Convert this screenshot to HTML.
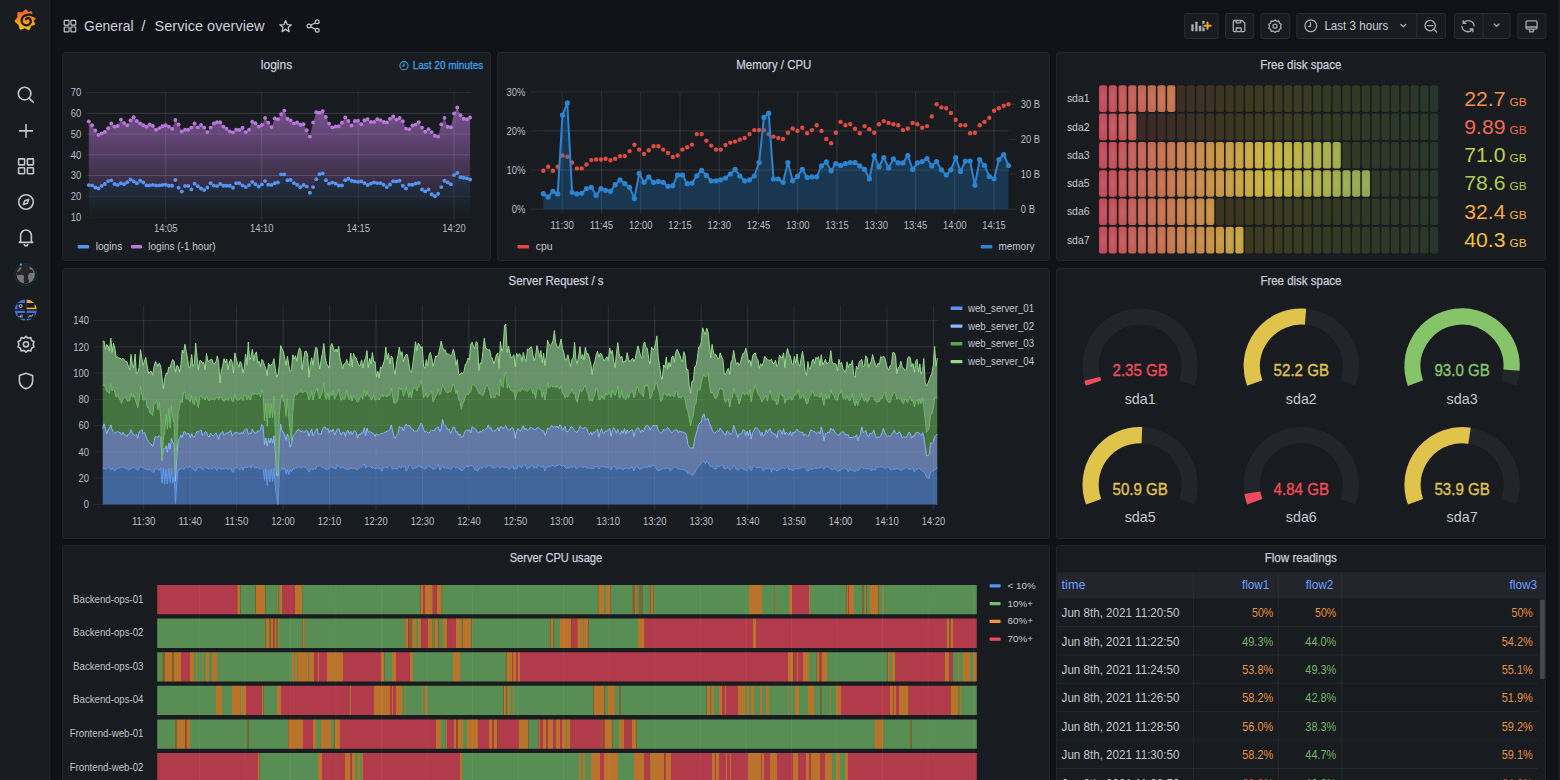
<!DOCTYPE html>
<html><head><meta charset="utf-8"><style>
html,body{margin:0;padding:0;width:1560px;height:780px;overflow:hidden;background:#111217;}
body{font-family:"Liberation Sans", sans-serif;position:relative;}
svg{position:absolute;left:0;top:0;font-family:"Liberation Sans", sans-serif;}
</style></head><body>
<svg width="1560" height="780" viewBox="0 0 1560 780">
<rect x="0" y="0" width="49" height="780" fill="#181b1f"/>
<rect x="49" y="0" width="1" height="780" fill="#202226"/>
<rect x="62.5" y="52.5" width="428" height="208" rx="2.5" fill="#181b1f" stroke="#222529" stroke-width="1"/>
<rect x="497.5" y="52.5" width="552" height="208" rx="2.5" fill="#181b1f" stroke="#222529" stroke-width="1"/>
<rect x="1056.5" y="52.5" width="489" height="208" rx="2.5" fill="#181b1f" stroke="#222529" stroke-width="1"/>
<rect x="62.5" y="268.5" width="987" height="270" rx="2.5" fill="#181b1f" stroke="#222529" stroke-width="1"/>
<rect x="1056.5" y="268.5" width="489" height="270" rx="2.5" fill="#181b1f" stroke="#222529" stroke-width="1"/>
<rect x="62.5" y="545.5" width="987" height="254" rx="2.5" fill="#181b1f" stroke="#222529" stroke-width="1"/>
<rect x="1056.5" y="545.5" width="489" height="254" rx="2.5" fill="#181b1f" stroke="#222529" stroke-width="1"/>
<text x="276.5" y="69.2" font-size="12.2" fill="#ccccdc" text-anchor="middle" font-weight="normal" textLength="31.3" lengthAdjust="spacingAndGlyphs" stroke="#ccccdc" stroke-width="0.25">logins</text>
<text x="773.8" y="69.2" font-size="12.2" fill="#ccccdc" text-anchor="middle" font-weight="normal" textLength="75" lengthAdjust="spacingAndGlyphs" stroke="#ccccdc" stroke-width="0.25">Memory / CPU</text>
<text x="1300.8" y="69.2" font-size="12.2" fill="#ccccdc" text-anchor="middle" font-weight="normal" textLength="81.2" lengthAdjust="spacingAndGlyphs" stroke="#ccccdc" stroke-width="0.25">Free disk space</text>
<text x="556" y="285.2" font-size="12.2" fill="#ccccdc" text-anchor="middle" font-weight="normal" textLength="95" lengthAdjust="spacingAndGlyphs" stroke="#ccccdc" stroke-width="0.25">Server Request / s</text>
<text x="1300.9" y="285.2" font-size="12.2" fill="#ccccdc" text-anchor="middle" font-weight="normal" textLength="81" lengthAdjust="spacingAndGlyphs" stroke="#ccccdc" stroke-width="0.25">Free disk space</text>
<text x="555.9" y="562.2" font-size="12.2" fill="#ccccdc" text-anchor="middle" font-weight="normal" textLength="92.5" lengthAdjust="spacingAndGlyphs" stroke="#ccccdc" stroke-width="0.25">Server CPU usage</text>
<text x="1300.8" y="562.2" font-size="12.2" fill="#ccccdc" text-anchor="middle" font-weight="normal" textLength="72.2" lengthAdjust="spacingAndGlyphs" stroke="#ccccdc" stroke-width="0.25">Flow readings</text>
<line x1="86" y1="92.6" x2="470.7" y2="92.6" stroke="rgba(204,204,220,0.10)" stroke-width="1"/>
<text x="81.2" y="96.4" font-size="10" fill="#bcbcc6" text-anchor="end" font-weight="normal" textLength="10.5" lengthAdjust="spacingAndGlyphs">70</text>
<line x1="86" y1="113.3" x2="470.7" y2="113.3" stroke="rgba(204,204,220,0.10)" stroke-width="1"/>
<text x="81.2" y="117.1" font-size="10" fill="#bcbcc6" text-anchor="end" font-weight="normal" textLength="10.5" lengthAdjust="spacingAndGlyphs">60</text>
<line x1="86" y1="134" x2="470.7" y2="134" stroke="rgba(204,204,220,0.10)" stroke-width="1"/>
<text x="81.2" y="137.8" font-size="10" fill="#bcbcc6" text-anchor="end" font-weight="normal" textLength="10.5" lengthAdjust="spacingAndGlyphs">50</text>
<line x1="86" y1="154.8" x2="470.7" y2="154.8" stroke="rgba(204,204,220,0.10)" stroke-width="1"/>
<text x="81.2" y="158.6" font-size="10" fill="#bcbcc6" text-anchor="end" font-weight="normal" textLength="10.5" lengthAdjust="spacingAndGlyphs">40</text>
<line x1="86" y1="175.5" x2="470.7" y2="175.5" stroke="rgba(204,204,220,0.10)" stroke-width="1"/>
<text x="81.2" y="179.3" font-size="10" fill="#bcbcc6" text-anchor="end" font-weight="normal" textLength="10.5" lengthAdjust="spacingAndGlyphs">30</text>
<line x1="86" y1="196.2" x2="470.7" y2="196.2" stroke="rgba(204,204,220,0.10)" stroke-width="1"/>
<text x="81.2" y="200" font-size="10" fill="#bcbcc6" text-anchor="end" font-weight="normal" textLength="10.5" lengthAdjust="spacingAndGlyphs">20</text>
<line x1="86" y1="216.9" x2="470.7" y2="216.9" stroke="rgba(204,204,220,0.10)" stroke-width="1"/>
<text x="81.2" y="220.7" font-size="10" fill="#bcbcc6" text-anchor="end" font-weight="normal" textLength="10.5" lengthAdjust="spacingAndGlyphs">10</text>
<line x1="165.7" y1="92.6" x2="165.7" y2="221" stroke="rgba(204,204,220,0.10)" stroke-width="1"/>
<text x="165.7" y="231.5" font-size="10" fill="#bcbcc6" text-anchor="middle" font-weight="normal" textLength="23.5" lengthAdjust="spacingAndGlyphs">14:05</text>
<line x1="261.7" y1="92.6" x2="261.7" y2="221" stroke="rgba(204,204,220,0.10)" stroke-width="1"/>
<text x="261.7" y="231.5" font-size="10" fill="#bcbcc6" text-anchor="middle" font-weight="normal" textLength="23.5" lengthAdjust="spacingAndGlyphs">14:10</text>
<line x1="358.3" y1="92.6" x2="358.3" y2="221" stroke="rgba(204,204,220,0.10)" stroke-width="1"/>
<text x="358.3" y="231.5" font-size="10" fill="#bcbcc6" text-anchor="middle" font-weight="normal" textLength="23.5" lengthAdjust="spacingAndGlyphs">14:15</text>
<line x1="454" y1="92.6" x2="454" y2="221" stroke="rgba(204,204,220,0.10)" stroke-width="1"/>
<text x="454" y="231.5" font-size="10" fill="#bcbcc6" text-anchor="middle" font-weight="normal" textLength="23.5" lengthAdjust="spacingAndGlyphs">14:20</text>
<defs><linearGradient id="gp" x1="0" y1="92.6" x2="0" y2="217" gradientUnits="userSpaceOnUse"><stop offset="0" stop-color="#b877d9" stop-opacity="0.68"/><stop offset="1" stop-color="#b877d9" stop-opacity="0.02"/></linearGradient><linearGradient id="gb" x1="0" y1="92.6" x2="0" y2="217" gradientUnits="userSpaceOnUse"><stop offset="0" stop-color="#5794f2" stop-opacity="0.6"/><stop offset="1" stop-color="#5794f2" stop-opacity="0.0"/></linearGradient></defs>
<polygon points="88.8,121.4 92.1,125.2 95.3,130.5 98.5,134.9 101.7,133.5 104.9,131.9 108.1,128.3 111.3,123.4 114.5,126.6 117.7,126 120.9,119.6 124.1,123.1 127.3,125.2 130.5,120.5 133.7,117.2 136.9,121 140.1,123.4 143.3,125.3 146.5,126.7 149.7,124.5 152.9,126 156.1,129.7 159.3,128.1 162.5,126.2 165.7,125.2 168.9,126.6 172.1,128.8 175.4,120 178.6,124.5 181.8,131.4 185,129.8 188.2,129.8 191.4,127.6 194.6,123.4 197.8,127.4 201,125 204.2,127.6 207.4,132.1 210.6,127.6 213.8,123.4 217,122.2 220.2,122.2 223.4,126.6 226.6,128.8 229.8,131.4 233,132.4 236.2,129.8 239.4,130 242.6,127.8 245.8,132.1 249,129.8 252.2,121.7 255.4,123.3 258.7,126.6 261.9,125 265.1,117.9 268.3,122.6 271.5,127.1 274.7,118.4 277.9,119.3 281.1,114.1 284.3,110.6 287.5,118.7 290.7,120.5 293.9,123.4 297.1,122.5 300.3,124.8 303.5,124.3 306.7,130.3 309.9,136.6 313.1,122.4 316.3,112.2 319.5,112.7 322.7,111.3 325.9,117 329.1,123.6 332.3,127.4 335.5,126.5 338.7,126.2 341.9,122.7 345.2,117.4 348.4,121 351.6,125.5 354.8,121 358,120.8 361.2,124.3 364.4,120.3 367.6,119.1 370.8,121.9 374,121.9 377.2,119.3 380.4,120.1 383.6,122 386.8,122.4 390,118.7 393.2,116.5 396.4,119.6 399.6,118 402.8,121.3 406,128.6 409.2,129.3 412.4,125.5 415.6,124.6 418.8,122.2 422,127.6 425.2,131.7 428.5,129.3 431.7,132.1 434.9,135.7 438.1,136.6 441.3,124.4 444.5,117.9 447.7,126.7 450.9,127.2 454.1,113.5 457.3,107.5 460.5,115.3 463.7,118.7 466.9,119.3 470.1,117.5 470.1,179.5 466.9,178.4 463.7,177.7 460.5,177.2 457.3,172.9 454.1,175.1 450.9,184.3 447.7,182.4 444.5,180.7 441.3,187.1 438.1,193.7 434.9,196.2 431.7,194.2 428.5,189.5 425.2,191.4 422,189.5 418.8,182.9 415.6,183.6 412.4,184.7 409.2,184.8 406,188.5 402.8,185.7 399.6,180.8 396.4,181.4 393.2,181.2 390,184.5 386.8,187.1 383.6,184.7 380.4,183.1 377.2,183.1 374,182.4 370.8,183.6 367.6,185 364.4,183.1 361.2,181.4 358,181.9 354.8,181.4 351.6,180.7 348.4,178.8 345.2,180.3 341.9,185.5 338.7,185.5 335.5,183.6 332.3,182.6 329.1,183.6 325.9,180.2 322.7,173.4 319.5,174.3 316.3,179.3 313.1,187.1 309.9,192.8 306.7,186.6 303.5,185 300.3,187.2 297.1,184.8 293.9,183.1 290.7,180 287.5,180.2 284.3,174.4 281.1,174.4 277.9,182.5 274.7,183.2 271.5,184.9 268.3,184.7 265.1,181.1 261.9,184.4 258.7,186.6 255.4,184.2 252.2,182 249,185.1 245.8,187.1 242.6,185.4 239.4,183.3 236.2,183.3 233,187.7 229.8,185.8 226.6,185.8 223.4,185.8 220.2,184 217,186.1 213.8,185.6 210.6,183.3 207.4,187.5 204.2,190.1 201,188.5 197.8,186.3 194.6,183.7 191.4,189.4 188.2,185.9 185,185.9 181.8,191.5 178.6,187.7 175.4,180 172.1,185.8 168.9,185.8 165.7,184.7 162.5,184.9 159.3,185.4 156.1,185.4 152.9,184.9 149.7,185.4 146.5,185.4 143.3,182.5 140.1,180.7 136.9,183.3 133.7,181.4 130.5,179.5 127.3,182.3 124.1,184.2 120.9,183.2 117.7,184.9 114.5,184 111.3,180.4 108.1,181.1 104.9,184 101.7,185.9 98.5,188.5 95.3,187.5 92.1,185.4 88.8,185.1" fill="url(#gp)"/>
<polygon points="88.8,185.1 92.1,185.4 95.3,187.5 98.5,188.5 101.7,185.9 104.9,184 108.1,181.1 111.3,180.4 114.5,184 117.7,184.9 120.9,183.2 124.1,184.2 127.3,182.3 130.5,179.5 133.7,181.4 136.9,183.3 140.1,180.7 143.3,182.5 146.5,185.4 149.7,185.4 152.9,184.9 156.1,185.4 159.3,185.4 162.5,184.9 165.7,184.7 168.9,185.8 172.1,185.8 175.4,180 178.6,187.7 181.8,191.5 185,185.9 188.2,185.9 191.4,189.4 194.6,183.7 197.8,186.3 201,188.5 204.2,190.1 207.4,187.5 210.6,183.3 213.8,185.6 217,186.1 220.2,184 223.4,185.8 226.6,185.8 229.8,185.8 233,187.7 236.2,183.3 239.4,183.3 242.6,185.4 245.8,187.1 249,185.1 252.2,182 255.4,184.2 258.7,186.6 261.9,184.4 265.1,181.1 268.3,184.7 271.5,184.9 274.7,183.2 277.9,182.5 281.1,174.4 284.3,174.4 287.5,180.2 290.7,180 293.9,183.1 297.1,184.8 300.3,187.2 303.5,185 306.7,186.6 309.9,192.8 313.1,187.1 316.3,179.3 319.5,174.3 322.7,173.4 325.9,180.2 329.1,183.6 332.3,182.6 335.5,183.6 338.7,185.5 341.9,185.5 345.2,180.3 348.4,178.8 351.6,180.7 354.8,181.4 358,181.9 361.2,181.4 364.4,183.1 367.6,185 370.8,183.6 374,182.4 377.2,183.1 380.4,183.1 383.6,184.7 386.8,187.1 390,184.5 393.2,181.2 396.4,181.4 399.6,180.8 402.8,185.7 406,188.5 409.2,184.8 412.4,184.7 415.6,183.6 418.8,182.9 422,189.5 425.2,191.4 428.5,189.5 431.7,194.2 434.9,196.2 438.1,193.7 441.3,187.1 444.5,180.7 447.7,182.4 450.9,184.3 454.1,175.1 457.3,172.9 460.5,177.2 463.7,177.7 466.9,178.4 470.1,179.5 470.1,217 88.85,217" fill="#181b1f"/>
<polygon points="88.8,185.1 92.1,185.4 95.3,187.5 98.5,188.5 101.7,185.9 104.9,184 108.1,181.1 111.3,180.4 114.5,184 117.7,184.9 120.9,183.2 124.1,184.2 127.3,182.3 130.5,179.5 133.7,181.4 136.9,183.3 140.1,180.7 143.3,182.5 146.5,185.4 149.7,185.4 152.9,184.9 156.1,185.4 159.3,185.4 162.5,184.9 165.7,184.7 168.9,185.8 172.1,185.8 175.4,180 178.6,187.7 181.8,191.5 185,185.9 188.2,185.9 191.4,189.4 194.6,183.7 197.8,186.3 201,188.5 204.2,190.1 207.4,187.5 210.6,183.3 213.8,185.6 217,186.1 220.2,184 223.4,185.8 226.6,185.8 229.8,185.8 233,187.7 236.2,183.3 239.4,183.3 242.6,185.4 245.8,187.1 249,185.1 252.2,182 255.4,184.2 258.7,186.6 261.9,184.4 265.1,181.1 268.3,184.7 271.5,184.9 274.7,183.2 277.9,182.5 281.1,174.4 284.3,174.4 287.5,180.2 290.7,180 293.9,183.1 297.1,184.8 300.3,187.2 303.5,185 306.7,186.6 309.9,192.8 313.1,187.1 316.3,179.3 319.5,174.3 322.7,173.4 325.9,180.2 329.1,183.6 332.3,182.6 335.5,183.6 338.7,185.5 341.9,185.5 345.2,180.3 348.4,178.8 351.6,180.7 354.8,181.4 358,181.9 361.2,181.4 364.4,183.1 367.6,185 370.8,183.6 374,182.4 377.2,183.1 380.4,183.1 383.6,184.7 386.8,187.1 390,184.5 393.2,181.2 396.4,181.4 399.6,180.8 402.8,185.7 406,188.5 409.2,184.8 412.4,184.7 415.6,183.6 418.8,182.9 422,189.5 425.2,191.4 428.5,189.5 431.7,194.2 434.9,196.2 438.1,193.7 441.3,187.1 444.5,180.7 447.7,182.4 450.9,184.3 454.1,175.1 457.3,172.9 460.5,177.2 463.7,177.7 466.9,178.4 470.1,179.5 470.1,217 88.85,217" fill="url(#gb)"/>
<line x1="88" y1="113.3" x2="470.7" y2="113.3" stroke="rgba(204,204,220,0.09)" stroke-width="1"/>
<line x1="88" y1="134" x2="470.7" y2="134" stroke="rgba(204,204,220,0.09)" stroke-width="1"/>
<line x1="88" y1="154.8" x2="470.7" y2="154.8" stroke="rgba(204,204,220,0.09)" stroke-width="1"/>
<line x1="88" y1="175.5" x2="470.7" y2="175.5" stroke="rgba(204,204,220,0.09)" stroke-width="1"/>
<line x1="88" y1="196.2" x2="470.7" y2="196.2" stroke="rgba(204,204,220,0.09)" stroke-width="1"/>
<line x1="165.7" y1="120" x2="165.7" y2="217" stroke="rgba(204,204,220,0.09)" stroke-width="1"/>
<line x1="261.7" y1="120" x2="261.7" y2="217" stroke="rgba(204,204,220,0.09)" stroke-width="1"/>
<line x1="358.3" y1="120" x2="358.3" y2="217" stroke="rgba(204,204,220,0.09)" stroke-width="1"/>
<line x1="454" y1="120" x2="454" y2="217" stroke="rgba(204,204,220,0.09)" stroke-width="1"/>
<circle cx="88.8" cy="121.4" r="1.95" fill="#b877d9"/>
<circle cx="92.1" cy="125.2" r="1.95" fill="#b877d9"/>
<circle cx="95.3" cy="130.5" r="1.95" fill="#b877d9"/>
<circle cx="98.5" cy="134.9" r="1.95" fill="#b877d9"/>
<circle cx="101.7" cy="133.5" r="1.95" fill="#b877d9"/>
<circle cx="104.9" cy="131.9" r="1.95" fill="#b877d9"/>
<circle cx="108.1" cy="128.3" r="1.95" fill="#b877d9"/>
<circle cx="111.3" cy="123.4" r="1.95" fill="#b877d9"/>
<circle cx="114.5" cy="126.6" r="1.95" fill="#b877d9"/>
<circle cx="117.7" cy="126" r="1.95" fill="#b877d9"/>
<circle cx="120.9" cy="119.6" r="1.95" fill="#b877d9"/>
<circle cx="124.1" cy="123.1" r="1.95" fill="#b877d9"/>
<circle cx="127.3" cy="125.2" r="1.95" fill="#b877d9"/>
<circle cx="130.5" cy="120.5" r="1.95" fill="#b877d9"/>
<circle cx="133.7" cy="117.2" r="1.95" fill="#b877d9"/>
<circle cx="136.9" cy="121" r="1.95" fill="#b877d9"/>
<circle cx="140.1" cy="123.4" r="1.95" fill="#b877d9"/>
<circle cx="143.3" cy="125.3" r="1.95" fill="#b877d9"/>
<circle cx="146.5" cy="126.7" r="1.95" fill="#b877d9"/>
<circle cx="149.7" cy="124.5" r="1.95" fill="#b877d9"/>
<circle cx="152.9" cy="126" r="1.95" fill="#b877d9"/>
<circle cx="156.1" cy="129.7" r="1.95" fill="#b877d9"/>
<circle cx="159.3" cy="128.1" r="1.95" fill="#b877d9"/>
<circle cx="162.5" cy="126.2" r="1.95" fill="#b877d9"/>
<circle cx="165.7" cy="125.2" r="1.95" fill="#b877d9"/>
<circle cx="168.9" cy="126.6" r="1.95" fill="#b877d9"/>
<circle cx="172.1" cy="128.8" r="1.95" fill="#b877d9"/>
<circle cx="175.4" cy="120" r="1.95" fill="#b877d9"/>
<circle cx="178.6" cy="124.5" r="1.95" fill="#b877d9"/>
<circle cx="181.8" cy="131.4" r="1.95" fill="#b877d9"/>
<circle cx="185" cy="129.8" r="1.95" fill="#b877d9"/>
<circle cx="188.2" cy="129.8" r="1.95" fill="#b877d9"/>
<circle cx="191.4" cy="127.6" r="1.95" fill="#b877d9"/>
<circle cx="194.6" cy="123.4" r="1.95" fill="#b877d9"/>
<circle cx="197.8" cy="127.4" r="1.95" fill="#b877d9"/>
<circle cx="201" cy="125" r="1.95" fill="#b877d9"/>
<circle cx="204.2" cy="127.6" r="1.95" fill="#b877d9"/>
<circle cx="207.4" cy="132.1" r="1.95" fill="#b877d9"/>
<circle cx="210.6" cy="127.6" r="1.95" fill="#b877d9"/>
<circle cx="213.8" cy="123.4" r="1.95" fill="#b877d9"/>
<circle cx="217" cy="122.2" r="1.95" fill="#b877d9"/>
<circle cx="220.2" cy="122.2" r="1.95" fill="#b877d9"/>
<circle cx="223.4" cy="126.6" r="1.95" fill="#b877d9"/>
<circle cx="226.6" cy="128.8" r="1.95" fill="#b877d9"/>
<circle cx="229.8" cy="131.4" r="1.95" fill="#b877d9"/>
<circle cx="233" cy="132.4" r="1.95" fill="#b877d9"/>
<circle cx="236.2" cy="129.8" r="1.95" fill="#b877d9"/>
<circle cx="239.4" cy="130" r="1.95" fill="#b877d9"/>
<circle cx="242.6" cy="127.8" r="1.95" fill="#b877d9"/>
<circle cx="245.8" cy="132.1" r="1.95" fill="#b877d9"/>
<circle cx="249" cy="129.8" r="1.95" fill="#b877d9"/>
<circle cx="252.2" cy="121.7" r="1.95" fill="#b877d9"/>
<circle cx="255.4" cy="123.3" r="1.95" fill="#b877d9"/>
<circle cx="258.7" cy="126.6" r="1.95" fill="#b877d9"/>
<circle cx="261.9" cy="125" r="1.95" fill="#b877d9"/>
<circle cx="265.1" cy="117.9" r="1.95" fill="#b877d9"/>
<circle cx="268.3" cy="122.6" r="1.95" fill="#b877d9"/>
<circle cx="271.5" cy="127.1" r="1.95" fill="#b877d9"/>
<circle cx="274.7" cy="118.4" r="1.95" fill="#b877d9"/>
<circle cx="277.9" cy="119.3" r="1.95" fill="#b877d9"/>
<circle cx="281.1" cy="114.1" r="1.95" fill="#b877d9"/>
<circle cx="284.3" cy="110.6" r="1.95" fill="#b877d9"/>
<circle cx="287.5" cy="118.7" r="1.95" fill="#b877d9"/>
<circle cx="290.7" cy="120.5" r="1.95" fill="#b877d9"/>
<circle cx="293.9" cy="123.4" r="1.95" fill="#b877d9"/>
<circle cx="297.1" cy="122.5" r="1.95" fill="#b877d9"/>
<circle cx="300.3" cy="124.8" r="1.95" fill="#b877d9"/>
<circle cx="303.5" cy="124.3" r="1.95" fill="#b877d9"/>
<circle cx="306.7" cy="130.3" r="1.95" fill="#b877d9"/>
<circle cx="309.9" cy="136.6" r="1.95" fill="#b877d9"/>
<circle cx="313.1" cy="122.4" r="1.95" fill="#b877d9"/>
<circle cx="316.3" cy="112.2" r="1.95" fill="#b877d9"/>
<circle cx="319.5" cy="112.7" r="1.95" fill="#b877d9"/>
<circle cx="322.7" cy="111.3" r="1.95" fill="#b877d9"/>
<circle cx="325.9" cy="117" r="1.95" fill="#b877d9"/>
<circle cx="329.1" cy="123.6" r="1.95" fill="#b877d9"/>
<circle cx="332.3" cy="127.4" r="1.95" fill="#b877d9"/>
<circle cx="335.5" cy="126.5" r="1.95" fill="#b877d9"/>
<circle cx="338.7" cy="126.2" r="1.95" fill="#b877d9"/>
<circle cx="341.9" cy="122.7" r="1.95" fill="#b877d9"/>
<circle cx="345.2" cy="117.4" r="1.95" fill="#b877d9"/>
<circle cx="348.4" cy="121" r="1.95" fill="#b877d9"/>
<circle cx="351.6" cy="125.5" r="1.95" fill="#b877d9"/>
<circle cx="354.8" cy="121" r="1.95" fill="#b877d9"/>
<circle cx="358" cy="120.8" r="1.95" fill="#b877d9"/>
<circle cx="361.2" cy="124.3" r="1.95" fill="#b877d9"/>
<circle cx="364.4" cy="120.3" r="1.95" fill="#b877d9"/>
<circle cx="367.6" cy="119.1" r="1.95" fill="#b877d9"/>
<circle cx="370.8" cy="121.9" r="1.95" fill="#b877d9"/>
<circle cx="374" cy="121.9" r="1.95" fill="#b877d9"/>
<circle cx="377.2" cy="119.3" r="1.95" fill="#b877d9"/>
<circle cx="380.4" cy="120.1" r="1.95" fill="#b877d9"/>
<circle cx="383.6" cy="122" r="1.95" fill="#b877d9"/>
<circle cx="386.8" cy="122.4" r="1.95" fill="#b877d9"/>
<circle cx="390" cy="118.7" r="1.95" fill="#b877d9"/>
<circle cx="393.2" cy="116.5" r="1.95" fill="#b877d9"/>
<circle cx="396.4" cy="119.6" r="1.95" fill="#b877d9"/>
<circle cx="399.6" cy="118" r="1.95" fill="#b877d9"/>
<circle cx="402.8" cy="121.3" r="1.95" fill="#b877d9"/>
<circle cx="406" cy="128.6" r="1.95" fill="#b877d9"/>
<circle cx="409.2" cy="129.3" r="1.95" fill="#b877d9"/>
<circle cx="412.4" cy="125.5" r="1.95" fill="#b877d9"/>
<circle cx="415.6" cy="124.6" r="1.95" fill="#b877d9"/>
<circle cx="418.8" cy="122.2" r="1.95" fill="#b877d9"/>
<circle cx="422" cy="127.6" r="1.95" fill="#b877d9"/>
<circle cx="425.2" cy="131.7" r="1.95" fill="#b877d9"/>
<circle cx="428.5" cy="129.3" r="1.95" fill="#b877d9"/>
<circle cx="431.7" cy="132.1" r="1.95" fill="#b877d9"/>
<circle cx="434.9" cy="135.7" r="1.95" fill="#b877d9"/>
<circle cx="438.1" cy="136.6" r="1.95" fill="#b877d9"/>
<circle cx="441.3" cy="124.4" r="1.95" fill="#b877d9"/>
<circle cx="444.5" cy="117.9" r="1.95" fill="#b877d9"/>
<circle cx="447.7" cy="126.7" r="1.95" fill="#b877d9"/>
<circle cx="450.9" cy="127.2" r="1.95" fill="#b877d9"/>
<circle cx="454.1" cy="113.5" r="1.95" fill="#b877d9"/>
<circle cx="457.3" cy="107.5" r="1.95" fill="#b877d9"/>
<circle cx="460.5" cy="115.3" r="1.95" fill="#b877d9"/>
<circle cx="463.7" cy="118.7" r="1.95" fill="#b877d9"/>
<circle cx="466.9" cy="119.3" r="1.95" fill="#b877d9"/>
<circle cx="470.1" cy="117.5" r="1.95" fill="#b877d9"/>
<circle cx="88.8" cy="185.1" r="1.95" fill="#5794f2"/>
<circle cx="92.1" cy="185.4" r="1.95" fill="#5794f2"/>
<circle cx="95.3" cy="187.5" r="1.95" fill="#5794f2"/>
<circle cx="98.5" cy="188.5" r="1.95" fill="#5794f2"/>
<circle cx="101.7" cy="185.9" r="1.95" fill="#5794f2"/>
<circle cx="104.9" cy="184" r="1.95" fill="#5794f2"/>
<circle cx="108.1" cy="181.1" r="1.95" fill="#5794f2"/>
<circle cx="111.3" cy="180.4" r="1.95" fill="#5794f2"/>
<circle cx="114.5" cy="184" r="1.95" fill="#5794f2"/>
<circle cx="117.7" cy="184.9" r="1.95" fill="#5794f2"/>
<circle cx="120.9" cy="183.2" r="1.95" fill="#5794f2"/>
<circle cx="124.1" cy="184.2" r="1.95" fill="#5794f2"/>
<circle cx="127.3" cy="182.3" r="1.95" fill="#5794f2"/>
<circle cx="130.5" cy="179.5" r="1.95" fill="#5794f2"/>
<circle cx="133.7" cy="181.4" r="1.95" fill="#5794f2"/>
<circle cx="136.9" cy="183.3" r="1.95" fill="#5794f2"/>
<circle cx="140.1" cy="180.7" r="1.95" fill="#5794f2"/>
<circle cx="143.3" cy="182.5" r="1.95" fill="#5794f2"/>
<circle cx="146.5" cy="185.4" r="1.95" fill="#5794f2"/>
<circle cx="149.7" cy="185.4" r="1.95" fill="#5794f2"/>
<circle cx="152.9" cy="184.9" r="1.95" fill="#5794f2"/>
<circle cx="156.1" cy="185.4" r="1.95" fill="#5794f2"/>
<circle cx="159.3" cy="185.4" r="1.95" fill="#5794f2"/>
<circle cx="162.5" cy="184.9" r="1.95" fill="#5794f2"/>
<circle cx="165.7" cy="184.7" r="1.95" fill="#5794f2"/>
<circle cx="168.9" cy="185.8" r="1.95" fill="#5794f2"/>
<circle cx="172.1" cy="185.8" r="1.95" fill="#5794f2"/>
<circle cx="175.4" cy="180" r="1.95" fill="#5794f2"/>
<circle cx="178.6" cy="187.7" r="1.95" fill="#5794f2"/>
<circle cx="181.8" cy="191.5" r="1.95" fill="#5794f2"/>
<circle cx="185" cy="185.9" r="1.95" fill="#5794f2"/>
<circle cx="188.2" cy="185.9" r="1.95" fill="#5794f2"/>
<circle cx="191.4" cy="189.4" r="1.95" fill="#5794f2"/>
<circle cx="194.6" cy="183.7" r="1.95" fill="#5794f2"/>
<circle cx="197.8" cy="186.3" r="1.95" fill="#5794f2"/>
<circle cx="201" cy="188.5" r="1.95" fill="#5794f2"/>
<circle cx="204.2" cy="190.1" r="1.95" fill="#5794f2"/>
<circle cx="207.4" cy="187.5" r="1.95" fill="#5794f2"/>
<circle cx="210.6" cy="183.3" r="1.95" fill="#5794f2"/>
<circle cx="213.8" cy="185.6" r="1.95" fill="#5794f2"/>
<circle cx="217" cy="186.1" r="1.95" fill="#5794f2"/>
<circle cx="220.2" cy="184" r="1.95" fill="#5794f2"/>
<circle cx="223.4" cy="185.8" r="1.95" fill="#5794f2"/>
<circle cx="226.6" cy="185.8" r="1.95" fill="#5794f2"/>
<circle cx="229.8" cy="185.8" r="1.95" fill="#5794f2"/>
<circle cx="233" cy="187.7" r="1.95" fill="#5794f2"/>
<circle cx="236.2" cy="183.3" r="1.95" fill="#5794f2"/>
<circle cx="239.4" cy="183.3" r="1.95" fill="#5794f2"/>
<circle cx="242.6" cy="185.4" r="1.95" fill="#5794f2"/>
<circle cx="245.8" cy="187.1" r="1.95" fill="#5794f2"/>
<circle cx="249" cy="185.1" r="1.95" fill="#5794f2"/>
<circle cx="252.2" cy="182" r="1.95" fill="#5794f2"/>
<circle cx="255.4" cy="184.2" r="1.95" fill="#5794f2"/>
<circle cx="258.7" cy="186.6" r="1.95" fill="#5794f2"/>
<circle cx="261.9" cy="184.4" r="1.95" fill="#5794f2"/>
<circle cx="265.1" cy="181.1" r="1.95" fill="#5794f2"/>
<circle cx="268.3" cy="184.7" r="1.95" fill="#5794f2"/>
<circle cx="271.5" cy="184.9" r="1.95" fill="#5794f2"/>
<circle cx="274.7" cy="183.2" r="1.95" fill="#5794f2"/>
<circle cx="277.9" cy="182.5" r="1.95" fill="#5794f2"/>
<circle cx="281.1" cy="174.4" r="1.95" fill="#5794f2"/>
<circle cx="284.3" cy="174.4" r="1.95" fill="#5794f2"/>
<circle cx="287.5" cy="180.2" r="1.95" fill="#5794f2"/>
<circle cx="290.7" cy="180" r="1.95" fill="#5794f2"/>
<circle cx="293.9" cy="183.1" r="1.95" fill="#5794f2"/>
<circle cx="297.1" cy="184.8" r="1.95" fill="#5794f2"/>
<circle cx="300.3" cy="187.2" r="1.95" fill="#5794f2"/>
<circle cx="303.5" cy="185" r="1.95" fill="#5794f2"/>
<circle cx="306.7" cy="186.6" r="1.95" fill="#5794f2"/>
<circle cx="309.9" cy="192.8" r="1.95" fill="#5794f2"/>
<circle cx="313.1" cy="187.1" r="1.95" fill="#5794f2"/>
<circle cx="316.3" cy="179.3" r="1.95" fill="#5794f2"/>
<circle cx="319.5" cy="174.3" r="1.95" fill="#5794f2"/>
<circle cx="322.7" cy="173.4" r="1.95" fill="#5794f2"/>
<circle cx="325.9" cy="180.2" r="1.95" fill="#5794f2"/>
<circle cx="329.1" cy="183.6" r="1.95" fill="#5794f2"/>
<circle cx="332.3" cy="182.6" r="1.95" fill="#5794f2"/>
<circle cx="335.5" cy="183.6" r="1.95" fill="#5794f2"/>
<circle cx="338.7" cy="185.5" r="1.95" fill="#5794f2"/>
<circle cx="341.9" cy="185.5" r="1.95" fill="#5794f2"/>
<circle cx="345.2" cy="180.3" r="1.95" fill="#5794f2"/>
<circle cx="348.4" cy="178.8" r="1.95" fill="#5794f2"/>
<circle cx="351.6" cy="180.7" r="1.95" fill="#5794f2"/>
<circle cx="354.8" cy="181.4" r="1.95" fill="#5794f2"/>
<circle cx="358" cy="181.9" r="1.95" fill="#5794f2"/>
<circle cx="361.2" cy="181.4" r="1.95" fill="#5794f2"/>
<circle cx="364.4" cy="183.1" r="1.95" fill="#5794f2"/>
<circle cx="367.6" cy="185" r="1.95" fill="#5794f2"/>
<circle cx="370.8" cy="183.6" r="1.95" fill="#5794f2"/>
<circle cx="374" cy="182.4" r="1.95" fill="#5794f2"/>
<circle cx="377.2" cy="183.1" r="1.95" fill="#5794f2"/>
<circle cx="380.4" cy="183.1" r="1.95" fill="#5794f2"/>
<circle cx="383.6" cy="184.7" r="1.95" fill="#5794f2"/>
<circle cx="386.8" cy="187.1" r="1.95" fill="#5794f2"/>
<circle cx="390" cy="184.5" r="1.95" fill="#5794f2"/>
<circle cx="393.2" cy="181.2" r="1.95" fill="#5794f2"/>
<circle cx="396.4" cy="181.4" r="1.95" fill="#5794f2"/>
<circle cx="399.6" cy="180.8" r="1.95" fill="#5794f2"/>
<circle cx="402.8" cy="185.7" r="1.95" fill="#5794f2"/>
<circle cx="406" cy="188.5" r="1.95" fill="#5794f2"/>
<circle cx="409.2" cy="184.8" r="1.95" fill="#5794f2"/>
<circle cx="412.4" cy="184.7" r="1.95" fill="#5794f2"/>
<circle cx="415.6" cy="183.6" r="1.95" fill="#5794f2"/>
<circle cx="418.8" cy="182.9" r="1.95" fill="#5794f2"/>
<circle cx="422" cy="189.5" r="1.95" fill="#5794f2"/>
<circle cx="425.2" cy="191.4" r="1.95" fill="#5794f2"/>
<circle cx="428.5" cy="189.5" r="1.95" fill="#5794f2"/>
<circle cx="431.7" cy="194.2" r="1.95" fill="#5794f2"/>
<circle cx="434.9" cy="196.2" r="1.95" fill="#5794f2"/>
<circle cx="438.1" cy="193.7" r="1.95" fill="#5794f2"/>
<circle cx="441.3" cy="187.1" r="1.95" fill="#5794f2"/>
<circle cx="444.5" cy="180.7" r="1.95" fill="#5794f2"/>
<circle cx="447.7" cy="182.4" r="1.95" fill="#5794f2"/>
<circle cx="450.9" cy="184.3" r="1.95" fill="#5794f2"/>
<circle cx="454.1" cy="175.1" r="1.95" fill="#5794f2"/>
<circle cx="457.3" cy="172.9" r="1.95" fill="#5794f2"/>
<circle cx="460.5" cy="177.2" r="1.95" fill="#5794f2"/>
<circle cx="463.7" cy="177.7" r="1.95" fill="#5794f2"/>
<circle cx="466.9" cy="178.4" r="1.95" fill="#5794f2"/>
<circle cx="470.1" cy="179.5" r="1.95" fill="#5794f2"/>
<rect x="77.7" y="245.1" width="11.3" height="3.3" rx="0.8" fill="#5794f2"/>
<text x="95.7" y="250.2" font-size="10.4" fill="#c7c7d1" text-anchor="start" font-weight="normal" textLength="26.6" lengthAdjust="spacingAndGlyphs">logins</text>
<rect x="131" y="245.1" width="11" height="3.3" rx="0.8" fill="#b877d9"/>
<text x="148.3" y="250.2" font-size="10.4" fill="#c7c7d1" text-anchor="start" font-weight="normal" textLength="67.4" lengthAdjust="spacingAndGlyphs">logins (-1 hour)</text>
<circle cx="404" cy="65.7" r="4.1" fill="none" stroke="#3d9fe3" stroke-width="1.1"/>
<path d="M404 63.2 V66 H401.9" fill="none" stroke="#3d9fe3" stroke-width="1.1"/>
<text x="483.3" y="69.4" font-size="10.2" fill="#3d9fe3" text-anchor="end" font-weight="normal" textLength="70.6" lengthAdjust="spacingAndGlyphs" stroke="#3d9fe3" stroke-width="0.3">Last 20 minutes</text>
<line x1="530.8" y1="91.9" x2="1009.5" y2="91.9" stroke="rgba(204,204,220,0.10)" stroke-width="1"/>
<text x="525.4" y="95.7" font-size="10" fill="#bcbcc6" text-anchor="end" font-weight="normal" textLength="18.8" lengthAdjust="spacingAndGlyphs">30%</text>
<line x1="530.8" y1="130.9" x2="1009.5" y2="130.9" stroke="rgba(204,204,220,0.10)" stroke-width="1"/>
<text x="525.4" y="134.7" font-size="10" fill="#bcbcc6" text-anchor="end" font-weight="normal" textLength="18.8" lengthAdjust="spacingAndGlyphs">20%</text>
<line x1="530.8" y1="170" x2="1009.5" y2="170" stroke="rgba(204,204,220,0.10)" stroke-width="1"/>
<text x="525.4" y="173.8" font-size="10" fill="#bcbcc6" text-anchor="end" font-weight="normal" textLength="18.8" lengthAdjust="spacingAndGlyphs">10%</text>
<line x1="530.8" y1="209.2" x2="1009.5" y2="209.2" stroke="rgba(204,204,220,0.10)" stroke-width="1"/>
<text x="525.4" y="213" font-size="10" fill="#bcbcc6" text-anchor="end" font-weight="normal" textLength="13.6" lengthAdjust="spacingAndGlyphs">0%</text>
<line x1="1009.5" y1="104.2" x2="1016.4" y2="104.2" stroke="rgba(204,204,220,0.10)" stroke-width="1"/>
<text x="1020.8" y="108" font-size="10" fill="#bcbcc6" text-anchor="start" font-weight="normal" textLength="19.3" lengthAdjust="spacingAndGlyphs">30 B</text>
<line x1="1009.5" y1="139.6" x2="1016.4" y2="139.6" stroke="rgba(204,204,220,0.10)" stroke-width="1"/>
<text x="1020.8" y="143.4" font-size="10" fill="#bcbcc6" text-anchor="start" font-weight="normal" textLength="19.3" lengthAdjust="spacingAndGlyphs">20 B</text>
<line x1="1009.5" y1="174" x2="1016.4" y2="174" stroke="rgba(204,204,220,0.10)" stroke-width="1"/>
<text x="1020.8" y="177.8" font-size="10" fill="#bcbcc6" text-anchor="start" font-weight="normal" textLength="19.3" lengthAdjust="spacingAndGlyphs">10 B</text>
<line x1="1009.5" y1="209.2" x2="1016.4" y2="209.2" stroke="rgba(204,204,220,0.10)" stroke-width="1"/>
<text x="1020.8" y="213" font-size="10" fill="#bcbcc6" text-anchor="start" font-weight="normal" textLength="14.1" lengthAdjust="spacingAndGlyphs">0 B</text>
<line x1="562.2" y1="91.9" x2="562.2" y2="214" stroke="rgba(204,204,220,0.10)" stroke-width="1"/>
<text x="562.2" y="228.5" font-size="10" fill="#bcbcc6" text-anchor="middle" font-weight="normal" textLength="23.5" lengthAdjust="spacingAndGlyphs">11:30</text>
<line x1="601.5" y1="91.9" x2="601.5" y2="214" stroke="rgba(204,204,220,0.10)" stroke-width="1"/>
<text x="601.5" y="228.5" font-size="10" fill="#bcbcc6" text-anchor="middle" font-weight="normal" textLength="23.5" lengthAdjust="spacingAndGlyphs">11:45</text>
<line x1="640.7" y1="91.9" x2="640.7" y2="214" stroke="rgba(204,204,220,0.10)" stroke-width="1"/>
<text x="640.7" y="228.5" font-size="10" fill="#bcbcc6" text-anchor="middle" font-weight="normal" textLength="23.5" lengthAdjust="spacingAndGlyphs">12:00</text>
<line x1="680" y1="91.9" x2="680" y2="214" stroke="rgba(204,204,220,0.10)" stroke-width="1"/>
<text x="680" y="228.5" font-size="10" fill="#bcbcc6" text-anchor="middle" font-weight="normal" textLength="23.5" lengthAdjust="spacingAndGlyphs">12:15</text>
<line x1="719.2" y1="91.9" x2="719.2" y2="214" stroke="rgba(204,204,220,0.10)" stroke-width="1"/>
<text x="719.2" y="228.5" font-size="10" fill="#bcbcc6" text-anchor="middle" font-weight="normal" textLength="23.5" lengthAdjust="spacingAndGlyphs">12:30</text>
<line x1="758.5" y1="91.9" x2="758.5" y2="214" stroke="rgba(204,204,220,0.10)" stroke-width="1"/>
<text x="758.5" y="228.5" font-size="10" fill="#bcbcc6" text-anchor="middle" font-weight="normal" textLength="23.5" lengthAdjust="spacingAndGlyphs">12:45</text>
<line x1="797.7" y1="91.9" x2="797.7" y2="214" stroke="rgba(204,204,220,0.10)" stroke-width="1"/>
<text x="797.7" y="228.5" font-size="10" fill="#bcbcc6" text-anchor="middle" font-weight="normal" textLength="23.5" lengthAdjust="spacingAndGlyphs">13:00</text>
<line x1="837" y1="91.9" x2="837" y2="214" stroke="rgba(204,204,220,0.10)" stroke-width="1"/>
<text x="837" y="228.5" font-size="10" fill="#bcbcc6" text-anchor="middle" font-weight="normal" textLength="23.5" lengthAdjust="spacingAndGlyphs">13:15</text>
<line x1="876.2" y1="91.9" x2="876.2" y2="214" stroke="rgba(204,204,220,0.10)" stroke-width="1"/>
<text x="876.2" y="228.5" font-size="10" fill="#bcbcc6" text-anchor="middle" font-weight="normal" textLength="23.5" lengthAdjust="spacingAndGlyphs">13:30</text>
<line x1="915.5" y1="91.9" x2="915.5" y2="214" stroke="rgba(204,204,220,0.10)" stroke-width="1"/>
<text x="915.5" y="228.5" font-size="10" fill="#bcbcc6" text-anchor="middle" font-weight="normal" textLength="23.5" lengthAdjust="spacingAndGlyphs">13:45</text>
<line x1="954.7" y1="91.9" x2="954.7" y2="214" stroke="rgba(204,204,220,0.10)" stroke-width="1"/>
<text x="954.7" y="228.5" font-size="10" fill="#bcbcc6" text-anchor="middle" font-weight="normal" textLength="23.5" lengthAdjust="spacingAndGlyphs">14:00</text>
<line x1="994" y1="91.9" x2="994" y2="214" stroke="rgba(204,204,220,0.10)" stroke-width="1"/>
<text x="994" y="228.5" font-size="10" fill="#bcbcc6" text-anchor="middle" font-weight="normal" textLength="23.5" lengthAdjust="spacingAndGlyphs">14:15</text>
<circle cx="543.3" cy="170.8" r="2.2" fill="#e0493f"/>
<circle cx="548.1" cy="166.8" r="2.2" fill="#e0493f"/>
<circle cx="552.9" cy="170.8" r="2.2" fill="#e0493f"/>
<circle cx="557.7" cy="166.8" r="2.2" fill="#e0493f"/>
<circle cx="562.5" cy="155.5" r="2.2" fill="#e0493f"/>
<circle cx="567.3" cy="156.7" r="2.2" fill="#e0493f"/>
<circle cx="572.1" cy="162.5" r="2.2" fill="#e0493f"/>
<circle cx="576.9" cy="168.4" r="2.2" fill="#e0493f"/>
<circle cx="581.7" cy="168.4" r="2.2" fill="#e0493f"/>
<circle cx="586.5" cy="164.5" r="2.2" fill="#e0493f"/>
<circle cx="591.3" cy="160.1" r="2.2" fill="#e0493f"/>
<circle cx="596.1" cy="159.5" r="2.2" fill="#e0493f"/>
<circle cx="600.9" cy="159.5" r="2.2" fill="#e0493f"/>
<circle cx="605.6" cy="158.7" r="2.2" fill="#e0493f"/>
<circle cx="610.4" cy="160.3" r="2.2" fill="#e0493f"/>
<circle cx="615.2" cy="158.7" r="2.2" fill="#e0493f"/>
<circle cx="620" cy="156.1" r="2.2" fill="#e0493f"/>
<circle cx="624.8" cy="156.1" r="2.2" fill="#e0493f"/>
<circle cx="629.6" cy="151.1" r="2.2" fill="#e0493f"/>
<circle cx="634.4" cy="144.8" r="2.2" fill="#e0493f"/>
<circle cx="639.2" cy="149.6" r="2.2" fill="#e0493f"/>
<circle cx="644" cy="153.9" r="2.2" fill="#e0493f"/>
<circle cx="648.8" cy="150.2" r="2.2" fill="#e0493f"/>
<circle cx="653.6" cy="146.2" r="2.2" fill="#e0493f"/>
<circle cx="658.4" cy="146.2" r="2.2" fill="#e0493f"/>
<circle cx="663.2" cy="149.6" r="2.2" fill="#e0493f"/>
<circle cx="668" cy="152.9" r="2.2" fill="#e0493f"/>
<circle cx="672.8" cy="156.9" r="2.2" fill="#e0493f"/>
<circle cx="677.6" cy="155.5" r="2.2" fill="#e0493f"/>
<circle cx="682.4" cy="149.6" r="2.2" fill="#e0493f"/>
<circle cx="687.2" cy="147.2" r="2.2" fill="#e0493f"/>
<circle cx="692" cy="144.6" r="2.2" fill="#e0493f"/>
<circle cx="696.8" cy="134.1" r="2.2" fill="#e0493f"/>
<circle cx="701.6" cy="134.1" r="2.2" fill="#e0493f"/>
<circle cx="706.4" cy="140.6" r="2.2" fill="#e0493f"/>
<circle cx="711.2" cy="145.6" r="2.2" fill="#e0493f"/>
<circle cx="716" cy="149.6" r="2.2" fill="#e0493f"/>
<circle cx="720.7" cy="149.6" r="2.2" fill="#e0493f"/>
<circle cx="725.5" cy="145" r="2.2" fill="#e0493f"/>
<circle cx="730.3" cy="142.6" r="2.2" fill="#e0493f"/>
<circle cx="735.1" cy="141.6" r="2.2" fill="#e0493f"/>
<circle cx="739.9" cy="139.6" r="2.2" fill="#e0493f"/>
<circle cx="744.7" cy="138" r="2.2" fill="#e0493f"/>
<circle cx="749.5" cy="134.1" r="2.2" fill="#e0493f"/>
<circle cx="754.3" cy="130.1" r="2.2" fill="#e0493f"/>
<circle cx="759.1" cy="130.1" r="2.2" fill="#e0493f"/>
<circle cx="763.9" cy="130.1" r="2.2" fill="#e0493f"/>
<circle cx="768.7" cy="134.1" r="2.2" fill="#e0493f"/>
<circle cx="773.5" cy="136.6" r="2.2" fill="#e0493f"/>
<circle cx="778.3" cy="138" r="2.2" fill="#e0493f"/>
<circle cx="783.1" cy="139" r="2.2" fill="#e0493f"/>
<circle cx="787.9" cy="132.7" r="2.2" fill="#e0493f"/>
<circle cx="792.7" cy="128.5" r="2.2" fill="#e0493f"/>
<circle cx="797.5" cy="130.9" r="2.2" fill="#e0493f"/>
<circle cx="802.3" cy="127.7" r="2.2" fill="#e0493f"/>
<circle cx="807.1" cy="133.3" r="2.2" fill="#e0493f"/>
<circle cx="811.9" cy="130.1" r="2.2" fill="#e0493f"/>
<circle cx="816.7" cy="125.3" r="2.2" fill="#e0493f"/>
<circle cx="821.5" cy="130.9" r="2.2" fill="#e0493f"/>
<circle cx="826.3" cy="139" r="2.2" fill="#e0493f"/>
<circle cx="831.1" cy="143.2" r="2.2" fill="#e0493f"/>
<circle cx="835.8" cy="132.7" r="2.2" fill="#e0493f"/>
<circle cx="840.6" cy="121.9" r="2.2" fill="#e0493f"/>
<circle cx="845.4" cy="125.3" r="2.2" fill="#e0493f"/>
<circle cx="850.2" cy="124.1" r="2.2" fill="#e0493f"/>
<circle cx="855" cy="128.7" r="2.2" fill="#e0493f"/>
<circle cx="859.8" cy="133.3" r="2.2" fill="#e0493f"/>
<circle cx="864.6" cy="126.1" r="2.2" fill="#e0493f"/>
<circle cx="869.4" cy="129.3" r="2.2" fill="#e0493f"/>
<circle cx="874.2" cy="132.7" r="2.2" fill="#e0493f"/>
<circle cx="879" cy="124.3" r="2.2" fill="#e0493f"/>
<circle cx="883.8" cy="121.1" r="2.2" fill="#e0493f"/>
<circle cx="888.6" cy="122.9" r="2.2" fill="#e0493f"/>
<circle cx="893.4" cy="124.3" r="2.2" fill="#e0493f"/>
<circle cx="898.2" cy="125.3" r="2.2" fill="#e0493f"/>
<circle cx="903" cy="130.1" r="2.2" fill="#e0493f"/>
<circle cx="907.8" cy="128.5" r="2.2" fill="#e0493f"/>
<circle cx="912.6" cy="122.9" r="2.2" fill="#e0493f"/>
<circle cx="917.4" cy="124.3" r="2.2" fill="#e0493f"/>
<circle cx="922.2" cy="127.7" r="2.2" fill="#e0493f"/>
<circle cx="927" cy="126.1" r="2.2" fill="#e0493f"/>
<circle cx="931.8" cy="116.4" r="2.2" fill="#e0493f"/>
<circle cx="936.6" cy="104.2" r="2.2" fill="#e0493f"/>
<circle cx="941.4" cy="107.4" r="2.2" fill="#e0493f"/>
<circle cx="946.2" cy="108.2" r="2.2" fill="#e0493f"/>
<circle cx="950.9" cy="113" r="2.2" fill="#e0493f"/>
<circle cx="955.7" cy="119.7" r="2.2" fill="#e0493f"/>
<circle cx="960.5" cy="125.3" r="2.2" fill="#e0493f"/>
<circle cx="965.3" cy="125.3" r="2.2" fill="#e0493f"/>
<circle cx="970.1" cy="133.3" r="2.2" fill="#e0493f"/>
<circle cx="974.9" cy="132.7" r="2.2" fill="#e0493f"/>
<circle cx="979.7" cy="125.3" r="2.2" fill="#e0493f"/>
<circle cx="984.5" cy="121.9" r="2.2" fill="#e0493f"/>
<circle cx="989.3" cy="117.8" r="2.2" fill="#e0493f"/>
<circle cx="994.1" cy="110.8" r="2.2" fill="#e0493f"/>
<circle cx="998.9" cy="108.2" r="2.2" fill="#e0493f"/>
<circle cx="1003.7" cy="105.8" r="2.2" fill="#e0493f"/>
<circle cx="1008.5" cy="104.2" r="2.2" fill="#e0493f"/>
<polygon points="543.3,193.7 548.1,196.9 552.9,191.3 557.7,193.9 562.5,115 567.3,102.9 572.1,192.3 576.9,193.9 581.7,193.3 586.5,188.5 591.3,187.3 596.1,195.3 600.9,188.7 605.6,190.3 610.4,191.3 615.2,184.7 620,179.8 624.8,183.7 629.6,187.3 634.4,198.6 639.2,173.4 644,182.3 648.8,176.8 653.6,182.3 658.4,181.4 663.2,182.3 668,186.3 672.8,185.7 677.6,175 682.4,175 687.2,183.7 692,183.1 696.8,175.8 701.6,170.4 706.4,175.4 711.2,180.8 716,180.8 720.7,179.8 725.5,178 730.3,174 735.1,169.4 739.9,176 744.7,180.8 749.5,179.8 754.3,176 759.1,162.7 763.9,117.4 768.7,113.2 773.5,179 778.3,179 783.1,182.3 787.9,162.5 792.7,180.8 797.5,176.4 802.3,169.4 807.1,177.4 811.9,176.8 816.7,176.8 821.5,165.9 826.3,161.9 831.1,170.8 835.8,163.5 840.6,165.5 845.4,163.5 850.2,162.5 855,162.5 859.8,165.9 864.6,169.4 869.4,178.8 874.2,155.5 879,166.8 883.8,157.5 888.6,168 893.4,158.9 898.2,162.9 903,162.9 907.8,155.5 912.6,169.4 917.4,162.9 922.2,161.5 927,158.5 931.8,165.9 936.6,161.5 941.4,169.8 946.2,175 950.9,169.8 955.7,157.5 960.5,171.4 965.3,161.1 970.1,161.1 974.9,185.3 979.7,159.5 984.5,165.5 989.3,176.4 994.1,178.8 998.9,159.5 1003.7,154.5 1008.5,165.5 1008.5,209.2 543.3,209.2" fill="rgba(31,120,193,0.31)"/>
<line x1="562.2" y1="120" x2="562.2" y2="209" stroke="rgba(255,255,255,0.05)" stroke-width="1"/>
<line x1="601.5" y1="120" x2="601.5" y2="209" stroke="rgba(255,255,255,0.05)" stroke-width="1"/>
<line x1="640.7" y1="120" x2="640.7" y2="209" stroke="rgba(255,255,255,0.05)" stroke-width="1"/>
<line x1="680" y1="120" x2="680" y2="209" stroke="rgba(255,255,255,0.05)" stroke-width="1"/>
<line x1="719.2" y1="120" x2="719.2" y2="209" stroke="rgba(255,255,255,0.05)" stroke-width="1"/>
<line x1="758.5" y1="120" x2="758.5" y2="209" stroke="rgba(255,255,255,0.05)" stroke-width="1"/>
<line x1="797.7" y1="120" x2="797.7" y2="209" stroke="rgba(255,255,255,0.05)" stroke-width="1"/>
<line x1="837" y1="120" x2="837" y2="209" stroke="rgba(255,255,255,0.05)" stroke-width="1"/>
<line x1="876.2" y1="120" x2="876.2" y2="209" stroke="rgba(255,255,255,0.05)" stroke-width="1"/>
<line x1="915.5" y1="120" x2="915.5" y2="209" stroke="rgba(255,255,255,0.05)" stroke-width="1"/>
<line x1="954.7" y1="120" x2="954.7" y2="209" stroke="rgba(255,255,255,0.05)" stroke-width="1"/>
<line x1="994" y1="120" x2="994" y2="209" stroke="rgba(255,255,255,0.05)" stroke-width="1"/>
<line x1="543" y1="130.9" x2="1008.5" y2="130.9" stroke="rgba(255,255,255,0.05)" stroke-width="1"/>
<line x1="543" y1="170" x2="1008.5" y2="170" stroke="rgba(255,255,255,0.05)" stroke-width="1"/>
<polyline points="543.3,193.7 548.1,196.9 552.9,191.3 557.7,193.9 562.5,115 567.3,102.9 572.1,192.3 576.9,193.9 581.7,193.3 586.5,188.5 591.3,187.3 596.1,195.3 600.9,188.7 605.6,190.3 610.4,191.3 615.2,184.7 620,179.8 624.8,183.7 629.6,187.3 634.4,198.6 639.2,173.4 644,182.3 648.8,176.8 653.6,182.3 658.4,181.4 663.2,182.3 668,186.3 672.8,185.7 677.6,175 682.4,175 687.2,183.7 692,183.1 696.8,175.8 701.6,170.4 706.4,175.4 711.2,180.8 716,180.8 720.7,179.8 725.5,178 730.3,174 735.1,169.4 739.9,176 744.7,180.8 749.5,179.8 754.3,176 759.1,162.7 763.9,117.4 768.7,113.2 773.5,179 778.3,179 783.1,182.3 787.9,162.5 792.7,180.8 797.5,176.4 802.3,169.4 807.1,177.4 811.9,176.8 816.7,176.8 821.5,165.9 826.3,161.9 831.1,170.8 835.8,163.5 840.6,165.5 845.4,163.5 850.2,162.5 855,162.5 859.8,165.9 864.6,169.4 869.4,178.8 874.2,155.5 879,166.8 883.8,157.5 888.6,168 893.4,158.9 898.2,162.9 903,162.9 907.8,155.5 912.6,169.4 917.4,162.9 922.2,161.5 927,158.5 931.8,165.9 936.6,161.5 941.4,169.8 946.2,175 950.9,169.8 955.7,157.5 960.5,171.4 965.3,161.1 970.1,161.1 974.9,185.3 979.7,159.5 984.5,165.5 989.3,176.4 994.1,178.8 998.9,159.5 1003.7,154.5 1008.5,165.5" fill="none" stroke="#2a84d2" stroke-width="2" stroke-linejoin="round"/>
<circle cx="543.3" cy="193.7" r="2.6" fill="#2a84d2"/>
<circle cx="548.1" cy="196.9" r="2.6" fill="#2a84d2"/>
<circle cx="552.9" cy="191.3" r="2.6" fill="#2a84d2"/>
<circle cx="557.7" cy="193.9" r="2.6" fill="#2a84d2"/>
<circle cx="562.5" cy="115" r="2.6" fill="#2a84d2"/>
<circle cx="567.3" cy="102.9" r="2.6" fill="#2a84d2"/>
<circle cx="572.1" cy="192.3" r="2.6" fill="#2a84d2"/>
<circle cx="576.9" cy="193.9" r="2.6" fill="#2a84d2"/>
<circle cx="581.7" cy="193.3" r="2.6" fill="#2a84d2"/>
<circle cx="586.5" cy="188.5" r="2.6" fill="#2a84d2"/>
<circle cx="591.3" cy="187.3" r="2.6" fill="#2a84d2"/>
<circle cx="596.1" cy="195.3" r="2.6" fill="#2a84d2"/>
<circle cx="600.9" cy="188.7" r="2.6" fill="#2a84d2"/>
<circle cx="605.6" cy="190.3" r="2.6" fill="#2a84d2"/>
<circle cx="610.4" cy="191.3" r="2.6" fill="#2a84d2"/>
<circle cx="615.2" cy="184.7" r="2.6" fill="#2a84d2"/>
<circle cx="620" cy="179.8" r="2.6" fill="#2a84d2"/>
<circle cx="624.8" cy="183.7" r="2.6" fill="#2a84d2"/>
<circle cx="629.6" cy="187.3" r="2.6" fill="#2a84d2"/>
<circle cx="634.4" cy="198.6" r="2.6" fill="#2a84d2"/>
<circle cx="639.2" cy="173.4" r="2.6" fill="#2a84d2"/>
<circle cx="644" cy="182.3" r="2.6" fill="#2a84d2"/>
<circle cx="648.8" cy="176.8" r="2.6" fill="#2a84d2"/>
<circle cx="653.6" cy="182.3" r="2.6" fill="#2a84d2"/>
<circle cx="658.4" cy="181.4" r="2.6" fill="#2a84d2"/>
<circle cx="663.2" cy="182.3" r="2.6" fill="#2a84d2"/>
<circle cx="668" cy="186.3" r="2.6" fill="#2a84d2"/>
<circle cx="672.8" cy="185.7" r="2.6" fill="#2a84d2"/>
<circle cx="677.6" cy="175" r="2.6" fill="#2a84d2"/>
<circle cx="682.4" cy="175" r="2.6" fill="#2a84d2"/>
<circle cx="687.2" cy="183.7" r="2.6" fill="#2a84d2"/>
<circle cx="692" cy="183.1" r="2.6" fill="#2a84d2"/>
<circle cx="696.8" cy="175.8" r="2.6" fill="#2a84d2"/>
<circle cx="701.6" cy="170.4" r="2.6" fill="#2a84d2"/>
<circle cx="706.4" cy="175.4" r="2.6" fill="#2a84d2"/>
<circle cx="711.2" cy="180.8" r="2.6" fill="#2a84d2"/>
<circle cx="716" cy="180.8" r="2.6" fill="#2a84d2"/>
<circle cx="720.7" cy="179.8" r="2.6" fill="#2a84d2"/>
<circle cx="725.5" cy="178" r="2.6" fill="#2a84d2"/>
<circle cx="730.3" cy="174" r="2.6" fill="#2a84d2"/>
<circle cx="735.1" cy="169.4" r="2.6" fill="#2a84d2"/>
<circle cx="739.9" cy="176" r="2.6" fill="#2a84d2"/>
<circle cx="744.7" cy="180.8" r="2.6" fill="#2a84d2"/>
<circle cx="749.5" cy="179.8" r="2.6" fill="#2a84d2"/>
<circle cx="754.3" cy="176" r="2.6" fill="#2a84d2"/>
<circle cx="759.1" cy="162.7" r="2.6" fill="#2a84d2"/>
<circle cx="763.9" cy="117.4" r="2.6" fill="#2a84d2"/>
<circle cx="768.7" cy="113.2" r="2.6" fill="#2a84d2"/>
<circle cx="773.5" cy="179" r="2.6" fill="#2a84d2"/>
<circle cx="778.3" cy="179" r="2.6" fill="#2a84d2"/>
<circle cx="783.1" cy="182.3" r="2.6" fill="#2a84d2"/>
<circle cx="787.9" cy="162.5" r="2.6" fill="#2a84d2"/>
<circle cx="792.7" cy="180.8" r="2.6" fill="#2a84d2"/>
<circle cx="797.5" cy="176.4" r="2.6" fill="#2a84d2"/>
<circle cx="802.3" cy="169.4" r="2.6" fill="#2a84d2"/>
<circle cx="807.1" cy="177.4" r="2.6" fill="#2a84d2"/>
<circle cx="811.9" cy="176.8" r="2.6" fill="#2a84d2"/>
<circle cx="816.7" cy="176.8" r="2.6" fill="#2a84d2"/>
<circle cx="821.5" cy="165.9" r="2.6" fill="#2a84d2"/>
<circle cx="826.3" cy="161.9" r="2.6" fill="#2a84d2"/>
<circle cx="831.1" cy="170.8" r="2.6" fill="#2a84d2"/>
<circle cx="835.8" cy="163.5" r="2.6" fill="#2a84d2"/>
<circle cx="840.6" cy="165.5" r="2.6" fill="#2a84d2"/>
<circle cx="845.4" cy="163.5" r="2.6" fill="#2a84d2"/>
<circle cx="850.2" cy="162.5" r="2.6" fill="#2a84d2"/>
<circle cx="855" cy="162.5" r="2.6" fill="#2a84d2"/>
<circle cx="859.8" cy="165.9" r="2.6" fill="#2a84d2"/>
<circle cx="864.6" cy="169.4" r="2.6" fill="#2a84d2"/>
<circle cx="869.4" cy="178.8" r="2.6" fill="#2a84d2"/>
<circle cx="874.2" cy="155.5" r="2.6" fill="#2a84d2"/>
<circle cx="879" cy="166.8" r="2.6" fill="#2a84d2"/>
<circle cx="883.8" cy="157.5" r="2.6" fill="#2a84d2"/>
<circle cx="888.6" cy="168" r="2.6" fill="#2a84d2"/>
<circle cx="893.4" cy="158.9" r="2.6" fill="#2a84d2"/>
<circle cx="898.2" cy="162.9" r="2.6" fill="#2a84d2"/>
<circle cx="903" cy="162.9" r="2.6" fill="#2a84d2"/>
<circle cx="907.8" cy="155.5" r="2.6" fill="#2a84d2"/>
<circle cx="912.6" cy="169.4" r="2.6" fill="#2a84d2"/>
<circle cx="917.4" cy="162.9" r="2.6" fill="#2a84d2"/>
<circle cx="922.2" cy="161.5" r="2.6" fill="#2a84d2"/>
<circle cx="927" cy="158.5" r="2.6" fill="#2a84d2"/>
<circle cx="931.8" cy="165.9" r="2.6" fill="#2a84d2"/>
<circle cx="936.6" cy="161.5" r="2.6" fill="#2a84d2"/>
<circle cx="941.4" cy="169.8" r="2.6" fill="#2a84d2"/>
<circle cx="946.2" cy="175" r="2.6" fill="#2a84d2"/>
<circle cx="950.9" cy="169.8" r="2.6" fill="#2a84d2"/>
<circle cx="955.7" cy="157.5" r="2.6" fill="#2a84d2"/>
<circle cx="960.5" cy="171.4" r="2.6" fill="#2a84d2"/>
<circle cx="965.3" cy="161.1" r="2.6" fill="#2a84d2"/>
<circle cx="970.1" cy="161.1" r="2.6" fill="#2a84d2"/>
<circle cx="974.9" cy="185.3" r="2.6" fill="#2a84d2"/>
<circle cx="979.7" cy="159.5" r="2.6" fill="#2a84d2"/>
<circle cx="984.5" cy="165.5" r="2.6" fill="#2a84d2"/>
<circle cx="989.3" cy="176.4" r="2.6" fill="#2a84d2"/>
<circle cx="994.1" cy="178.8" r="2.6" fill="#2a84d2"/>
<circle cx="998.9" cy="159.5" r="2.6" fill="#2a84d2"/>
<circle cx="1003.7" cy="154.5" r="2.6" fill="#2a84d2"/>
<circle cx="1008.5" cy="165.5" r="2.6" fill="#2a84d2"/>
<rect x="517.4" y="245.1" width="11.7" height="3.3" rx="0.8" fill="#e0493f"/>
<text x="535.7" y="250.2" font-size="10.4" fill="#c7c7d1" text-anchor="start" font-weight="normal">cpu</text>
<rect x="980.7" y="245.1" width="11.7" height="3.3" rx="0.8" fill="#2a84d2"/>
<text x="998.6" y="250.2" font-size="10.4" fill="#c7c7d1" text-anchor="start" font-weight="normal" textLength="35.8" lengthAdjust="spacingAndGlyphs">memory</text>
<defs><radialGradient id="lit" cx="0.5" cy="0.5" r="0.6"><stop offset="0" stop-color="#fff" stop-opacity="0.10"/><stop offset="1" stop-color="#fff" stop-opacity="0"/></radialGradient></defs>
<text x="1066.9" y="102.2" font-size="10.6" fill="#c7c7d1" text-anchor="start" font-weight="normal" textLength="22.7" lengthAdjust="spacingAndGlyphs">sda1</text>
<rect x="1099" y="85.3" width="8.2" height="26.6" rx="2" fill="#ed5265" fill-opacity="0.8"/>
<rect x="1099" y="85.3" width="8.2" height="26.6" rx="2" fill="url(#lit)"/>
<rect x="1108.7" y="85.3" width="8.2" height="26.6" rx="2" fill="#ed5a63" fill-opacity="0.8"/>
<rect x="1108.7" y="85.3" width="8.2" height="26.6" rx="2" fill="url(#lit)"/>
<rect x="1118.5" y="85.3" width="8.2" height="26.6" rx="2" fill="#ee6260" fill-opacity="0.8"/>
<rect x="1118.5" y="85.3" width="8.2" height="26.6" rx="2" fill="url(#lit)"/>
<rect x="1128.2" y="85.3" width="8.2" height="26.6" rx="2" fill="#ee6a5e" fill-opacity="0.8"/>
<rect x="1128.2" y="85.3" width="8.2" height="26.6" rx="2" fill="url(#lit)"/>
<rect x="1137.9" y="85.3" width="8.2" height="26.6" rx="2" fill="#ee725b" fill-opacity="0.8"/>
<rect x="1137.9" y="85.3" width="8.2" height="26.6" rx="2" fill="url(#lit)"/>
<rect x="1147.7" y="85.3" width="8.2" height="26.6" rx="2" fill="#ef7a59" fill-opacity="0.8"/>
<rect x="1147.7" y="85.3" width="8.2" height="26.6" rx="2" fill="url(#lit)"/>
<rect x="1157.4" y="85.3" width="8.2" height="26.6" rx="2" fill="#ef8256" fill-opacity="0.8"/>
<rect x="1157.4" y="85.3" width="8.2" height="26.6" rx="2" fill="url(#lit)"/>
<rect x="1167.1" y="85.3" width="8.2" height="26.6" rx="2" fill="#f08a54" fill-opacity="0.8"/>
<rect x="1167.1" y="85.3" width="8.2" height="26.6" rx="2" fill="url(#lit)"/>
<rect x="1176.9" y="85.3" width="8.2" height="26.6" rx="2" fill="#f69144" fill-opacity="0.17"/>
<rect x="1186.6" y="85.3" width="8.2" height="26.6" rx="2" fill="#f69a41" fill-opacity="0.17"/>
<rect x="1196.3" y="85.3" width="8.2" height="26.6" rx="2" fill="#f7a23e" fill-opacity="0.17"/>
<rect x="1206.1" y="85.3" width="8.2" height="26.6" rx="2" fill="#f7ab3b" fill-opacity="0.17"/>
<rect x="1215.8" y="85.3" width="8.2" height="26.6" rx="2" fill="#f8b338" fill-opacity="0.17"/>
<rect x="1225.6" y="85.3" width="8.2" height="26.6" rx="2" fill="#f8bc35" fill-opacity="0.17"/>
<rect x="1235.3" y="85.3" width="8.2" height="26.6" rx="2" fill="#f9c433" fill-opacity="0.17"/>
<rect x="1245" y="85.3" width="8.2" height="26.6" rx="2" fill="#f9cd30" fill-opacity="0.17"/>
<rect x="1254.8" y="85.3" width="8.2" height="26.6" rx="2" fill="#fad52d" fill-opacity="0.17"/>
<rect x="1264.5" y="85.3" width="8.2" height="26.6" rx="2" fill="#fade2a" fill-opacity="0.17"/>
<rect x="1274.2" y="85.3" width="8.2" height="26.6" rx="2" fill="#f2dc2e" fill-opacity="0.17"/>
<rect x="1284" y="85.3" width="8.2" height="26.6" rx="2" fill="#ebda31" fill-opacity="0.17"/>
<rect x="1293.7" y="85.3" width="8.2" height="26.6" rx="2" fill="#e3d935" fill-opacity="0.17"/>
<rect x="1303.4" y="85.3" width="8.2" height="26.6" rx="2" fill="#dbd738" fill-opacity="0.17"/>
<rect x="1313.2" y="85.3" width="8.2" height="26.6" rx="2" fill="#d3d53c" fill-opacity="0.17"/>
<rect x="1322.9" y="85.3" width="8.2" height="26.6" rx="2" fill="#ccd340" fill-opacity="0.17"/>
<rect x="1332.6" y="85.3" width="8.2" height="26.6" rx="2" fill="#c4d243" fill-opacity="0.17"/>
<rect x="1342.4" y="85.3" width="8.2" height="26.6" rx="2" fill="#bcd047" fill-opacity="0.17"/>
<rect x="1352.1" y="85.3" width="8.2" height="26.6" rx="2" fill="#b5ce4a" fill-opacity="0.17"/>
<rect x="1361.8" y="85.3" width="8.2" height="26.6" rx="2" fill="#adcc4e" fill-opacity="0.17"/>
<rect x="1371.6" y="85.3" width="8.2" height="26.6" rx="2" fill="#a5cb52" fill-opacity="0.17"/>
<rect x="1381.3" y="85.3" width="8.2" height="26.6" rx="2" fill="#9dc955" fill-opacity="0.17"/>
<rect x="1391" y="85.3" width="8.2" height="26.6" rx="2" fill="#96c759" fill-opacity="0.17"/>
<rect x="1400.8" y="85.3" width="8.2" height="26.6" rx="2" fill="#8ec55c" fill-opacity="0.17"/>
<rect x="1410.5" y="85.3" width="8.2" height="26.6" rx="2" fill="#86c360" fill-opacity="0.17"/>
<rect x="1420.3" y="85.3" width="8.2" height="26.6" rx="2" fill="#7fc264" fill-opacity="0.17"/>
<rect x="1430" y="85.3" width="8.2" height="26.6" rx="2" fill="#77c067" fill-opacity="0.17"/>
<text x="1505.5" y="105.9" font-size="20.6" fill="#f68d45" text-anchor="end" font-weight="normal" textLength="41.2" lengthAdjust="spacingAndGlyphs">22.7</text>
<text x="1526.7" y="105.9" font-size="11.8" fill="#f68d45" text-anchor="end" font-weight="normal" textLength="17.1" lengthAdjust="spacingAndGlyphs">GB</text>
<text x="1066.9" y="130.5" font-size="10.6" fill="#c7c7d1" text-anchor="start" font-weight="normal" textLength="22.7" lengthAdjust="spacingAndGlyphs">sda2</text>
<rect x="1099" y="113.6" width="8.2" height="26.6" rx="2" fill="#ed5265" fill-opacity="0.8"/>
<rect x="1099" y="113.6" width="8.2" height="26.6" rx="2" fill="url(#lit)"/>
<rect x="1108.7" y="113.6" width="8.2" height="26.6" rx="2" fill="#ed5a63" fill-opacity="0.8"/>
<rect x="1108.7" y="113.6" width="8.2" height="26.6" rx="2" fill="url(#lit)"/>
<rect x="1118.5" y="113.6" width="8.2" height="26.6" rx="2" fill="#ee6260" fill-opacity="0.8"/>
<rect x="1118.5" y="113.6" width="8.2" height="26.6" rx="2" fill="url(#lit)"/>
<rect x="1128.2" y="113.6" width="8.2" height="26.6" rx="2" fill="#ee6a5e" fill-opacity="0.8"/>
<rect x="1128.2" y="113.6" width="8.2" height="26.6" rx="2" fill="url(#lit)"/>
<rect x="1137.9" y="113.6" width="8.2" height="26.6" rx="2" fill="#f46f4f" fill-opacity="0.17"/>
<rect x="1147.7" y="113.6" width="8.2" height="26.6" rx="2" fill="#f5784c" fill-opacity="0.17"/>
<rect x="1157.4" y="113.6" width="8.2" height="26.6" rx="2" fill="#f58049" fill-opacity="0.17"/>
<rect x="1167.1" y="113.6" width="8.2" height="26.6" rx="2" fill="#f58947" fill-opacity="0.17"/>
<rect x="1176.9" y="113.6" width="8.2" height="26.6" rx="2" fill="#f69144" fill-opacity="0.17"/>
<rect x="1186.6" y="113.6" width="8.2" height="26.6" rx="2" fill="#f69a41" fill-opacity="0.17"/>
<rect x="1196.3" y="113.6" width="8.2" height="26.6" rx="2" fill="#f7a23e" fill-opacity="0.17"/>
<rect x="1206.1" y="113.6" width="8.2" height="26.6" rx="2" fill="#f7ab3b" fill-opacity="0.17"/>
<rect x="1215.8" y="113.6" width="8.2" height="26.6" rx="2" fill="#f8b338" fill-opacity="0.17"/>
<rect x="1225.6" y="113.6" width="8.2" height="26.6" rx="2" fill="#f8bc35" fill-opacity="0.17"/>
<rect x="1235.3" y="113.6" width="8.2" height="26.6" rx="2" fill="#f9c433" fill-opacity="0.17"/>
<rect x="1245" y="113.6" width="8.2" height="26.6" rx="2" fill="#f9cd30" fill-opacity="0.17"/>
<rect x="1254.8" y="113.6" width="8.2" height="26.6" rx="2" fill="#fad52d" fill-opacity="0.17"/>
<rect x="1264.5" y="113.6" width="8.2" height="26.6" rx="2" fill="#fade2a" fill-opacity="0.17"/>
<rect x="1274.2" y="113.6" width="8.2" height="26.6" rx="2" fill="#f2dc2e" fill-opacity="0.17"/>
<rect x="1284" y="113.6" width="8.2" height="26.6" rx="2" fill="#ebda31" fill-opacity="0.17"/>
<rect x="1293.7" y="113.6" width="8.2" height="26.6" rx="2" fill="#e3d935" fill-opacity="0.17"/>
<rect x="1303.4" y="113.6" width="8.2" height="26.6" rx="2" fill="#dbd738" fill-opacity="0.17"/>
<rect x="1313.2" y="113.6" width="8.2" height="26.6" rx="2" fill="#d3d53c" fill-opacity="0.17"/>
<rect x="1322.9" y="113.6" width="8.2" height="26.6" rx="2" fill="#ccd340" fill-opacity="0.17"/>
<rect x="1332.6" y="113.6" width="8.2" height="26.6" rx="2" fill="#c4d243" fill-opacity="0.17"/>
<rect x="1342.4" y="113.6" width="8.2" height="26.6" rx="2" fill="#bcd047" fill-opacity="0.17"/>
<rect x="1352.1" y="113.6" width="8.2" height="26.6" rx="2" fill="#b5ce4a" fill-opacity="0.17"/>
<rect x="1361.8" y="113.6" width="8.2" height="26.6" rx="2" fill="#adcc4e" fill-opacity="0.17"/>
<rect x="1371.6" y="113.6" width="8.2" height="26.6" rx="2" fill="#a5cb52" fill-opacity="0.17"/>
<rect x="1381.3" y="113.6" width="8.2" height="26.6" rx="2" fill="#9dc955" fill-opacity="0.17"/>
<rect x="1391" y="113.6" width="8.2" height="26.6" rx="2" fill="#96c759" fill-opacity="0.17"/>
<rect x="1400.8" y="113.6" width="8.2" height="26.6" rx="2" fill="#8ec55c" fill-opacity="0.17"/>
<rect x="1410.5" y="113.6" width="8.2" height="26.6" rx="2" fill="#86c360" fill-opacity="0.17"/>
<rect x="1420.3" y="113.6" width="8.2" height="26.6" rx="2" fill="#7fc264" fill-opacity="0.17"/>
<rect x="1430" y="113.6" width="8.2" height="26.6" rx="2" fill="#77c067" fill-opacity="0.17"/>
<text x="1505.5" y="134.1" font-size="20.6" fill="#f46652" text-anchor="end" font-weight="normal" textLength="41.2" lengthAdjust="spacingAndGlyphs">9.89</text>
<text x="1526.7" y="134.1" font-size="11.8" fill="#f46652" text-anchor="end" font-weight="normal" textLength="17.1" lengthAdjust="spacingAndGlyphs">GB</text>
<text x="1066.9" y="158.8" font-size="10.6" fill="#c7c7d1" text-anchor="start" font-weight="normal" textLength="22.7" lengthAdjust="spacingAndGlyphs">sda3</text>
<rect x="1099" y="141.9" width="8.2" height="26.6" rx="2" fill="#ed5265" fill-opacity="0.8"/>
<rect x="1099" y="141.9" width="8.2" height="26.6" rx="2" fill="url(#lit)"/>
<rect x="1108.7" y="141.9" width="8.2" height="26.6" rx="2" fill="#ed5a63" fill-opacity="0.8"/>
<rect x="1108.7" y="141.9" width="8.2" height="26.6" rx="2" fill="url(#lit)"/>
<rect x="1118.5" y="141.9" width="8.2" height="26.6" rx="2" fill="#ee6260" fill-opacity="0.8"/>
<rect x="1118.5" y="141.9" width="8.2" height="26.6" rx="2" fill="url(#lit)"/>
<rect x="1128.2" y="141.9" width="8.2" height="26.6" rx="2" fill="#ee6a5e" fill-opacity="0.8"/>
<rect x="1128.2" y="141.9" width="8.2" height="26.6" rx="2" fill="url(#lit)"/>
<rect x="1137.9" y="141.9" width="8.2" height="26.6" rx="2" fill="#ee725b" fill-opacity="0.8"/>
<rect x="1137.9" y="141.9" width="8.2" height="26.6" rx="2" fill="url(#lit)"/>
<rect x="1147.7" y="141.9" width="8.2" height="26.6" rx="2" fill="#ef7a59" fill-opacity="0.8"/>
<rect x="1147.7" y="141.9" width="8.2" height="26.6" rx="2" fill="url(#lit)"/>
<rect x="1157.4" y="141.9" width="8.2" height="26.6" rx="2" fill="#ef8256" fill-opacity="0.8"/>
<rect x="1157.4" y="141.9" width="8.2" height="26.6" rx="2" fill="url(#lit)"/>
<rect x="1167.1" y="141.9" width="8.2" height="26.6" rx="2" fill="#f08a54" fill-opacity="0.8"/>
<rect x="1167.1" y="141.9" width="8.2" height="26.6" rx="2" fill="url(#lit)"/>
<rect x="1176.9" y="141.9" width="8.2" height="26.6" rx="2" fill="#f09252" fill-opacity="0.8"/>
<rect x="1176.9" y="141.9" width="8.2" height="26.6" rx="2" fill="url(#lit)"/>
<rect x="1186.6" y="141.9" width="8.2" height="26.6" rx="2" fill="#f19a4f" fill-opacity="0.8"/>
<rect x="1186.6" y="141.9" width="8.2" height="26.6" rx="2" fill="url(#lit)"/>
<rect x="1196.3" y="141.9" width="8.2" height="26.6" rx="2" fill="#f1a24d" fill-opacity="0.8"/>
<rect x="1196.3" y="141.9" width="8.2" height="26.6" rx="2" fill="url(#lit)"/>
<rect x="1206.1" y="141.9" width="8.2" height="26.6" rx="2" fill="#f1aa4a" fill-opacity="0.8"/>
<rect x="1206.1" y="141.9" width="8.2" height="26.6" rx="2" fill="url(#lit)"/>
<rect x="1215.8" y="141.9" width="8.2" height="26.6" rx="2" fill="#f2b248" fill-opacity="0.8"/>
<rect x="1215.8" y="141.9" width="8.2" height="26.6" rx="2" fill="url(#lit)"/>
<rect x="1225.6" y="141.9" width="8.2" height="26.6" rx="2" fill="#f2ba45" fill-opacity="0.8"/>
<rect x="1225.6" y="141.9" width="8.2" height="26.6" rx="2" fill="url(#lit)"/>
<rect x="1235.3" y="141.9" width="8.2" height="26.6" rx="2" fill="#f3c243" fill-opacity="0.8"/>
<rect x="1235.3" y="141.9" width="8.2" height="26.6" rx="2" fill="url(#lit)"/>
<rect x="1245" y="141.9" width="8.2" height="26.6" rx="2" fill="#f3ca41" fill-opacity="0.8"/>
<rect x="1245" y="141.9" width="8.2" height="26.6" rx="2" fill="url(#lit)"/>
<rect x="1254.8" y="141.9" width="8.2" height="26.6" rx="2" fill="#f4d23e" fill-opacity="0.8"/>
<rect x="1254.8" y="141.9" width="8.2" height="26.6" rx="2" fill="url(#lit)"/>
<rect x="1264.5" y="141.9" width="8.2" height="26.6" rx="2" fill="#f4da3c" fill-opacity="0.8"/>
<rect x="1264.5" y="141.9" width="8.2" height="26.6" rx="2" fill="url(#lit)"/>
<rect x="1274.2" y="141.9" width="8.2" height="26.6" rx="2" fill="#edd83f" fill-opacity="0.8"/>
<rect x="1274.2" y="141.9" width="8.2" height="26.6" rx="2" fill="url(#lit)"/>
<rect x="1284" y="141.9" width="8.2" height="26.6" rx="2" fill="#e5d642" fill-opacity="0.8"/>
<rect x="1284" y="141.9" width="8.2" height="26.6" rx="2" fill="url(#lit)"/>
<rect x="1293.7" y="141.9" width="8.2" height="26.6" rx="2" fill="#ded545" fill-opacity="0.8"/>
<rect x="1293.7" y="141.9" width="8.2" height="26.6" rx="2" fill="url(#lit)"/>
<rect x="1303.4" y="141.9" width="8.2" height="26.6" rx="2" fill="#d7d348" fill-opacity="0.8"/>
<rect x="1303.4" y="141.9" width="8.2" height="26.6" rx="2" fill="url(#lit)"/>
<rect x="1313.2" y="141.9" width="8.2" height="26.6" rx="2" fill="#d0d14b" fill-opacity="0.8"/>
<rect x="1313.2" y="141.9" width="8.2" height="26.6" rx="2" fill="url(#lit)"/>
<rect x="1322.9" y="141.9" width="8.2" height="26.6" rx="2" fill="#c8d04e" fill-opacity="0.8"/>
<rect x="1322.9" y="141.9" width="8.2" height="26.6" rx="2" fill="url(#lit)"/>
<rect x="1332.6" y="141.9" width="8.2" height="26.6" rx="2" fill="#c1ce51" fill-opacity="0.8"/>
<rect x="1332.6" y="141.9" width="8.2" height="26.6" rx="2" fill="url(#lit)"/>
<rect x="1342.4" y="141.9" width="8.2" height="26.6" rx="2" fill="#bcd047" fill-opacity="0.17"/>
<rect x="1352.1" y="141.9" width="8.2" height="26.6" rx="2" fill="#b5ce4a" fill-opacity="0.17"/>
<rect x="1361.8" y="141.9" width="8.2" height="26.6" rx="2" fill="#adcc4e" fill-opacity="0.17"/>
<rect x="1371.6" y="141.9" width="8.2" height="26.6" rx="2" fill="#a5cb52" fill-opacity="0.17"/>
<rect x="1381.3" y="141.9" width="8.2" height="26.6" rx="2" fill="#9dc955" fill-opacity="0.17"/>
<rect x="1391" y="141.9" width="8.2" height="26.6" rx="2" fill="#96c759" fill-opacity="0.17"/>
<rect x="1400.8" y="141.9" width="8.2" height="26.6" rx="2" fill="#8ec55c" fill-opacity="0.17"/>
<rect x="1410.5" y="141.9" width="8.2" height="26.6" rx="2" fill="#86c360" fill-opacity="0.17"/>
<rect x="1420.3" y="141.9" width="8.2" height="26.6" rx="2" fill="#7fc264" fill-opacity="0.17"/>
<rect x="1430" y="141.9" width="8.2" height="26.6" rx="2" fill="#77c067" fill-opacity="0.17"/>
<text x="1505.5" y="162.2" font-size="20.6" fill="#c1d144" text-anchor="end" font-weight="normal" textLength="41.2" lengthAdjust="spacingAndGlyphs">71.0</text>
<text x="1526.7" y="162.2" font-size="11.8" fill="#c1d144" text-anchor="end" font-weight="normal" textLength="17.1" lengthAdjust="spacingAndGlyphs">GB</text>
<text x="1066.9" y="187.1" font-size="10.6" fill="#c7c7d1" text-anchor="start" font-weight="normal" textLength="22.7" lengthAdjust="spacingAndGlyphs">sda5</text>
<rect x="1099" y="170.2" width="8.2" height="26.6" rx="2" fill="#ed5265" fill-opacity="0.8"/>
<rect x="1099" y="170.2" width="8.2" height="26.6" rx="2" fill="url(#lit)"/>
<rect x="1108.7" y="170.2" width="8.2" height="26.6" rx="2" fill="#ed5a63" fill-opacity="0.8"/>
<rect x="1108.7" y="170.2" width="8.2" height="26.6" rx="2" fill="url(#lit)"/>
<rect x="1118.5" y="170.2" width="8.2" height="26.6" rx="2" fill="#ee6260" fill-opacity="0.8"/>
<rect x="1118.5" y="170.2" width="8.2" height="26.6" rx="2" fill="url(#lit)"/>
<rect x="1128.2" y="170.2" width="8.2" height="26.6" rx="2" fill="#ee6a5e" fill-opacity="0.8"/>
<rect x="1128.2" y="170.2" width="8.2" height="26.6" rx="2" fill="url(#lit)"/>
<rect x="1137.9" y="170.2" width="8.2" height="26.6" rx="2" fill="#ee725b" fill-opacity="0.8"/>
<rect x="1137.9" y="170.2" width="8.2" height="26.6" rx="2" fill="url(#lit)"/>
<rect x="1147.7" y="170.2" width="8.2" height="26.6" rx="2" fill="#ef7a59" fill-opacity="0.8"/>
<rect x="1147.7" y="170.2" width="8.2" height="26.6" rx="2" fill="url(#lit)"/>
<rect x="1157.4" y="170.2" width="8.2" height="26.6" rx="2" fill="#ef8256" fill-opacity="0.8"/>
<rect x="1157.4" y="170.2" width="8.2" height="26.6" rx="2" fill="url(#lit)"/>
<rect x="1167.1" y="170.2" width="8.2" height="26.6" rx="2" fill="#f08a54" fill-opacity="0.8"/>
<rect x="1167.1" y="170.2" width="8.2" height="26.6" rx="2" fill="url(#lit)"/>
<rect x="1176.9" y="170.2" width="8.2" height="26.6" rx="2" fill="#f09252" fill-opacity="0.8"/>
<rect x="1176.9" y="170.2" width="8.2" height="26.6" rx="2" fill="url(#lit)"/>
<rect x="1186.6" y="170.2" width="8.2" height="26.6" rx="2" fill="#f19a4f" fill-opacity="0.8"/>
<rect x="1186.6" y="170.2" width="8.2" height="26.6" rx="2" fill="url(#lit)"/>
<rect x="1196.3" y="170.2" width="8.2" height="26.6" rx="2" fill="#f1a24d" fill-opacity="0.8"/>
<rect x="1196.3" y="170.2" width="8.2" height="26.6" rx="2" fill="url(#lit)"/>
<rect x="1206.1" y="170.2" width="8.2" height="26.6" rx="2" fill="#f1aa4a" fill-opacity="0.8"/>
<rect x="1206.1" y="170.2" width="8.2" height="26.6" rx="2" fill="url(#lit)"/>
<rect x="1215.8" y="170.2" width="8.2" height="26.6" rx="2" fill="#f2b248" fill-opacity="0.8"/>
<rect x="1215.8" y="170.2" width="8.2" height="26.6" rx="2" fill="url(#lit)"/>
<rect x="1225.6" y="170.2" width="8.2" height="26.6" rx="2" fill="#f2ba45" fill-opacity="0.8"/>
<rect x="1225.6" y="170.2" width="8.2" height="26.6" rx="2" fill="url(#lit)"/>
<rect x="1235.3" y="170.2" width="8.2" height="26.6" rx="2" fill="#f3c243" fill-opacity="0.8"/>
<rect x="1235.3" y="170.2" width="8.2" height="26.6" rx="2" fill="url(#lit)"/>
<rect x="1245" y="170.2" width="8.2" height="26.6" rx="2" fill="#f3ca41" fill-opacity="0.8"/>
<rect x="1245" y="170.2" width="8.2" height="26.6" rx="2" fill="url(#lit)"/>
<rect x="1254.8" y="170.2" width="8.2" height="26.6" rx="2" fill="#f4d23e" fill-opacity="0.8"/>
<rect x="1254.8" y="170.2" width="8.2" height="26.6" rx="2" fill="url(#lit)"/>
<rect x="1264.5" y="170.2" width="8.2" height="26.6" rx="2" fill="#f4da3c" fill-opacity="0.8"/>
<rect x="1264.5" y="170.2" width="8.2" height="26.6" rx="2" fill="url(#lit)"/>
<rect x="1274.2" y="170.2" width="8.2" height="26.6" rx="2" fill="#edd83f" fill-opacity="0.8"/>
<rect x="1274.2" y="170.2" width="8.2" height="26.6" rx="2" fill="url(#lit)"/>
<rect x="1284" y="170.2" width="8.2" height="26.6" rx="2" fill="#e5d642" fill-opacity="0.8"/>
<rect x="1284" y="170.2" width="8.2" height="26.6" rx="2" fill="url(#lit)"/>
<rect x="1293.7" y="170.2" width="8.2" height="26.6" rx="2" fill="#ded545" fill-opacity="0.8"/>
<rect x="1293.7" y="170.2" width="8.2" height="26.6" rx="2" fill="url(#lit)"/>
<rect x="1303.4" y="170.2" width="8.2" height="26.6" rx="2" fill="#d7d348" fill-opacity="0.8"/>
<rect x="1303.4" y="170.2" width="8.2" height="26.6" rx="2" fill="url(#lit)"/>
<rect x="1313.2" y="170.2" width="8.2" height="26.6" rx="2" fill="#d0d14b" fill-opacity="0.8"/>
<rect x="1313.2" y="170.2" width="8.2" height="26.6" rx="2" fill="url(#lit)"/>
<rect x="1322.9" y="170.2" width="8.2" height="26.6" rx="2" fill="#c8d04e" fill-opacity="0.8"/>
<rect x="1322.9" y="170.2" width="8.2" height="26.6" rx="2" fill="url(#lit)"/>
<rect x="1332.6" y="170.2" width="8.2" height="26.6" rx="2" fill="#c1ce51" fill-opacity="0.8"/>
<rect x="1332.6" y="170.2" width="8.2" height="26.6" rx="2" fill="url(#lit)"/>
<rect x="1342.4" y="170.2" width="8.2" height="26.6" rx="2" fill="#bacc54" fill-opacity="0.8"/>
<rect x="1342.4" y="170.2" width="8.2" height="26.6" rx="2" fill="url(#lit)"/>
<rect x="1352.1" y="170.2" width="8.2" height="26.6" rx="2" fill="#b3cb57" fill-opacity="0.8"/>
<rect x="1352.1" y="170.2" width="8.2" height="26.6" rx="2" fill="url(#lit)"/>
<rect x="1361.8" y="170.2" width="8.2" height="26.6" rx="2" fill="#abc95a" fill-opacity="0.8"/>
<rect x="1361.8" y="170.2" width="8.2" height="26.6" rx="2" fill="url(#lit)"/>
<rect x="1371.6" y="170.2" width="8.2" height="26.6" rx="2" fill="#a5cb52" fill-opacity="0.17"/>
<rect x="1381.3" y="170.2" width="8.2" height="26.6" rx="2" fill="#9dc955" fill-opacity="0.17"/>
<rect x="1391" y="170.2" width="8.2" height="26.6" rx="2" fill="#96c759" fill-opacity="0.17"/>
<rect x="1400.8" y="170.2" width="8.2" height="26.6" rx="2" fill="#8ec55c" fill-opacity="0.17"/>
<rect x="1410.5" y="170.2" width="8.2" height="26.6" rx="2" fill="#86c360" fill-opacity="0.17"/>
<rect x="1420.3" y="170.2" width="8.2" height="26.6" rx="2" fill="#7fc264" fill-opacity="0.17"/>
<rect x="1430" y="170.2" width="8.2" height="26.6" rx="2" fill="#77c067" fill-opacity="0.17"/>
<text x="1505.5" y="190.4" font-size="20.6" fill="#adcc4e" text-anchor="end" font-weight="normal" textLength="41.2" lengthAdjust="spacingAndGlyphs">78.6</text>
<text x="1526.7" y="190.4" font-size="11.8" fill="#adcc4e" text-anchor="end" font-weight="normal" textLength="17.1" lengthAdjust="spacingAndGlyphs">GB</text>
<text x="1066.9" y="215.4" font-size="10.6" fill="#c7c7d1" text-anchor="start" font-weight="normal" textLength="22.7" lengthAdjust="spacingAndGlyphs">sda6</text>
<rect x="1099" y="198.5" width="8.2" height="26.6" rx="2" fill="#ed5265" fill-opacity="0.8"/>
<rect x="1099" y="198.5" width="8.2" height="26.6" rx="2" fill="url(#lit)"/>
<rect x="1108.7" y="198.5" width="8.2" height="26.6" rx="2" fill="#ed5a63" fill-opacity="0.8"/>
<rect x="1108.7" y="198.5" width="8.2" height="26.6" rx="2" fill="url(#lit)"/>
<rect x="1118.5" y="198.5" width="8.2" height="26.6" rx="2" fill="#ee6260" fill-opacity="0.8"/>
<rect x="1118.5" y="198.5" width="8.2" height="26.6" rx="2" fill="url(#lit)"/>
<rect x="1128.2" y="198.5" width="8.2" height="26.6" rx="2" fill="#ee6a5e" fill-opacity="0.8"/>
<rect x="1128.2" y="198.5" width="8.2" height="26.6" rx="2" fill="url(#lit)"/>
<rect x="1137.9" y="198.5" width="8.2" height="26.6" rx="2" fill="#ee725b" fill-opacity="0.8"/>
<rect x="1137.9" y="198.5" width="8.2" height="26.6" rx="2" fill="url(#lit)"/>
<rect x="1147.7" y="198.5" width="8.2" height="26.6" rx="2" fill="#ef7a59" fill-opacity="0.8"/>
<rect x="1147.7" y="198.5" width="8.2" height="26.6" rx="2" fill="url(#lit)"/>
<rect x="1157.4" y="198.5" width="8.2" height="26.6" rx="2" fill="#ef8256" fill-opacity="0.8"/>
<rect x="1157.4" y="198.5" width="8.2" height="26.6" rx="2" fill="url(#lit)"/>
<rect x="1167.1" y="198.5" width="8.2" height="26.6" rx="2" fill="#f08a54" fill-opacity="0.8"/>
<rect x="1167.1" y="198.5" width="8.2" height="26.6" rx="2" fill="url(#lit)"/>
<rect x="1176.9" y="198.5" width="8.2" height="26.6" rx="2" fill="#f09252" fill-opacity="0.8"/>
<rect x="1176.9" y="198.5" width="8.2" height="26.6" rx="2" fill="url(#lit)"/>
<rect x="1186.6" y="198.5" width="8.2" height="26.6" rx="2" fill="#f19a4f" fill-opacity="0.8"/>
<rect x="1186.6" y="198.5" width="8.2" height="26.6" rx="2" fill="url(#lit)"/>
<rect x="1196.3" y="198.5" width="8.2" height="26.6" rx="2" fill="#f1a24d" fill-opacity="0.8"/>
<rect x="1196.3" y="198.5" width="8.2" height="26.6" rx="2" fill="url(#lit)"/>
<rect x="1206.1" y="198.5" width="8.2" height="26.6" rx="2" fill="#f1aa4a" fill-opacity="0.8"/>
<rect x="1206.1" y="198.5" width="8.2" height="26.6" rx="2" fill="url(#lit)"/>
<rect x="1215.8" y="198.5" width="8.2" height="26.6" rx="2" fill="#f8b338" fill-opacity="0.17"/>
<rect x="1225.6" y="198.5" width="8.2" height="26.6" rx="2" fill="#f8bc35" fill-opacity="0.17"/>
<rect x="1235.3" y="198.5" width="8.2" height="26.6" rx="2" fill="#f9c433" fill-opacity="0.17"/>
<rect x="1245" y="198.5" width="8.2" height="26.6" rx="2" fill="#f9cd30" fill-opacity="0.17"/>
<rect x="1254.8" y="198.5" width="8.2" height="26.6" rx="2" fill="#fad52d" fill-opacity="0.17"/>
<rect x="1264.5" y="198.5" width="8.2" height="26.6" rx="2" fill="#fade2a" fill-opacity="0.17"/>
<rect x="1274.2" y="198.5" width="8.2" height="26.6" rx="2" fill="#f2dc2e" fill-opacity="0.17"/>
<rect x="1284" y="198.5" width="8.2" height="26.6" rx="2" fill="#ebda31" fill-opacity="0.17"/>
<rect x="1293.7" y="198.5" width="8.2" height="26.6" rx="2" fill="#e3d935" fill-opacity="0.17"/>
<rect x="1303.4" y="198.5" width="8.2" height="26.6" rx="2" fill="#dbd738" fill-opacity="0.17"/>
<rect x="1313.2" y="198.5" width="8.2" height="26.6" rx="2" fill="#d3d53c" fill-opacity="0.17"/>
<rect x="1322.9" y="198.5" width="8.2" height="26.6" rx="2" fill="#ccd340" fill-opacity="0.17"/>
<rect x="1332.6" y="198.5" width="8.2" height="26.6" rx="2" fill="#c4d243" fill-opacity="0.17"/>
<rect x="1342.4" y="198.5" width="8.2" height="26.6" rx="2" fill="#bcd047" fill-opacity="0.17"/>
<rect x="1352.1" y="198.5" width="8.2" height="26.6" rx="2" fill="#b5ce4a" fill-opacity="0.17"/>
<rect x="1361.8" y="198.5" width="8.2" height="26.6" rx="2" fill="#adcc4e" fill-opacity="0.17"/>
<rect x="1371.6" y="198.5" width="8.2" height="26.6" rx="2" fill="#a5cb52" fill-opacity="0.17"/>
<rect x="1381.3" y="198.5" width="8.2" height="26.6" rx="2" fill="#9dc955" fill-opacity="0.17"/>
<rect x="1391" y="198.5" width="8.2" height="26.6" rx="2" fill="#96c759" fill-opacity="0.17"/>
<rect x="1400.8" y="198.5" width="8.2" height="26.6" rx="2" fill="#8ec55c" fill-opacity="0.17"/>
<rect x="1410.5" y="198.5" width="8.2" height="26.6" rx="2" fill="#86c360" fill-opacity="0.17"/>
<rect x="1420.3" y="198.5" width="8.2" height="26.6" rx="2" fill="#7fc264" fill-opacity="0.17"/>
<rect x="1430" y="198.5" width="8.2" height="26.6" rx="2" fill="#77c067" fill-opacity="0.17"/>
<text x="1505.5" y="218.5" font-size="20.6" fill="#f7aa3c" text-anchor="end" font-weight="normal" textLength="41.2" lengthAdjust="spacingAndGlyphs">32.4</text>
<text x="1526.7" y="218.5" font-size="11.8" fill="#f7aa3c" text-anchor="end" font-weight="normal" textLength="17.1" lengthAdjust="spacingAndGlyphs">GB</text>
<text x="1066.9" y="243.7" font-size="10.6" fill="#c7c7d1" text-anchor="start" font-weight="normal" textLength="22.7" lengthAdjust="spacingAndGlyphs">sda7</text>
<rect x="1099" y="226.8" width="8.2" height="26.6" rx="2" fill="#ed5265" fill-opacity="0.8"/>
<rect x="1099" y="226.8" width="8.2" height="26.6" rx="2" fill="url(#lit)"/>
<rect x="1108.7" y="226.8" width="8.2" height="26.6" rx="2" fill="#ed5a63" fill-opacity="0.8"/>
<rect x="1108.7" y="226.8" width="8.2" height="26.6" rx="2" fill="url(#lit)"/>
<rect x="1118.5" y="226.8" width="8.2" height="26.6" rx="2" fill="#ee6260" fill-opacity="0.8"/>
<rect x="1118.5" y="226.8" width="8.2" height="26.6" rx="2" fill="url(#lit)"/>
<rect x="1128.2" y="226.8" width="8.2" height="26.6" rx="2" fill="#ee6a5e" fill-opacity="0.8"/>
<rect x="1128.2" y="226.8" width="8.2" height="26.6" rx="2" fill="url(#lit)"/>
<rect x="1137.9" y="226.8" width="8.2" height="26.6" rx="2" fill="#ee725b" fill-opacity="0.8"/>
<rect x="1137.9" y="226.8" width="8.2" height="26.6" rx="2" fill="url(#lit)"/>
<rect x="1147.7" y="226.8" width="8.2" height="26.6" rx="2" fill="#ef7a59" fill-opacity="0.8"/>
<rect x="1147.7" y="226.8" width="8.2" height="26.6" rx="2" fill="url(#lit)"/>
<rect x="1157.4" y="226.8" width="8.2" height="26.6" rx="2" fill="#ef8256" fill-opacity="0.8"/>
<rect x="1157.4" y="226.8" width="8.2" height="26.6" rx="2" fill="url(#lit)"/>
<rect x="1167.1" y="226.8" width="8.2" height="26.6" rx="2" fill="#f08a54" fill-opacity="0.8"/>
<rect x="1167.1" y="226.8" width="8.2" height="26.6" rx="2" fill="url(#lit)"/>
<rect x="1176.9" y="226.8" width="8.2" height="26.6" rx="2" fill="#f09252" fill-opacity="0.8"/>
<rect x="1176.9" y="226.8" width="8.2" height="26.6" rx="2" fill="url(#lit)"/>
<rect x="1186.6" y="226.8" width="8.2" height="26.6" rx="2" fill="#f19a4f" fill-opacity="0.8"/>
<rect x="1186.6" y="226.8" width="8.2" height="26.6" rx="2" fill="url(#lit)"/>
<rect x="1196.3" y="226.8" width="8.2" height="26.6" rx="2" fill="#f1a24d" fill-opacity="0.8"/>
<rect x="1196.3" y="226.8" width="8.2" height="26.6" rx="2" fill="url(#lit)"/>
<rect x="1206.1" y="226.8" width="8.2" height="26.6" rx="2" fill="#f1aa4a" fill-opacity="0.8"/>
<rect x="1206.1" y="226.8" width="8.2" height="26.6" rx="2" fill="url(#lit)"/>
<rect x="1215.8" y="226.8" width="8.2" height="26.6" rx="2" fill="#f2b248" fill-opacity="0.8"/>
<rect x="1215.8" y="226.8" width="8.2" height="26.6" rx="2" fill="url(#lit)"/>
<rect x="1225.6" y="226.8" width="8.2" height="26.6" rx="2" fill="#f2ba45" fill-opacity="0.8"/>
<rect x="1225.6" y="226.8" width="8.2" height="26.6" rx="2" fill="url(#lit)"/>
<rect x="1235.3" y="226.8" width="8.2" height="26.6" rx="2" fill="#f3c243" fill-opacity="0.8"/>
<rect x="1235.3" y="226.8" width="8.2" height="26.6" rx="2" fill="url(#lit)"/>
<rect x="1245" y="226.8" width="8.2" height="26.6" rx="2" fill="#f9cd30" fill-opacity="0.17"/>
<rect x="1254.8" y="226.8" width="8.2" height="26.6" rx="2" fill="#fad52d" fill-opacity="0.17"/>
<rect x="1264.5" y="226.8" width="8.2" height="26.6" rx="2" fill="#fade2a" fill-opacity="0.17"/>
<rect x="1274.2" y="226.8" width="8.2" height="26.6" rx="2" fill="#f2dc2e" fill-opacity="0.17"/>
<rect x="1284" y="226.8" width="8.2" height="26.6" rx="2" fill="#ebda31" fill-opacity="0.17"/>
<rect x="1293.7" y="226.8" width="8.2" height="26.6" rx="2" fill="#e3d935" fill-opacity="0.17"/>
<rect x="1303.4" y="226.8" width="8.2" height="26.6" rx="2" fill="#dbd738" fill-opacity="0.17"/>
<rect x="1313.2" y="226.8" width="8.2" height="26.6" rx="2" fill="#d3d53c" fill-opacity="0.17"/>
<rect x="1322.9" y="226.8" width="8.2" height="26.6" rx="2" fill="#ccd340" fill-opacity="0.17"/>
<rect x="1332.6" y="226.8" width="8.2" height="26.6" rx="2" fill="#c4d243" fill-opacity="0.17"/>
<rect x="1342.4" y="226.8" width="8.2" height="26.6" rx="2" fill="#bcd047" fill-opacity="0.17"/>
<rect x="1352.1" y="226.8" width="8.2" height="26.6" rx="2" fill="#b5ce4a" fill-opacity="0.17"/>
<rect x="1361.8" y="226.8" width="8.2" height="26.6" rx="2" fill="#adcc4e" fill-opacity="0.17"/>
<rect x="1371.6" y="226.8" width="8.2" height="26.6" rx="2" fill="#a5cb52" fill-opacity="0.17"/>
<rect x="1381.3" y="226.8" width="8.2" height="26.6" rx="2" fill="#9dc955" fill-opacity="0.17"/>
<rect x="1391" y="226.8" width="8.2" height="26.6" rx="2" fill="#96c759" fill-opacity="0.17"/>
<rect x="1400.8" y="226.8" width="8.2" height="26.6" rx="2" fill="#8ec55c" fill-opacity="0.17"/>
<rect x="1410.5" y="226.8" width="8.2" height="26.6" rx="2" fill="#86c360" fill-opacity="0.17"/>
<rect x="1420.3" y="226.8" width="8.2" height="26.6" rx="2" fill="#7fc264" fill-opacity="0.17"/>
<rect x="1430" y="226.8" width="8.2" height="26.6" rx="2" fill="#77c067" fill-opacity="0.17"/>
<text x="1505.5" y="246.7" font-size="20.6" fill="#f8c134" text-anchor="end" font-weight="normal" textLength="41.2" lengthAdjust="spacingAndGlyphs">40.3</text>
<text x="1526.7" y="246.7" font-size="11.8" fill="#f8c134" text-anchor="end" font-weight="normal" textLength="17.1" lengthAdjust="spacingAndGlyphs">GB</text>
<path d="M1093.6 383.1 A49.6 49.6 0 1 1 1186.8 383.1" fill="none" stroke="#22252b" stroke-width="16.2"/>
<path d="M1093.6 383.1 A49.6 49.6 0 0 1 1092.3 378.8" fill="none" stroke="#f2495c" stroke-width="16.2"/>
<text x="1140.2" y="375.9" font-size="16.5" fill="#f2495c" text-anchor="middle" font-weight="normal" textLength="55.4" lengthAdjust="spacingAndGlyphs" stroke="#f2495c" stroke-width="0.35">2.35 GB</text>
<text x="1140.2" y="403.7" font-size="14.4" fill="#c7c7d1" text-anchor="middle" font-weight="normal" textLength="31" lengthAdjust="spacingAndGlyphs">sda1</text>
<path d="M1254.7 383.1 A49.6 49.6 0 1 1 1347.9 383.1" fill="none" stroke="#22252b" stroke-width="16.2"/>
<path d="M1254.7 383.1 A49.6 49.6 0 0 1 1305.5 316.7" fill="none" stroke="#e0c34a" stroke-width="16.2"/>
<text x="1301.3" y="375.9" font-size="16.5" fill="#e0c34a" text-anchor="middle" font-weight="normal" textLength="55.4" lengthAdjust="spacingAndGlyphs" stroke="#e0c34a" stroke-width="0.35">52.2 GB</text>
<text x="1301.3" y="403.7" font-size="14.4" fill="#c7c7d1" text-anchor="middle" font-weight="normal" textLength="31" lengthAdjust="spacingAndGlyphs">sda2</text>
<path d="M1415.5 383.1 A49.6 49.6 0 1 1 1508.7 383.1" fill="none" stroke="#22252b" stroke-width="16.2"/>
<path d="M1415.5 383.1 A49.6 49.6 0 1 1 1511.5 370.1" fill="none" stroke="#86c46a" stroke-width="16.2"/>
<text x="1462.1" y="375.9" font-size="16.5" fill="#86c46a" text-anchor="middle" font-weight="normal" textLength="55.4" lengthAdjust="spacingAndGlyphs" stroke="#86c46a" stroke-width="0.35">93.0 GB</text>
<text x="1462.1" y="403.7" font-size="14.4" fill="#c7c7d1" text-anchor="middle" font-weight="normal" textLength="31" lengthAdjust="spacingAndGlyphs">sda3</text>
<path d="M1093.6 501.7 A49.6 49.6 0 1 1 1186.8 501.7" fill="none" stroke="#22252b" stroke-width="16.2"/>
<path d="M1093.6 501.7 A49.6 49.6 0 0 1 1141.9 435.1" fill="none" stroke="#e0c34a" stroke-width="16.2"/>
<text x="1140.2" y="494.5" font-size="16.5" fill="#e0c34a" text-anchor="middle" font-weight="normal" textLength="55.4" lengthAdjust="spacingAndGlyphs" stroke="#e0c34a" stroke-width="0.35">50.9 GB</text>
<text x="1140.2" y="522.3" font-size="14.4" fill="#c7c7d1" text-anchor="middle" font-weight="normal" textLength="31" lengthAdjust="spacingAndGlyphs">sda5</text>
<path d="M1254.7 501.7 A49.6 49.6 0 1 1 1347.9 501.7" fill="none" stroke="#22252b" stroke-width="16.2"/>
<path d="M1254.7 501.7 A49.6 49.6 0 0 1 1252.4 492.8" fill="none" stroke="#f2495c" stroke-width="16.2"/>
<text x="1301.3" y="494.5" font-size="16.5" fill="#f2495c" text-anchor="middle" font-weight="normal" textLength="55.4" lengthAdjust="spacingAndGlyphs" stroke="#f2495c" stroke-width="0.35">4.84 GB</text>
<text x="1301.3" y="522.3" font-size="14.4" fill="#c7c7d1" text-anchor="middle" font-weight="normal" textLength="31" lengthAdjust="spacingAndGlyphs">sda6</text>
<path d="M1415.5 501.7 A49.6 49.6 0 1 1 1508.7 501.7" fill="none" stroke="#22252b" stroke-width="16.2"/>
<path d="M1415.5 501.7 A49.6 49.6 0 0 1 1469.5 435.7" fill="none" stroke="#e0c34a" stroke-width="16.2"/>
<text x="1462.1" y="494.5" font-size="16.5" fill="#e0c34a" text-anchor="middle" font-weight="normal" textLength="55.4" lengthAdjust="spacingAndGlyphs" stroke="#e0c34a" stroke-width="0.35">53.9 GB</text>
<text x="1462.1" y="522.3" font-size="14.4" fill="#c7c7d1" text-anchor="middle" font-weight="normal" textLength="31" lengthAdjust="spacingAndGlyphs">sda7</text>
<line x1="93.9" y1="504.4" x2="938" y2="504.4" stroke="rgba(204,204,220,0.10)" stroke-width="1"/>
<text x="89" y="508.2" font-size="10" fill="#bcbcc6" text-anchor="end" font-weight="normal" textLength="5.2" lengthAdjust="spacingAndGlyphs">0</text>
<line x1="93.9" y1="478.1" x2="938" y2="478.1" stroke="rgba(204,204,220,0.10)" stroke-width="1"/>
<text x="89" y="481.9" font-size="10" fill="#bcbcc6" text-anchor="end" font-weight="normal" textLength="10.5" lengthAdjust="spacingAndGlyphs">20</text>
<line x1="93.9" y1="451.9" x2="938" y2="451.9" stroke="rgba(204,204,220,0.10)" stroke-width="1"/>
<text x="89" y="455.7" font-size="10" fill="#bcbcc6" text-anchor="end" font-weight="normal" textLength="10.5" lengthAdjust="spacingAndGlyphs">40</text>
<line x1="93.9" y1="425.6" x2="938" y2="425.6" stroke="rgba(204,204,220,0.10)" stroke-width="1"/>
<text x="89" y="429.4" font-size="10" fill="#bcbcc6" text-anchor="end" font-weight="normal" textLength="10.5" lengthAdjust="spacingAndGlyphs">60</text>
<line x1="93.9" y1="399.4" x2="938" y2="399.4" stroke="rgba(204,204,220,0.10)" stroke-width="1"/>
<text x="89" y="403.2" font-size="10" fill="#bcbcc6" text-anchor="end" font-weight="normal" textLength="10.5" lengthAdjust="spacingAndGlyphs">80</text>
<line x1="93.9" y1="373.1" x2="938" y2="373.1" stroke="rgba(204,204,220,0.10)" stroke-width="1"/>
<text x="89" y="376.9" font-size="10" fill="#bcbcc6" text-anchor="end" font-weight="normal" textLength="15.7" lengthAdjust="spacingAndGlyphs">100</text>
<line x1="93.9" y1="346.9" x2="938" y2="346.9" stroke="rgba(204,204,220,0.10)" stroke-width="1"/>
<text x="89" y="350.7" font-size="10" fill="#bcbcc6" text-anchor="end" font-weight="normal" textLength="15.7" lengthAdjust="spacingAndGlyphs">120</text>
<line x1="93.9" y1="320.6" x2="938" y2="320.6" stroke="rgba(204,204,220,0.10)" stroke-width="1"/>
<text x="89" y="324.4" font-size="10" fill="#bcbcc6" text-anchor="end" font-weight="normal" textLength="15.7" lengthAdjust="spacingAndGlyphs">140</text>
<line x1="143.7" y1="305" x2="143.7" y2="510" stroke="rgba(204,204,220,0.10)" stroke-width="1"/>
<text x="143.7" y="524.5" font-size="10" fill="#bcbcc6" text-anchor="middle" font-weight="normal" textLength="23.5" lengthAdjust="spacingAndGlyphs">11:30</text>
<line x1="190.2" y1="305" x2="190.2" y2="510" stroke="rgba(204,204,220,0.10)" stroke-width="1"/>
<text x="190.2" y="524.5" font-size="10" fill="#bcbcc6" text-anchor="middle" font-weight="normal" textLength="23.5" lengthAdjust="spacingAndGlyphs">11:40</text>
<line x1="236.6" y1="305" x2="236.6" y2="510" stroke="rgba(204,204,220,0.10)" stroke-width="1"/>
<text x="236.6" y="524.5" font-size="10" fill="#bcbcc6" text-anchor="middle" font-weight="normal" textLength="23.5" lengthAdjust="spacingAndGlyphs">11:50</text>
<line x1="283.1" y1="305" x2="283.1" y2="510" stroke="rgba(204,204,220,0.10)" stroke-width="1"/>
<text x="283.1" y="524.5" font-size="10" fill="#bcbcc6" text-anchor="middle" font-weight="normal" textLength="23.5" lengthAdjust="spacingAndGlyphs">12:00</text>
<line x1="329.5" y1="305" x2="329.5" y2="510" stroke="rgba(204,204,220,0.10)" stroke-width="1"/>
<text x="329.5" y="524.5" font-size="10" fill="#bcbcc6" text-anchor="middle" font-weight="normal" textLength="23.5" lengthAdjust="spacingAndGlyphs">12:10</text>
<line x1="376" y1="305" x2="376" y2="510" stroke="rgba(204,204,220,0.10)" stroke-width="1"/>
<text x="376" y="524.5" font-size="10" fill="#bcbcc6" text-anchor="middle" font-weight="normal" textLength="23.5" lengthAdjust="spacingAndGlyphs">12:20</text>
<line x1="422.5" y1="305" x2="422.5" y2="510" stroke="rgba(204,204,220,0.10)" stroke-width="1"/>
<text x="422.5" y="524.5" font-size="10" fill="#bcbcc6" text-anchor="middle" font-weight="normal" textLength="23.5" lengthAdjust="spacingAndGlyphs">12:30</text>
<line x1="468.9" y1="305" x2="468.9" y2="510" stroke="rgba(204,204,220,0.10)" stroke-width="1"/>
<text x="468.9" y="524.5" font-size="10" fill="#bcbcc6" text-anchor="middle" font-weight="normal" textLength="23.5" lengthAdjust="spacingAndGlyphs">12:40</text>
<line x1="515.4" y1="305" x2="515.4" y2="510" stroke="rgba(204,204,220,0.10)" stroke-width="1"/>
<text x="515.4" y="524.5" font-size="10" fill="#bcbcc6" text-anchor="middle" font-weight="normal" textLength="23.5" lengthAdjust="spacingAndGlyphs">12:50</text>
<line x1="561.8" y1="305" x2="561.8" y2="510" stroke="rgba(204,204,220,0.10)" stroke-width="1"/>
<text x="561.8" y="524.5" font-size="10" fill="#bcbcc6" text-anchor="middle" font-weight="normal" textLength="23.5" lengthAdjust="spacingAndGlyphs">13:00</text>
<line x1="608.3" y1="305" x2="608.3" y2="510" stroke="rgba(204,204,220,0.10)" stroke-width="1"/>
<text x="608.3" y="524.5" font-size="10" fill="#bcbcc6" text-anchor="middle" font-weight="normal" textLength="23.5" lengthAdjust="spacingAndGlyphs">13:10</text>
<line x1="654.7" y1="305" x2="654.7" y2="510" stroke="rgba(204,204,220,0.10)" stroke-width="1"/>
<text x="654.7" y="524.5" font-size="10" fill="#bcbcc6" text-anchor="middle" font-weight="normal" textLength="23.5" lengthAdjust="spacingAndGlyphs">13:20</text>
<line x1="701.2" y1="305" x2="701.2" y2="510" stroke="rgba(204,204,220,0.10)" stroke-width="1"/>
<text x="701.2" y="524.5" font-size="10" fill="#bcbcc6" text-anchor="middle" font-weight="normal" textLength="23.5" lengthAdjust="spacingAndGlyphs">13:30</text>
<line x1="747.7" y1="305" x2="747.7" y2="510" stroke="rgba(204,204,220,0.10)" stroke-width="1"/>
<text x="747.7" y="524.5" font-size="10" fill="#bcbcc6" text-anchor="middle" font-weight="normal" textLength="23.5" lengthAdjust="spacingAndGlyphs">13:40</text>
<line x1="794.1" y1="305" x2="794.1" y2="510" stroke="rgba(204,204,220,0.10)" stroke-width="1"/>
<text x="794.1" y="524.5" font-size="10" fill="#bcbcc6" text-anchor="middle" font-weight="normal" textLength="23.5" lengthAdjust="spacingAndGlyphs">13:50</text>
<line x1="840.6" y1="305" x2="840.6" y2="510" stroke="rgba(204,204,220,0.10)" stroke-width="1"/>
<text x="840.6" y="524.5" font-size="10" fill="#bcbcc6" text-anchor="middle" font-weight="normal" textLength="23.5" lengthAdjust="spacingAndGlyphs">14:00</text>
<line x1="887" y1="305" x2="887" y2="510" stroke="rgba(204,204,220,0.10)" stroke-width="1"/>
<text x="887" y="524.5" font-size="10" fill="#bcbcc6" text-anchor="middle" font-weight="normal" textLength="23.5" lengthAdjust="spacingAndGlyphs">14:10</text>
<line x1="933.5" y1="305" x2="933.5" y2="510" stroke="rgba(204,204,220,0.10)" stroke-width="1"/>
<text x="933.5" y="524.5" font-size="10" fill="#bcbcc6" text-anchor="middle" font-weight="normal" textLength="23.5" lengthAdjust="spacingAndGlyphs">14:20</text>
<polygon points="102.7,468.6 104,467.8 105.4,469.2 106.7,468.9 108.1,467.3 109.4,467.6 110.8,470 112.1,467.9 113.5,470.2 114.8,471 116.2,468.9 117.5,468.6 118.9,468 120.2,467.7 121.6,467.4 122.9,466.6 124.3,468.1 125.6,468.4 127,468.8 128.3,469.6 129.7,469.7 131,468.5 132.4,468.3 133.7,466.8 135.1,467.9 136.4,469.1 137.8,470.3 139.1,468 140.5,466.5 141.8,467.2 143.1,467.2 144.5,468.6 145.8,469.6 147.2,469.4 148.5,470.4 149.9,468.7 151.2,470.7 152.6,472.1 153.9,472.4 155.3,468.6 156.6,469.2 158,468.6 159.3,470.5 160.7,467.5 162,483.2 163.4,467.9 164.7,484.4 166.1,469.4 167.4,483.8 168.8,468.1 170.1,482.8 171.5,468.5 172.8,483.1 174.2,476.4 175.5,503.5 176.9,479.9 178.2,469.4 179.6,470.2 180.9,467.3 182.2,468.5 183.6,469.4 184.9,467.9 186.3,466.9 187.6,467.9 189,466.9 190.3,466.9 191.7,468.1 193,468.5 194.4,470.3 195.7,471.2 197.1,468.3 198.4,467.4 199.8,468.2 201.1,467.7 202.5,469.9 203.8,468.6 205.2,467.3 206.5,468.3 207.9,468.2 209.2,469.3 210.6,467.8 211.9,469.3 213.3,468.4 214.6,466.9 216,469.4 217.3,470 218.7,468.8 220,467.3 221.4,469.9 222.7,468.7 224,469.2 225.4,468.5 226.7,467.7 228.1,469.8 229.4,468.4 230.8,468 232.1,471.6 233.5,472.2 234.8,468.2 236.2,467.4 237.5,468 238.9,469.5 240.2,469.8 241.6,467 242.9,470.1 244.3,467.3 245.6,467.5 247,467.5 248.3,466.7 249.7,466 251,468.3 252.4,465 253.7,466 255.1,468 256.4,468 257.8,467.3 259.1,468.7 260.5,468.9 261.8,467.6 263.1,468.6 264.5,480.5 265.8,468.7 267.2,486 268.5,470.2 269.9,481.9 271.2,469.1 272.6,481.4 273.9,468 275.3,486.1 276.6,496.6 278,504.4 279.3,471.3 280.7,469.8 282,466.9 283.4,470.1 284.7,467.8 286.1,474.2 287.4,469 288.8,474.8 290.1,469.5 291.5,472 292.8,468.7 294.2,469.2 295.5,467.9 296.9,467.9 298.2,467.1 299.6,466.3 300.9,468.2 302.2,467.3 303.6,466.9 304.9,467.2 306.3,468.3 307.6,469.3 309,472.2 310.3,469.9 311.7,468.4 313,470 314.4,468.4 315.7,469.1 317.1,465.6 318.4,466.9 319.8,465.3 321.1,466.5 322.5,468 323.8,467.1 325.2,469.2 326.5,469.9 327.9,469.1 329.2,468.8 330.6,466.3 331.9,467.5 333.3,467.7 334.6,468.6 336,468.8 337.3,464.5 338.7,466.6 340,467.8 341.3,468.2 342.7,467.2 344,467.9 345.4,469 346.7,469.4 348.1,469 349.4,469.2 350.8,468.2 352.1,468 353.5,468.9 354.8,468.4 356.2,469.1 357.5,469.8 358.9,467.6 360.2,468 361.6,467.2 362.9,465.4 364.3,463.7 365.6,468.4 367,466.4 368.3,466.8 369.7,465.9 371,466.9 372.4,468.4 373.7,467.7 375.1,468.7 376.4,468.4 377.8,468.1 379.1,467.9 380.5,468.6 381.8,471.3 383.1,468 384.5,466.6 385.8,467.7 387.2,468.1 388.5,466.5 389.9,465.2 391.2,466.7 392.6,469.2 393.9,468.7 395.3,468.5 396.6,469.2 398,468.3 399.3,466.2 400.7,468.2 402,466 403.4,466.9 404.7,465.7 406.1,471.2 407.4,469.8 408.8,465.5 410.1,464.7 411.5,466.5 412.8,468.9 414.2,468.4 415.5,467.8 416.9,467.1 418.2,466.8 419.6,465.4 420.9,467.7 422.2,466.6 423.6,468.4 424.9,468.9 426.3,468 427.6,465.6 429,466.3 430.3,467 431.7,467.8 433,469.2 434.4,469.3 435.7,467.7 437.1,466.4 438.4,464.2 439.8,470 441.1,468.4 442.5,465.3 443.8,467.9 445.2,467.5 446.5,468.2 447.9,468.2 449.2,468.3 450.6,470 451.9,468.1 453.3,465.8 454.6,467.2 456,468.2 457.3,467.3 458.7,468.7 460,468.8 461.3,470.5 462.7,470.5 464,468.4 465.4,467.3 466.7,465.3 468.1,467.3 469.4,465.5 470.8,465.9 472.1,465.4 473.5,466.7 474.8,470.2 476.2,469.4 477.5,471.4 478.9,469.1 480.2,467.7 481.6,468 482.9,467.5 484.3,466.3 485.6,467.5 487,466.7 488.3,465.6 489.7,465.4 491,465.9 492.4,468 493.7,467.3 495.1,468.3 496.4,466.8 497.8,465.6 499.1,467.7 500.4,468 501.8,467.1 503.1,466.1 504.5,467.7 505.8,467.7 507.2,466.7 508.5,469.1 509.9,469 511.2,466.6 512.6,465.6 513.9,469.4 515.3,467.7 516.6,469.4 518,465.4 519.3,465.2 520.7,467.7 522,467 523.4,465.2 524.7,463.8 526.1,466.6 527.4,469.1 528.8,467.8 530.1,467.4 531.5,465.4 532.8,466 534.2,468 535.5,467.6 536.9,468.2 538.2,464.8 539.6,466.3 540.9,466.9 542.2,467.2 543.6,466.2 544.9,471.1 546.3,468.8 547.6,466.4 549,466.7 550.3,467.1 551.7,465.4 553,465.5 554.4,466.4 555.7,466.3 557.1,464.9 558.4,465.6 559.8,463.7 561.1,465.9 562.5,466 563.8,465.5 565.2,467.1 566.5,468.8 567.9,467 569.2,467.9 570.6,467 571.9,466.9 573.3,467.1 574.6,465.9 576,468.2 577.3,468.1 578.7,467 580,465.6 581.3,466.5 582.7,467.8 584,467 585.4,466.2 586.7,468.1 588.1,467.6 589.4,468.6 590.8,468.1 592.1,468.5 593.5,468.8 594.8,466.3 596.2,467.1 597.5,465.8 598.9,469.1 600.2,467.7 601.6,466.2 602.9,466.5 604.3,466.9 605.6,467.5 607,466.8 608.3,467.8 609.7,466.8 611,470.1 612.4,467.1 613.7,466.4 615.1,466.6 616.4,469.9 617.8,468.7 619.1,468.1 620.4,468.2 621.8,468.6 623.1,470.1 624.5,468.1 625.8,468.5 627.2,467.7 628.5,469.3 629.9,468.2 631.2,467.7 632.6,467.5 633.9,470.9 635.3,467.3 636.6,466.8 638,466.6 639.3,469.5 640.7,469 642,468.6 643.4,467.3 644.7,467.8 646.1,466.7 647.4,468 648.8,465.5 650.1,467.2 651.5,466.8 652.8,464.7 654.2,466.1 655.5,466.9 656.9,469.9 658.2,470.5 659.5,470.2 660.9,469.6 662.2,468.7 663.6,468.4 664.9,468.3 666.3,468.4 667.6,468.1 669,468.4 670.3,470.8 671.7,470 673,468.2 674.4,466.8 675.7,467.4 677.1,467.4 678.4,469.6 679.8,469.3 681.1,469.6 682.5,469.3 683.8,469.8 685.2,470.7 686.5,471 687.9,473.8 689.2,472.5 690.6,474.5 691.9,475.4 693.3,474.8 694.6,473.3 696,469.9 697.3,468.7 698.7,466.2 700,465 701.3,463 702.7,461.6 704,461 705.4,463.9 706.7,461.1 708.1,462.8 709.4,465.2 710.8,466.8 712.1,466 713.5,468.4 714.8,468.8 716.2,469 717.5,465.8 718.9,466.7 720.2,465.9 721.6,464.9 722.9,465.4 724.3,468.8 725.6,469 727,467.5 728.3,467.7 729.7,469.8 731,469.7 732.4,468.1 733.7,464.8 735.1,467 736.4,469.5 737.8,470.2 739.1,469.4 740.4,468.5 741.8,468 743.1,469.2 744.5,468.9 745.8,470.6 747.2,470.3 748.5,469.1 749.9,466.2 751.2,470.7 752.6,468.1 753.9,465.2 755.3,466.7 756.6,468.2 758,467.4 759.3,467.6 760.7,467.4 762,468.7 763.4,471.2 764.7,469.5 766.1,468.3 767.4,468.5 768.8,468.7 770.1,467.6 771.5,472.2 772.8,467.8 774.2,470.1 775.5,469.3 776.9,471.1 778.2,470 779.5,469.9 780.9,468.3 782.2,467.7 783.6,467.9 784.9,468.8 786.3,467.3 787.6,466.3 789,469.8 790.3,469.1 791.7,469.7 793,470.9 794.4,468.9 795.7,468.7 797.1,468.7 798.4,469.2 799.8,468.3 801.1,468.1 802.5,466.9 803.8,467.3 805.2,468.6 806.5,470.3 807.9,471.1 809.2,469.6 810.6,468.9 811.9,469.9 813.3,467.8 814.6,468.6 816,468 817.3,468.5 818.6,467.8 820,468 821.3,467 822.7,468 824,469.2 825.4,466.6 826.7,467.4 828.1,466.1 829.4,467.8 830.8,468.6 832.1,470.1 833.5,469.3 834.8,468.7 836.2,469.6 837.5,471.3 838.9,471 840.2,470.1 841.6,469.5 842.9,467.5 844.3,468.3 845.6,468.9 847,469 848.3,471.8 849.7,469.2 851,469.8 852.4,470.5 853.7,470.8 855.1,471.8 856.4,469.5 857.8,470.9 859.1,468.9 860.4,468.5 861.8,467.2 863.1,468.2 864.5,468.4 865.8,468.6 867.2,468.3 868.5,469 869.9,468.8 871.2,470.6 872.6,469.9 873.9,469.5 875.3,470.2 876.6,466.5 878,467.4 879.3,466.7 880.7,467.1 882,466.8 883.4,466.6 884.7,468.5 886.1,467.9 887.4,466.6 888.8,467.4 890.1,469.4 891.5,469.8 892.8,469.1 894.2,469.2 895.5,469.3 896.9,468.9 898.2,468.1 899.5,469.9 900.9,470.1 902.2,469.3 903.6,469.2 904.9,468.5 906.3,467.1 907.6,468.4 909,469.2 910.3,469.2 911.7,468.8 913,468 914.4,472 915.7,469.6 917.1,469.2 918.4,468.4 919.8,468.7 921.1,470.4 922.5,471.1 923.8,471.7 925.2,473.6 926.5,477.1 927.9,478.5 929.2,478.2 930.6,472.2 931.9,470.9 933.3,471 934.6,468.9 936,469.5 937.3,467.4 937.3,504.4 936,504.4 934.6,504.4 933.3,504.4 931.9,504.4 930.6,504.4 929.2,504.4 927.9,504.4 926.5,504.4 925.2,504.4 923.8,504.4 922.5,504.4 921.1,504.4 919.8,504.4 918.4,504.4 917.1,504.4 915.7,504.4 914.4,504.4 913,504.4 911.7,504.4 910.3,504.4 909,504.4 907.6,504.4 906.3,504.4 904.9,504.4 903.6,504.4 902.2,504.4 900.9,504.4 899.5,504.4 898.2,504.4 896.9,504.4 895.5,504.4 894.2,504.4 892.8,504.4 891.5,504.4 890.1,504.4 888.8,504.4 887.4,504.4 886.1,504.4 884.7,504.4 883.4,504.4 882,504.4 880.7,504.4 879.3,504.4 878,504.4 876.6,504.4 875.3,504.4 873.9,504.4 872.6,504.4 871.2,504.4 869.9,504.4 868.5,504.4 867.2,504.4 865.8,504.4 864.5,504.4 863.1,504.4 861.8,504.4 860.4,504.4 859.1,504.4 857.8,504.4 856.4,504.4 855.1,504.4 853.7,504.4 852.4,504.4 851,504.4 849.7,504.4 848.3,504.4 847,504.4 845.6,504.4 844.3,504.4 842.9,504.4 841.6,504.4 840.2,504.4 838.9,504.4 837.5,504.4 836.2,504.4 834.8,504.4 833.5,504.4 832.1,504.4 830.8,504.4 829.4,504.4 828.1,504.4 826.7,504.4 825.4,504.4 824,504.4 822.7,504.4 821.3,504.4 820,504.4 818.6,504.4 817.3,504.4 816,504.4 814.6,504.4 813.3,504.4 811.9,504.4 810.6,504.4 809.2,504.4 807.9,504.4 806.5,504.4 805.2,504.4 803.8,504.4 802.5,504.4 801.1,504.4 799.8,504.4 798.4,504.4 797.1,504.4 795.7,504.4 794.4,504.4 793,504.4 791.7,504.4 790.3,504.4 789,504.4 787.6,504.4 786.3,504.4 784.9,504.4 783.6,504.4 782.2,504.4 780.9,504.4 779.5,504.4 778.2,504.4 776.9,504.4 775.5,504.4 774.2,504.4 772.8,504.4 771.5,504.4 770.1,504.4 768.8,504.4 767.4,504.4 766.1,504.4 764.7,504.4 763.4,504.4 762,504.4 760.7,504.4 759.3,504.4 758,504.4 756.6,504.4 755.3,504.4 753.9,504.4 752.6,504.4 751.2,504.4 749.9,504.4 748.5,504.4 747.2,504.4 745.8,504.4 744.5,504.4 743.1,504.4 741.8,504.4 740.4,504.4 739.1,504.4 737.8,504.4 736.4,504.4 735.1,504.4 733.7,504.4 732.4,504.4 731,504.4 729.7,504.4 728.3,504.4 727,504.4 725.6,504.4 724.3,504.4 722.9,504.4 721.6,504.4 720.2,504.4 718.9,504.4 717.5,504.4 716.2,504.4 714.8,504.4 713.5,504.4 712.1,504.4 710.8,504.4 709.4,504.4 708.1,504.4 706.7,504.4 705.4,504.4 704,504.4 702.7,504.4 701.3,504.4 700,504.4 698.7,504.4 697.3,504.4 696,504.4 694.6,504.4 693.3,504.4 691.9,504.4 690.6,504.4 689.2,504.4 687.9,504.4 686.5,504.4 685.2,504.4 683.8,504.4 682.5,504.4 681.1,504.4 679.8,504.4 678.4,504.4 677.1,504.4 675.7,504.4 674.4,504.4 673,504.4 671.7,504.4 670.3,504.4 669,504.4 667.6,504.4 666.3,504.4 664.9,504.4 663.6,504.4 662.2,504.4 660.9,504.4 659.5,504.4 658.2,504.4 656.9,504.4 655.5,504.4 654.2,504.4 652.8,504.4 651.5,504.4 650.1,504.4 648.8,504.4 647.4,504.4 646.1,504.4 644.7,504.4 643.4,504.4 642,504.4 640.7,504.4 639.3,504.4 638,504.4 636.6,504.4 635.3,504.4 633.9,504.4 632.6,504.4 631.2,504.4 629.9,504.4 628.5,504.4 627.2,504.4 625.8,504.4 624.5,504.4 623.1,504.4 621.8,504.4 620.4,504.4 619.1,504.4 617.8,504.4 616.4,504.4 615.1,504.4 613.7,504.4 612.4,504.4 611,504.4 609.7,504.4 608.3,504.4 607,504.4 605.6,504.4 604.3,504.4 602.9,504.4 601.6,504.4 600.2,504.4 598.9,504.4 597.5,504.4 596.2,504.4 594.8,504.4 593.5,504.4 592.1,504.4 590.8,504.4 589.4,504.4 588.1,504.4 586.7,504.4 585.4,504.4 584,504.4 582.7,504.4 581.3,504.4 580,504.4 578.7,504.4 577.3,504.4 576,504.4 574.6,504.4 573.3,504.4 571.9,504.4 570.6,504.4 569.2,504.4 567.9,504.4 566.5,504.4 565.2,504.4 563.8,504.4 562.5,504.4 561.1,504.4 559.8,504.4 558.4,504.4 557.1,504.4 555.7,504.4 554.4,504.4 553,504.4 551.7,504.4 550.3,504.4 549,504.4 547.6,504.4 546.3,504.4 544.9,504.4 543.6,504.4 542.2,504.4 540.9,504.4 539.6,504.4 538.2,504.4 536.9,504.4 535.5,504.4 534.2,504.4 532.8,504.4 531.5,504.4 530.1,504.4 528.8,504.4 527.4,504.4 526.1,504.4 524.7,504.4 523.4,504.4 522,504.4 520.7,504.4 519.3,504.4 518,504.4 516.6,504.4 515.3,504.4 513.9,504.4 512.6,504.4 511.2,504.4 509.9,504.4 508.5,504.4 507.2,504.4 505.8,504.4 504.5,504.4 503.1,504.4 501.8,504.4 500.4,504.4 499.1,504.4 497.8,504.4 496.4,504.4 495.1,504.4 493.7,504.4 492.4,504.4 491,504.4 489.7,504.4 488.3,504.4 487,504.4 485.6,504.4 484.3,504.4 482.9,504.4 481.6,504.4 480.2,504.4 478.9,504.4 477.5,504.4 476.2,504.4 474.8,504.4 473.5,504.4 472.1,504.4 470.8,504.4 469.4,504.4 468.1,504.4 466.7,504.4 465.4,504.4 464,504.4 462.7,504.4 461.3,504.4 460,504.4 458.7,504.4 457.3,504.4 456,504.4 454.6,504.4 453.3,504.4 451.9,504.4 450.6,504.4 449.2,504.4 447.9,504.4 446.5,504.4 445.2,504.4 443.8,504.4 442.5,504.4 441.1,504.4 439.8,504.4 438.4,504.4 437.1,504.4 435.7,504.4 434.4,504.4 433,504.4 431.7,504.4 430.3,504.4 429,504.4 427.6,504.4 426.3,504.4 424.9,504.4 423.6,504.4 422.2,504.4 420.9,504.4 419.6,504.4 418.2,504.4 416.9,504.4 415.5,504.4 414.2,504.4 412.8,504.4 411.5,504.4 410.1,504.4 408.8,504.4 407.4,504.4 406.1,504.4 404.7,504.4 403.4,504.4 402,504.4 400.7,504.4 399.3,504.4 398,504.4 396.6,504.4 395.3,504.4 393.9,504.4 392.6,504.4 391.2,504.4 389.9,504.4 388.5,504.4 387.2,504.4 385.8,504.4 384.5,504.4 383.1,504.4 381.8,504.4 380.5,504.4 379.1,504.4 377.8,504.4 376.4,504.4 375.1,504.4 373.7,504.4 372.4,504.4 371,504.4 369.7,504.4 368.3,504.4 367,504.4 365.6,504.4 364.3,504.4 362.9,504.4 361.6,504.4 360.2,504.4 358.9,504.4 357.5,504.4 356.2,504.4 354.8,504.4 353.5,504.4 352.1,504.4 350.8,504.4 349.4,504.4 348.1,504.4 346.7,504.4 345.4,504.4 344,504.4 342.7,504.4 341.3,504.4 340,504.4 338.7,504.4 337.3,504.4 336,504.4 334.6,504.4 333.3,504.4 331.9,504.4 330.6,504.4 329.2,504.4 327.9,504.4 326.5,504.4 325.2,504.4 323.8,504.4 322.5,504.4 321.1,504.4 319.8,504.4 318.4,504.4 317.1,504.4 315.7,504.4 314.4,504.4 313,504.4 311.7,504.4 310.3,504.4 309,504.4 307.6,504.4 306.3,504.4 304.9,504.4 303.6,504.4 302.2,504.4 300.9,504.4 299.6,504.4 298.2,504.4 296.9,504.4 295.5,504.4 294.2,504.4 292.8,504.4 291.5,504.4 290.1,504.4 288.8,504.4 287.4,504.4 286.1,504.4 284.7,504.4 283.4,504.4 282,504.4 280.7,504.4 279.3,504.4 278,504.4 276.6,504.4 275.3,504.4 273.9,504.4 272.6,504.4 271.2,504.4 269.9,504.4 268.5,504.4 267.2,504.4 265.8,504.4 264.5,504.4 263.1,504.4 261.8,504.4 260.5,504.4 259.1,504.4 257.8,504.4 256.4,504.4 255.1,504.4 253.7,504.4 252.4,504.4 251,504.4 249.7,504.4 248.3,504.4 247,504.4 245.6,504.4 244.3,504.4 242.9,504.4 241.6,504.4 240.2,504.4 238.9,504.4 237.5,504.4 236.2,504.4 234.8,504.4 233.5,504.4 232.1,504.4 230.8,504.4 229.4,504.4 228.1,504.4 226.7,504.4 225.4,504.4 224,504.4 222.7,504.4 221.4,504.4 220,504.4 218.7,504.4 217.3,504.4 216,504.4 214.6,504.4 213.3,504.4 211.9,504.4 210.6,504.4 209.2,504.4 207.9,504.4 206.5,504.4 205.2,504.4 203.8,504.4 202.5,504.4 201.1,504.4 199.8,504.4 198.4,504.4 197.1,504.4 195.7,504.4 194.4,504.4 193,504.4 191.7,504.4 190.3,504.4 189,504.4 187.6,504.4 186.3,504.4 184.9,504.4 183.6,504.4 182.2,504.4 180.9,504.4 179.6,504.4 178.2,504.4 176.9,504.4 175.5,504.4 174.2,504.4 172.8,504.4 171.5,504.4 170.1,504.4 168.8,504.4 167.4,504.4 166.1,504.4 164.7,504.4 163.4,504.4 162,504.4 160.7,504.4 159.3,504.4 158,504.4 156.6,504.4 155.3,504.4 153.9,504.4 152.6,504.4 151.2,504.4 149.9,504.4 148.5,504.4 147.2,504.4 145.8,504.4 144.5,504.4 143.1,504.4 141.8,504.4 140.5,504.4 139.1,504.4 137.8,504.4 136.4,504.4 135.1,504.4 133.7,504.4 132.4,504.4 131,504.4 129.7,504.4 128.3,504.4 127,504.4 125.6,504.4 124.3,504.4 122.9,504.4 121.6,504.4 120.2,504.4 118.9,504.4 117.5,504.4 116.2,504.4 114.8,504.4 113.5,504.4 112.1,504.4 110.8,504.4 109.4,504.4 108.1,504.4 106.7,504.4 105.4,504.4 104,504.4 102.7,504.4" fill="#41649a"/>
<polygon points="102.7,428.7 104,423.8 105.4,428.3 106.7,433.9 108.1,430.1 109.4,428.1 110.8,424.8 112.1,429.6 113.5,432.4 114.8,433.1 116.2,432.7 117.5,431 118.9,432.6 120.2,432.5 121.6,435 122.9,432.2 124.3,434.7 125.6,434.9 127,436.6 128.3,434.1 129.7,433.8 131,429.5 132.4,432.9 133.7,435.2 135.1,435.5 136.4,434.2 137.8,438.3 139.1,432 140.5,430.8 141.8,429.5 143.1,433.6 144.5,432.1 145.8,436.1 147.2,439.3 148.5,441.3 149.9,443.5 151.2,444 152.6,446.5 153.9,442.4 155.3,435.9 156.6,437.2 158,437.3 159.3,435.6 160.7,437.2 162,460.6 163.4,448.5 164.7,449 166.1,445.6 167.4,452.2 168.8,442.8 170.1,449.2 171.5,438.2 172.8,442.5 174.2,444.6 175.5,481.3 176.9,456.8 178.2,439.5 179.6,438.3 180.9,434.9 182.2,437.5 183.6,432 184.9,431.7 186.3,434.8 187.6,432.9 189,433.9 190.3,437.8 191.7,433.6 193,436.9 194.4,437.2 195.7,434.3 197.1,431.3 198.4,432.1 199.8,430.5 201.1,430 202.5,435.5 203.8,433.8 205.2,431.9 206.5,432 207.9,436.1 209.2,436.9 210.6,433.1 211.9,435.4 213.3,435.9 214.6,434.4 216,432.8 217.3,435.6 218.7,439.5 220,433.9 221.4,433.4 222.7,431.4 224,435.3 225.4,434.3 226.7,432.6 228.1,433.2 229.4,431.4 230.8,430.4 232.1,436 233.5,434.4 234.8,432.4 236.2,432.9 237.5,432.1 238.9,433.8 240.2,433.8 241.6,432.1 242.9,433.9 244.3,430.3 245.6,428.8 247,429.1 248.3,434.4 249.7,433.1 251,433.7 252.4,429 253.7,432.1 255.1,432.9 256.4,433.3 257.8,430.8 259.1,431.6 260.5,429.6 261.8,424.6 263.1,426.7 264.5,444.9 265.8,438 267.2,446.1 268.5,438.4 269.9,443 271.2,438 272.6,443.1 273.9,435.8 275.3,451.6 276.6,475.7 278,476.1 279.3,441.7 280.7,424.1 282,431.3 283.4,432.2 284.7,436.1 286.1,440.3 287.4,433.9 288.8,437.7 290.1,447.4 291.5,444.3 292.8,436.9 294.2,434.5 295.5,433.2 296.9,430.4 298.2,429.5 299.6,430.1 300.9,432.1 302.2,430.5 303.6,431.9 304.9,432.1 306.3,430 307.6,430.8 309,436.4 310.3,431.9 311.7,429 313,436 314.4,433.1 315.7,430.3 317.1,428.5 318.4,434.9 319.8,433.9 321.1,434.3 322.5,428.7 323.8,427.2 325.2,427.1 326.5,429.9 327.9,428.4 329.2,432.8 330.6,429.8 331.9,431.9 333.3,428.9 334.6,435.1 336,432.2 337.3,429.1 338.7,428.7 340,432.2 341.3,435 342.7,432.2 344,432.1 345.4,436.3 346.7,431.2 348.1,430.3 349.4,434.2 350.8,431.4 352.1,434.6 353.5,431.4 354.8,430.4 356.2,432.3 357.5,438.3 358.9,434.1 360.2,434.9 361.6,432.1 362.9,433.3 364.3,427.7 365.6,435.6 367,427.9 368.3,432.4 369.7,431.5 371,432 372.4,433.2 373.7,433.7 375.1,436.8 376.4,433.8 377.8,434.8 379.1,435.4 380.5,433.7 381.8,433.4 383.1,433.7 384.5,432.1 385.8,432.1 387.2,431.1 388.5,430.7 389.9,429.7 391.2,424.9 392.6,431 393.9,436.6 395.3,438.3 396.6,435.2 398,433.6 399.3,426.3 400.7,428 402,427 403.4,431.1 404.7,427.1 406.1,424 407.4,425.9 408.8,425.3 410.1,426.2 411.5,429.3 412.8,429.1 414.2,431.8 415.5,431.2 416.9,431.5 418.2,428.8 419.6,426.5 420.9,423.1 422.2,424.7 423.6,429.4 424.9,432.1 426.3,431.3 427.6,432.6 429,433.3 430.3,431.2 431.7,429.9 433,430.7 434.4,430.9 435.7,428.3 437.1,427.4 438.4,427 439.8,431.9 441.1,429 442.5,419.5 443.8,424.1 445.2,425.6 446.5,427.2 447.9,430 449.2,429.3 450.6,433.4 451.9,430.7 453.3,426.8 454.6,427.2 456,432.6 457.3,431.3 458.7,435.3 460,434 461.3,437.3 462.7,437.1 464,433.9 465.4,430.7 466.7,430 468.1,430.8 469.4,429.6 470.8,433 472.1,426.7 473.5,427.7 474.8,428.9 476.2,429.5 477.5,432.6 478.9,433.3 480.2,431 481.6,432.1 482.9,429.6 484.3,430.4 485.6,429 487,428.2 488.3,424.9 489.7,428.8 491,427.5 492.4,431.4 493.7,430.7 495.1,431.2 496.4,429.5 497.8,427.4 499.1,431.2 500.4,426.8 501.8,426.8 503.1,428.9 504.5,426.9 505.8,425.8 507.2,429 508.5,429.6 509.9,430.1 511.2,428 512.6,427.7 513.9,430.3 515.3,438.4 516.6,431.8 518,428.4 519.3,430.6 520.7,431.1 522,428 523.4,425.7 524.7,430.1 526.1,428.1 527.4,430.5 528.8,429.9 530.1,427.6 531.5,427.9 532.8,428.8 534.2,429.5 535.5,429.7 536.9,427.8 538.2,427.5 539.6,428.5 540.9,429.7 542.2,430.7 543.6,430.6 544.9,435.4 546.3,433.1 547.6,427.9 549,429.5 550.3,427.7 551.7,425.4 553,427.5 554.4,426.4 555.7,427.2 557.1,426.1 558.4,428.1 559.8,424.7 561.1,426.4 562.5,430.3 563.8,427.7 565.2,426.4 566.5,432 567.9,431.3 569.2,430.6 570.6,427.2 571.9,426.7 573.3,428.5 574.6,430.4 576,432.3 577.3,432.2 578.7,429.6 580,426.3 581.3,427.6 582.7,428.7 584,428.1 585.4,427.2 586.7,428.5 588.1,432.5 589.4,434.7 590.8,432.2 592.1,435.1 593.5,432.1 594.8,432.4 596.2,430.8 597.5,429 598.9,437.3 600.2,432.2 601.6,428.6 602.9,433.3 604.3,433.3 605.6,430.8 607,431.7 608.3,429.6 609.7,428.2 611,436.3 612.4,430.3 613.7,427.6 615.1,429.6 616.4,433.2 617.8,429.4 619.1,433.5 620.4,434.3 621.8,430.5 623.1,433.4 624.5,428.6 625.8,434.1 627.2,429.9 628.5,432.5 629.9,431 631.2,429.7 632.6,430 633.9,436.7 635.3,431.2 636.6,429.2 638,427.3 639.3,429.3 640.7,432.5 642,430 643.4,431.9 644.7,427.9 646.1,425.8 647.4,425.2 648.8,426.7 650.1,430.1 651.5,427.4 652.8,425.6 654.2,425.6 655.5,425.7 656.9,425.5 658.2,430.4 659.5,431.6 660.9,433.6 662.2,432.6 663.6,429 664.9,430.6 666.3,429.2 667.6,427.4 669,429 670.3,430.8 671.7,432.7 673,431.9 674.4,430.2 675.7,430.1 677.1,429.7 678.4,432.7 679.8,431 681.1,432.1 682.5,431.6 683.8,432.6 685.2,432.8 686.5,434.8 687.9,444.5 689.2,446.7 690.6,448.4 691.9,447.5 693.3,448.3 694.6,439.2 696,434.5 697.3,429.8 698.7,424.3 700,423 701.3,421.7 702.7,415.8 704,413.6 705.4,420.2 706.7,419.5 708.1,418.3 709.4,423.2 710.8,426.3 712.1,429.8 713.5,432.6 714.8,433.5 716.2,431.8 717.5,430.6 718.9,431.5 720.2,427.9 721.6,430.4 722.9,431.5 724.3,434.5 725.6,435.4 727,430.7 728.3,431.6 729.7,434.3 731,433.6 732.4,432.3 733.7,425.3 735.1,429.3 736.4,432.5 737.8,437.6 739.1,434.3 740.4,434 741.8,433.2 743.1,429.7 744.5,430.2 745.8,435.4 747.2,431.2 748.5,435.6 749.9,429.9 751.2,439.2 752.6,432.4 753.9,430.8 755.3,427.6 756.6,427.9 758,429.2 759.3,430.6 760.7,435.8 762,432.2 763.4,436.3 764.7,434.4 766.1,429.7 767.4,432.9 768.8,430.1 770.1,428.3 771.5,433 772.8,432.6 774.2,434.6 775.5,434 776.9,437.9 778.2,431.1 779.5,430 780.9,430.9 782.2,434.3 783.6,428.6 784.9,434.8 786.3,432.1 787.6,433.8 789,435.2 790.3,431.5 791.7,436.1 793,432.1 794.4,433.1 795.7,430.9 797.1,429 798.4,430.8 799.8,431.7 801.1,432.7 802.5,432.1 803.8,435.9 805.2,433.9 806.5,435.2 807.9,436.6 809.2,434.1 810.6,430.2 811.9,430.1 813.3,431.7 814.6,431.5 816,433.6 817.3,432.8 818.6,431.8 820,434.1 821.3,426.9 822.7,432.2 824,440.7 825.4,433.4 826.7,433.4 828.1,431.9 829.4,433 830.8,428 832.1,430.2 833.5,429.3 834.8,432.7 836.2,433.5 837.5,435.1 838.9,435.4 840.2,433.1 841.6,432.2 842.9,431.8 844.3,432.7 845.6,435.1 847,434.9 848.3,434.8 849.7,438.2 851,437.1 852.4,438.3 853.7,436.3 855.1,437.3 856.4,434.7 857.8,440.7 859.1,436.4 860.4,434.5 861.8,426.8 863.1,432.5 864.5,431.9 865.8,430.5 867.2,435.8 868.5,437.1 869.9,433.5 871.2,433.5 872.6,432.8 873.9,429.9 875.3,435.5 876.6,438 878,436.9 879.3,437.6 880.7,436 882,433.4 883.4,428.5 884.7,432.3 886.1,435.3 887.4,436.8 888.8,435.6 890.1,436.7 891.5,434.6 892.8,432.6 894.2,429.9 895.5,433.2 896.9,434.2 898.2,432.5 899.5,432 900.9,434.1 902.2,438.2 903.6,436.9 904.9,437.4 906.3,437.1 907.6,435 909,432 910.3,433.7 911.7,438.5 913,435.8 914.4,436 915.7,432.8 917.1,432.6 918.4,432.3 919.8,434.2 921.1,435.6 922.5,432.7 923.8,436.8 925.2,446.5 926.5,455.8 927.9,455.5 929.2,454.8 930.6,442.9 931.9,443.5 933.3,441.9 934.6,436.7 936,435.8 937.3,434 937.3,467.4 936,469.5 934.6,468.9 933.3,471 931.9,470.9 930.6,472.2 929.2,478.2 927.9,478.5 926.5,477.1 925.2,473.6 923.8,471.7 922.5,471.1 921.1,470.4 919.8,468.7 918.4,468.4 917.1,469.2 915.7,469.6 914.4,472 913,468 911.7,468.8 910.3,469.2 909,469.2 907.6,468.4 906.3,467.1 904.9,468.5 903.6,469.2 902.2,469.3 900.9,470.1 899.5,469.9 898.2,468.1 896.9,468.9 895.5,469.3 894.2,469.2 892.8,469.1 891.5,469.8 890.1,469.4 888.8,467.4 887.4,466.6 886.1,467.9 884.7,468.5 883.4,466.6 882,466.8 880.7,467.1 879.3,466.7 878,467.4 876.6,466.5 875.3,470.2 873.9,469.5 872.6,469.9 871.2,470.6 869.9,468.8 868.5,469 867.2,468.3 865.8,468.6 864.5,468.4 863.1,468.2 861.8,467.2 860.4,468.5 859.1,468.9 857.8,470.9 856.4,469.5 855.1,471.8 853.7,470.8 852.4,470.5 851,469.8 849.7,469.2 848.3,471.8 847,469 845.6,468.9 844.3,468.3 842.9,467.5 841.6,469.5 840.2,470.1 838.9,471 837.5,471.3 836.2,469.6 834.8,468.7 833.5,469.3 832.1,470.1 830.8,468.6 829.4,467.8 828.1,466.1 826.7,467.4 825.4,466.6 824,469.2 822.7,468 821.3,467 820,468 818.6,467.8 817.3,468.5 816,468 814.6,468.6 813.3,467.8 811.9,469.9 810.6,468.9 809.2,469.6 807.9,471.1 806.5,470.3 805.2,468.6 803.8,467.3 802.5,466.9 801.1,468.1 799.8,468.3 798.4,469.2 797.1,468.7 795.7,468.7 794.4,468.9 793,470.9 791.7,469.7 790.3,469.1 789,469.8 787.6,466.3 786.3,467.3 784.9,468.8 783.6,467.9 782.2,467.7 780.9,468.3 779.5,469.9 778.2,470 776.9,471.1 775.5,469.3 774.2,470.1 772.8,467.8 771.5,472.2 770.1,467.6 768.8,468.7 767.4,468.5 766.1,468.3 764.7,469.5 763.4,471.2 762,468.7 760.7,467.4 759.3,467.6 758,467.4 756.6,468.2 755.3,466.7 753.9,465.2 752.6,468.1 751.2,470.7 749.9,466.2 748.5,469.1 747.2,470.3 745.8,470.6 744.5,468.9 743.1,469.2 741.8,468 740.4,468.5 739.1,469.4 737.8,470.2 736.4,469.5 735.1,467 733.7,464.8 732.4,468.1 731,469.7 729.7,469.8 728.3,467.7 727,467.5 725.6,469 724.3,468.8 722.9,465.4 721.6,464.9 720.2,465.9 718.9,466.7 717.5,465.8 716.2,469 714.8,468.8 713.5,468.4 712.1,466 710.8,466.8 709.4,465.2 708.1,462.8 706.7,461.1 705.4,463.9 704,461 702.7,461.6 701.3,463 700,465 698.7,466.2 697.3,468.7 696,469.9 694.6,473.3 693.3,474.8 691.9,475.4 690.6,474.5 689.2,472.5 687.9,473.8 686.5,471 685.2,470.7 683.8,469.8 682.5,469.3 681.1,469.6 679.8,469.3 678.4,469.6 677.1,467.4 675.7,467.4 674.4,466.8 673,468.2 671.7,470 670.3,470.8 669,468.4 667.6,468.1 666.3,468.4 664.9,468.3 663.6,468.4 662.2,468.7 660.9,469.6 659.5,470.2 658.2,470.5 656.9,469.9 655.5,466.9 654.2,466.1 652.8,464.7 651.5,466.8 650.1,467.2 648.8,465.5 647.4,468 646.1,466.7 644.7,467.8 643.4,467.3 642,468.6 640.7,469 639.3,469.5 638,466.6 636.6,466.8 635.3,467.3 633.9,470.9 632.6,467.5 631.2,467.7 629.9,468.2 628.5,469.3 627.2,467.7 625.8,468.5 624.5,468.1 623.1,470.1 621.8,468.6 620.4,468.2 619.1,468.1 617.8,468.7 616.4,469.9 615.1,466.6 613.7,466.4 612.4,467.1 611,470.1 609.7,466.8 608.3,467.8 607,466.8 605.6,467.5 604.3,466.9 602.9,466.5 601.6,466.2 600.2,467.7 598.9,469.1 597.5,465.8 596.2,467.1 594.8,466.3 593.5,468.8 592.1,468.5 590.8,468.1 589.4,468.6 588.1,467.6 586.7,468.1 585.4,466.2 584,467 582.7,467.8 581.3,466.5 580,465.6 578.7,467 577.3,468.1 576,468.2 574.6,465.9 573.3,467.1 571.9,466.9 570.6,467 569.2,467.9 567.9,467 566.5,468.8 565.2,467.1 563.8,465.5 562.5,466 561.1,465.9 559.8,463.7 558.4,465.6 557.1,464.9 555.7,466.3 554.4,466.4 553,465.5 551.7,465.4 550.3,467.1 549,466.7 547.6,466.4 546.3,468.8 544.9,471.1 543.6,466.2 542.2,467.2 540.9,466.9 539.6,466.3 538.2,464.8 536.9,468.2 535.5,467.6 534.2,468 532.8,466 531.5,465.4 530.1,467.4 528.8,467.8 527.4,469.1 526.1,466.6 524.7,463.8 523.4,465.2 522,467 520.7,467.7 519.3,465.2 518,465.4 516.6,469.4 515.3,467.7 513.9,469.4 512.6,465.6 511.2,466.6 509.9,469 508.5,469.1 507.2,466.7 505.8,467.7 504.5,467.7 503.1,466.1 501.8,467.1 500.4,468 499.1,467.7 497.8,465.6 496.4,466.8 495.1,468.3 493.7,467.3 492.4,468 491,465.9 489.7,465.4 488.3,465.6 487,466.7 485.6,467.5 484.3,466.3 482.9,467.5 481.6,468 480.2,467.7 478.9,469.1 477.5,471.4 476.2,469.4 474.8,470.2 473.5,466.7 472.1,465.4 470.8,465.9 469.4,465.5 468.1,467.3 466.7,465.3 465.4,467.3 464,468.4 462.7,470.5 461.3,470.5 460,468.8 458.7,468.7 457.3,467.3 456,468.2 454.6,467.2 453.3,465.8 451.9,468.1 450.6,470 449.2,468.3 447.9,468.2 446.5,468.2 445.2,467.5 443.8,467.9 442.5,465.3 441.1,468.4 439.8,470 438.4,464.2 437.1,466.4 435.7,467.7 434.4,469.3 433,469.2 431.7,467.8 430.3,467 429,466.3 427.6,465.6 426.3,468 424.9,468.9 423.6,468.4 422.2,466.6 420.9,467.7 419.6,465.4 418.2,466.8 416.9,467.1 415.5,467.8 414.2,468.4 412.8,468.9 411.5,466.5 410.1,464.7 408.8,465.5 407.4,469.8 406.1,471.2 404.7,465.7 403.4,466.9 402,466 400.7,468.2 399.3,466.2 398,468.3 396.6,469.2 395.3,468.5 393.9,468.7 392.6,469.2 391.2,466.7 389.9,465.2 388.5,466.5 387.2,468.1 385.8,467.7 384.5,466.6 383.1,468 381.8,471.3 380.5,468.6 379.1,467.9 377.8,468.1 376.4,468.4 375.1,468.7 373.7,467.7 372.4,468.4 371,466.9 369.7,465.9 368.3,466.8 367,466.4 365.6,468.4 364.3,463.7 362.9,465.4 361.6,467.2 360.2,468 358.9,467.6 357.5,469.8 356.2,469.1 354.8,468.4 353.5,468.9 352.1,468 350.8,468.2 349.4,469.2 348.1,469 346.7,469.4 345.4,469 344,467.9 342.7,467.2 341.3,468.2 340,467.8 338.7,466.6 337.3,464.5 336,468.8 334.6,468.6 333.3,467.7 331.9,467.5 330.6,466.3 329.2,468.8 327.9,469.1 326.5,469.9 325.2,469.2 323.8,467.1 322.5,468 321.1,466.5 319.8,465.3 318.4,466.9 317.1,465.6 315.7,469.1 314.4,468.4 313,470 311.7,468.4 310.3,469.9 309,472.2 307.6,469.3 306.3,468.3 304.9,467.2 303.6,466.9 302.2,467.3 300.9,468.2 299.6,466.3 298.2,467.1 296.9,467.9 295.5,467.9 294.2,469.2 292.8,468.7 291.5,472 290.1,469.5 288.8,474.8 287.4,469 286.1,474.2 284.7,467.8 283.4,470.1 282,466.9 280.7,469.8 279.3,471.3 278,504.4 276.6,496.6 275.3,486.1 273.9,468 272.6,481.4 271.2,469.1 269.9,481.9 268.5,470.2 267.2,486 265.8,468.7 264.5,480.5 263.1,468.6 261.8,467.6 260.5,468.9 259.1,468.7 257.8,467.3 256.4,468 255.1,468 253.7,466 252.4,465 251,468.3 249.7,466 248.3,466.7 247,467.5 245.6,467.5 244.3,467.3 242.9,470.1 241.6,467 240.2,469.8 238.9,469.5 237.5,468 236.2,467.4 234.8,468.2 233.5,472.2 232.1,471.6 230.8,468 229.4,468.4 228.1,469.8 226.7,467.7 225.4,468.5 224,469.2 222.7,468.7 221.4,469.9 220,467.3 218.7,468.8 217.3,470 216,469.4 214.6,466.9 213.3,468.4 211.9,469.3 210.6,467.8 209.2,469.3 207.9,468.2 206.5,468.3 205.2,467.3 203.8,468.6 202.5,469.9 201.1,467.7 199.8,468.2 198.4,467.4 197.1,468.3 195.7,471.2 194.4,470.3 193,468.5 191.7,468.1 190.3,466.9 189,466.9 187.6,467.9 186.3,466.9 184.9,467.9 183.6,469.4 182.2,468.5 180.9,467.3 179.6,470.2 178.2,469.4 176.9,479.9 175.5,503.5 174.2,476.4 172.8,483.1 171.5,468.5 170.1,482.8 168.8,468.1 167.4,483.8 166.1,469.4 164.7,484.4 163.4,467.9 162,483.2 160.7,467.5 159.3,470.5 158,468.6 156.6,469.2 155.3,468.6 153.9,472.4 152.6,472.1 151.2,470.7 149.9,468.7 148.5,470.4 147.2,469.4 145.8,469.6 144.5,468.6 143.1,467.2 141.8,467.2 140.5,466.5 139.1,468 137.8,470.3 136.4,469.1 135.1,467.9 133.7,466.8 132.4,468.3 131,468.5 129.7,469.7 128.3,469.6 127,468.8 125.6,468.4 124.3,468.1 122.9,466.6 121.6,467.4 120.2,467.7 118.9,468 117.5,468.6 116.2,468.9 114.8,471 113.5,470.2 112.1,467.9 110.8,470 109.4,467.6 108.1,467.3 106.7,468.9 105.4,469.2 104,467.8 102.7,468.6" fill="#6478a6"/>
<polygon points="102.7,386 104,384.2 105.4,387.6 106.7,391.6 108.1,391.6 109.4,393.5 110.8,383.4 112.1,391 113.5,386.8 114.8,392.5 116.2,397.2 117.5,394.8 118.9,398.1 120.2,400.4 121.6,403.6 122.9,398.8 124.3,397.9 125.6,396.7 127,400.9 128.3,401.3 129.7,400.6 131,393.1 132.4,397.5 133.7,394.8 135.1,399 136.4,403 137.8,407.8 139.1,400.2 140.5,386.1 141.8,394.1 143.1,400.2 144.5,399.7 145.8,397.8 147.2,407.7 148.5,407.2 149.9,413.2 151.2,412.7 152.6,415.5 153.9,405.5 155.3,403.4 156.6,399.9 158,410 159.3,402 160.7,416.4 162,460.6 163.4,438 164.7,432.7 166.1,413.9 167.4,429.2 168.8,408.1 170.1,428.2 171.5,405.3 172.8,418.5 174.2,423.2 175.5,471.3 176.9,439.5 178.2,412.6 179.6,406.6 180.9,400.3 182.2,402.6 183.6,391.9 184.9,392 186.3,399 187.6,398.3 189,399.9 190.3,402 191.7,395.7 193,403.6 194.4,404.9 195.7,396.5 197.1,402.7 198.4,407.6 199.8,396.5 201.1,395.6 202.5,398.5 203.8,397.8 205.2,400.1 206.5,396.1 207.9,399 209.2,401 210.6,399.3 211.9,399 213.3,399.4 214.6,400.1 216,397.5 217.3,397 218.7,399.5 220,396.4 221.4,398.5 222.7,399.7 224,401.7 225.4,399.1 226.7,399.3 228.1,400.7 229.4,398.2 230.8,397 232.1,401.2 233.5,401.4 234.8,393.7 236.2,399.6 237.5,400.1 238.9,400.2 240.2,398.1 241.6,398.2 242.9,400.6 244.3,394.2 245.6,395 247,399.8 248.3,395.9 249.7,399.8 251,399.3 252.4,392.1 253.7,395.1 255.1,392.9 256.4,394.6 257.8,394.5 259.1,392.6 260.5,397.1 261.8,389.5 263.1,393.5 264.5,421 265.8,403.7 267.2,426.3 268.5,403.5 269.9,417.9 271.2,403.8 272.6,417.9 273.9,396 275.3,433.3 276.6,465.5 278,476.1 279.3,415.8 280.7,399.9 282,394.2 283.4,401.1 284.7,403.1 286.1,416.2 287.4,398.4 288.8,418.5 290.1,431.3 291.5,441.9 292.8,411.7 294.2,397.7 295.5,393 296.9,395.1 298.2,391.8 299.6,392.4 300.9,389.2 302.2,392.7 303.6,392.4 304.9,390.8 306.3,391.2 307.6,394.5 309,399.9 310.3,397.4 311.7,391.4 313,400.1 314.4,394.7 315.7,391.2 317.1,388.1 318.4,394.7 319.8,398.9 321.1,394.8 322.5,392 323.8,382.2 325.2,396.9 326.5,399.4 327.9,392.5 329.2,399.5 330.6,392.4 331.9,395.6 333.3,391.1 334.6,399.2 336,396.2 337.3,393.5 338.7,388.9 340,396.3 341.3,400.3 342.7,397.3 344,399.8 345.4,397.9 346.7,389.8 348.1,397.2 349.4,400.1 350.8,394.8 352.1,401.1 353.5,395 354.8,397.6 356.2,399.9 357.5,402.3 358.9,400.7 360.2,396.9 361.6,396.4 362.9,399.2 364.3,389.4 365.6,396.4 367,391 368.3,396 369.7,397.2 371,399.6 372.4,398.9 373.7,394.9 375.1,400.1 376.4,399.4 377.8,398.7 379.1,400.1 380.5,397 381.8,394.3 383.1,397 384.5,395.1 385.8,396.1 387.2,396.9 388.5,394.2 389.9,395.6 391.2,387.7 392.6,395.1 393.9,403 395.3,403 396.6,402.2 398,398.8 399.3,386.9 400.7,389.9 402,388.5 403.4,396.2 404.7,393.9 406.1,387.4 407.4,391.4 408.8,397.5 410.1,392.1 411.5,398 412.8,390 414.2,387.6 415.5,388 416.9,391.1 418.2,387 419.6,386.6 420.9,380.3 422.2,385.8 423.6,397.6 424.9,396.3 426.3,392.6 427.6,397.6 429,395 430.3,393.1 431.7,391.3 433,402 434.4,399.1 435.7,396.5 437.1,393.8 438.4,388.7 439.8,394.7 441.1,392.2 442.5,384.1 443.8,386.9 445.2,390.5 446.5,392.5 447.9,393.2 449.2,390.7 450.6,392.2 451.9,387.9 453.3,383.5 454.6,387.5 456,393.7 457.3,389.9 458.7,399.7 460,401.2 461.3,409.2 462.7,404 464,401 465.4,396.9 466.7,393.3 468.1,395 469.4,392.3 470.8,392.1 472.1,384.7 473.5,383.8 474.8,386.4 476.2,386.4 477.5,390.6 478.9,393.6 480.2,393.8 481.6,394.9 482.9,395.7 484.3,392.4 485.6,386.9 487,384.8 488.3,387.4 489.7,391.6 491,398.2 492.4,396.5 493.7,397.8 495.1,397.3 496.4,392.6 497.8,394.4 499.1,396.1 500.4,379.2 501.8,385.9 503.1,387.4 504.5,374.8 505.8,372.1 507.2,388.1 508.5,384.1 509.9,388.7 511.2,390.6 512.6,391.4 513.9,390.5 515.3,399.5 516.6,393.4 518,391 519.3,390.9 520.7,391.4 522,387.7 523.4,389.8 524.7,389.4 526.1,390.7 527.4,391.7 528.8,389.5 530.1,387.2 531.5,388.2 532.8,393.5 534.2,392.4 535.5,398.4 536.9,389.6 538.2,387.2 539.6,389.3 540.9,389.4 542.2,397.5 543.6,392.2 544.9,399.9 546.3,391.9 547.6,382.5 549,388.4 550.3,386.9 551.7,385.3 553,387.3 554.4,385.7 555.7,387.7 557.1,385.3 558.4,388.2 559.8,388.9 561.1,385.5 562.5,393.6 563.8,393.7 565.2,397.9 566.5,396.3 567.9,397 569.2,394.1 570.6,392.2 571.9,388.5 573.3,393.8 574.6,392.3 576,399.4 577.3,402.2 578.7,395.6 580,389.2 581.3,391.8 582.7,390.6 584,387.2 585.4,384.8 586.7,391.2 588.1,393.8 589.4,401 590.8,399.7 592.1,401.4 593.5,397.6 594.8,394.6 596.2,387.8 597.5,390.9 598.9,399.7 600.2,399.7 601.6,395.6 602.9,398.6 604.3,399.2 605.6,392.5 607,395.5 608.3,394.1 609.7,391.9 611,397.7 612.4,390 613.7,393.9 615.1,395.5 616.4,391.8 617.8,386.1 619.1,398.3 620.4,397.3 621.8,389.6 623.1,397.9 624.5,398.5 625.8,399.7 627.2,394.6 628.5,398.3 629.9,393 631.2,392.5 632.6,390.4 633.9,397.8 635.3,394.9 636.6,386.8 638,387.3 639.3,392.5 640.7,393.6 642,394.3 643.4,396.8 644.7,385.1 646.1,386.1 647.4,384.3 648.8,389.5 650.1,399.1 651.5,396.1 652.8,390.2 654.2,389.6 655.5,383.3 656.9,383.1 658.2,388.8 659.5,393.2 660.9,401.4 662.2,399.7 663.6,392.9 664.9,394.6 666.3,394.8 667.6,396.4 669,393.5 670.3,396.6 671.7,394.3 673,396.1 674.4,396.8 675.7,392 677.1,391.4 678.4,398 679.8,397 681.1,398.2 682.5,395.1 683.8,396.4 685.2,399.4 686.5,407.9 687.9,411.7 689.2,418.7 690.6,425.5 691.9,419.1 693.3,415 694.6,405.2 696,403.8 697.3,391.9 698.7,389.5 700,389.8 701.3,382.6 702.7,377.3 704,374.2 705.4,377.2 706.7,375.9 708.1,372.5 709.4,384.9 710.8,393.4 712.1,391.7 713.5,394.2 714.8,397.9 716.2,398.5 717.5,396 718.9,390.7 720.2,387.6 721.6,389.4 722.9,388.9 724.3,399.3 725.6,402.6 727,399.8 728.3,398.2 729.7,407.2 731,398.6 732.4,397.7 733.7,387.9 735.1,393.2 736.4,395.7 737.8,398.3 739.1,404.2 740.4,400 741.8,394.6 743.1,392 744.5,395.2 745.8,393.7 747.2,392.7 748.5,395.3 749.9,389 751.2,401.9 752.6,393.7 753.9,389.5 755.3,384.6 756.6,390 758,394.1 759.3,395.9 760.7,398 762,401.9 763.4,399.7 764.7,396.9 766.1,395 767.4,401.2 768.8,394.6 770.1,390.1 771.5,396.6 772.8,399.7 774.2,400.3 775.5,400.4 776.9,405 778.2,403.1 779.5,393.2 780.9,393.5 782.2,396 783.6,395.2 784.9,403.4 786.3,399.2 787.6,399.8 789,399.2 790.3,396.3 791.7,400.3 793,399.2 794.4,394.1 795.7,395.2 797.1,393.3 798.4,389.4 799.8,398.5 801.1,398 802.5,394.2 803.8,398 805.2,398.2 806.5,404.1 807.9,403.2 809.2,397.1 810.6,395.9 811.9,391.8 813.3,391.7 814.6,396.3 816,395.4 817.3,396.1 818.6,396.1 820,397.7 821.3,392 822.7,400.2 824,405.3 825.4,394.2 826.7,399 828.1,395.8 829.4,398.7 830.8,388.8 832.1,393.8 833.5,394.7 834.8,398.5 836.2,400 837.5,399.9 838.9,393.9 840.2,393.3 841.6,389.2 842.9,398.3 844.3,397.8 845.6,399.5 847,395.5 848.3,398.9 849.7,401.1 851,398.5 852.4,393.1 853.7,401.3 855.1,405.9 856.4,400.9 857.8,405.3 859.1,400.7 860.4,399.5 861.8,393.1 863.1,399 864.5,401.5 865.8,397.9 867.2,402.3 868.5,400.9 869.9,397.1 871.2,396.1 872.6,395.8 873.9,397.5 875.3,401.3 876.6,402.6 878,401.4 879.3,401.7 880.7,398.1 882,399 883.4,394.5 884.7,391.8 886.1,398.2 887.4,400.5 888.8,402.6 890.1,402.4 891.5,397.7 892.8,394.6 894.2,392.3 895.5,393.3 896.9,399.3 898.2,397.5 899.5,399.1 900.9,398 902.2,402.6 903.6,403.8 904.9,399.2 906.3,400.1 907.6,402.5 909,399.3 910.3,396.1 911.7,401.2 913,400.4 914.4,406.9 915.7,401.4 917.1,399.8 918.4,404.5 919.8,398.8 921.1,403.9 922.5,397.5 923.8,407.3 925.2,418.6 926.5,432.5 927.9,430.6 929.2,427.7 930.6,415 931.9,413.8 933.3,407.8 934.6,397.4 936,398.5 937.3,397.7 937.3,434 936,435.8 934.6,436.7 933.3,441.9 931.9,443.5 930.6,442.9 929.2,454.8 927.9,455.5 926.5,455.8 925.2,446.5 923.8,436.8 922.5,432.7 921.1,435.6 919.8,434.2 918.4,432.3 917.1,432.6 915.7,432.8 914.4,436 913,435.8 911.7,438.5 910.3,433.7 909,432 907.6,435 906.3,437.1 904.9,437.4 903.6,436.9 902.2,438.2 900.9,434.1 899.5,432 898.2,432.5 896.9,434.2 895.5,433.2 894.2,429.9 892.8,432.6 891.5,434.6 890.1,436.7 888.8,435.6 887.4,436.8 886.1,435.3 884.7,432.3 883.4,428.5 882,433.4 880.7,436 879.3,437.6 878,436.9 876.6,438 875.3,435.5 873.9,429.9 872.6,432.8 871.2,433.5 869.9,433.5 868.5,437.1 867.2,435.8 865.8,430.5 864.5,431.9 863.1,432.5 861.8,426.8 860.4,434.5 859.1,436.4 857.8,440.7 856.4,434.7 855.1,437.3 853.7,436.3 852.4,438.3 851,437.1 849.7,438.2 848.3,434.8 847,434.9 845.6,435.1 844.3,432.7 842.9,431.8 841.6,432.2 840.2,433.1 838.9,435.4 837.5,435.1 836.2,433.5 834.8,432.7 833.5,429.3 832.1,430.2 830.8,428 829.4,433 828.1,431.9 826.7,433.4 825.4,433.4 824,440.7 822.7,432.2 821.3,426.9 820,434.1 818.6,431.8 817.3,432.8 816,433.6 814.6,431.5 813.3,431.7 811.9,430.1 810.6,430.2 809.2,434.1 807.9,436.6 806.5,435.2 805.2,433.9 803.8,435.9 802.5,432.1 801.1,432.7 799.8,431.7 798.4,430.8 797.1,429 795.7,430.9 794.4,433.1 793,432.1 791.7,436.1 790.3,431.5 789,435.2 787.6,433.8 786.3,432.1 784.9,434.8 783.6,428.6 782.2,434.3 780.9,430.9 779.5,430 778.2,431.1 776.9,437.9 775.5,434 774.2,434.6 772.8,432.6 771.5,433 770.1,428.3 768.8,430.1 767.4,432.9 766.1,429.7 764.7,434.4 763.4,436.3 762,432.2 760.7,435.8 759.3,430.6 758,429.2 756.6,427.9 755.3,427.6 753.9,430.8 752.6,432.4 751.2,439.2 749.9,429.9 748.5,435.6 747.2,431.2 745.8,435.4 744.5,430.2 743.1,429.7 741.8,433.2 740.4,434 739.1,434.3 737.8,437.6 736.4,432.5 735.1,429.3 733.7,425.3 732.4,432.3 731,433.6 729.7,434.3 728.3,431.6 727,430.7 725.6,435.4 724.3,434.5 722.9,431.5 721.6,430.4 720.2,427.9 718.9,431.5 717.5,430.6 716.2,431.8 714.8,433.5 713.5,432.6 712.1,429.8 710.8,426.3 709.4,423.2 708.1,418.3 706.7,419.5 705.4,420.2 704,413.6 702.7,415.8 701.3,421.7 700,423 698.7,424.3 697.3,429.8 696,434.5 694.6,439.2 693.3,448.3 691.9,447.5 690.6,448.4 689.2,446.7 687.9,444.5 686.5,434.8 685.2,432.8 683.8,432.6 682.5,431.6 681.1,432.1 679.8,431 678.4,432.7 677.1,429.7 675.7,430.1 674.4,430.2 673,431.9 671.7,432.7 670.3,430.8 669,429 667.6,427.4 666.3,429.2 664.9,430.6 663.6,429 662.2,432.6 660.9,433.6 659.5,431.6 658.2,430.4 656.9,425.5 655.5,425.7 654.2,425.6 652.8,425.6 651.5,427.4 650.1,430.1 648.8,426.7 647.4,425.2 646.1,425.8 644.7,427.9 643.4,431.9 642,430 640.7,432.5 639.3,429.3 638,427.3 636.6,429.2 635.3,431.2 633.9,436.7 632.6,430 631.2,429.7 629.9,431 628.5,432.5 627.2,429.9 625.8,434.1 624.5,428.6 623.1,433.4 621.8,430.5 620.4,434.3 619.1,433.5 617.8,429.4 616.4,433.2 615.1,429.6 613.7,427.6 612.4,430.3 611,436.3 609.7,428.2 608.3,429.6 607,431.7 605.6,430.8 604.3,433.3 602.9,433.3 601.6,428.6 600.2,432.2 598.9,437.3 597.5,429 596.2,430.8 594.8,432.4 593.5,432.1 592.1,435.1 590.8,432.2 589.4,434.7 588.1,432.5 586.7,428.5 585.4,427.2 584,428.1 582.7,428.7 581.3,427.6 580,426.3 578.7,429.6 577.3,432.2 576,432.3 574.6,430.4 573.3,428.5 571.9,426.7 570.6,427.2 569.2,430.6 567.9,431.3 566.5,432 565.2,426.4 563.8,427.7 562.5,430.3 561.1,426.4 559.8,424.7 558.4,428.1 557.1,426.1 555.7,427.2 554.4,426.4 553,427.5 551.7,425.4 550.3,427.7 549,429.5 547.6,427.9 546.3,433.1 544.9,435.4 543.6,430.6 542.2,430.7 540.9,429.7 539.6,428.5 538.2,427.5 536.9,427.8 535.5,429.7 534.2,429.5 532.8,428.8 531.5,427.9 530.1,427.6 528.8,429.9 527.4,430.5 526.1,428.1 524.7,430.1 523.4,425.7 522,428 520.7,431.1 519.3,430.6 518,428.4 516.6,431.8 515.3,438.4 513.9,430.3 512.6,427.7 511.2,428 509.9,430.1 508.5,429.6 507.2,429 505.8,425.8 504.5,426.9 503.1,428.9 501.8,426.8 500.4,426.8 499.1,431.2 497.8,427.4 496.4,429.5 495.1,431.2 493.7,430.7 492.4,431.4 491,427.5 489.7,428.8 488.3,424.9 487,428.2 485.6,429 484.3,430.4 482.9,429.6 481.6,432.1 480.2,431 478.9,433.3 477.5,432.6 476.2,429.5 474.8,428.9 473.5,427.7 472.1,426.7 470.8,433 469.4,429.6 468.1,430.8 466.7,430 465.4,430.7 464,433.9 462.7,437.1 461.3,437.3 460,434 458.7,435.3 457.3,431.3 456,432.6 454.6,427.2 453.3,426.8 451.9,430.7 450.6,433.4 449.2,429.3 447.9,430 446.5,427.2 445.2,425.6 443.8,424.1 442.5,419.5 441.1,429 439.8,431.9 438.4,427 437.1,427.4 435.7,428.3 434.4,430.9 433,430.7 431.7,429.9 430.3,431.2 429,433.3 427.6,432.6 426.3,431.3 424.9,432.1 423.6,429.4 422.2,424.7 420.9,423.1 419.6,426.5 418.2,428.8 416.9,431.5 415.5,431.2 414.2,431.8 412.8,429.1 411.5,429.3 410.1,426.2 408.8,425.3 407.4,425.9 406.1,424 404.7,427.1 403.4,431.1 402,427 400.7,428 399.3,426.3 398,433.6 396.6,435.2 395.3,438.3 393.9,436.6 392.6,431 391.2,424.9 389.9,429.7 388.5,430.7 387.2,431.1 385.8,432.1 384.5,432.1 383.1,433.7 381.8,433.4 380.5,433.7 379.1,435.4 377.8,434.8 376.4,433.8 375.1,436.8 373.7,433.7 372.4,433.2 371,432 369.7,431.5 368.3,432.4 367,427.9 365.6,435.6 364.3,427.7 362.9,433.3 361.6,432.1 360.2,434.9 358.9,434.1 357.5,438.3 356.2,432.3 354.8,430.4 353.5,431.4 352.1,434.6 350.8,431.4 349.4,434.2 348.1,430.3 346.7,431.2 345.4,436.3 344,432.1 342.7,432.2 341.3,435 340,432.2 338.7,428.7 337.3,429.1 336,432.2 334.6,435.1 333.3,428.9 331.9,431.9 330.6,429.8 329.2,432.8 327.9,428.4 326.5,429.9 325.2,427.1 323.8,427.2 322.5,428.7 321.1,434.3 319.8,433.9 318.4,434.9 317.1,428.5 315.7,430.3 314.4,433.1 313,436 311.7,429 310.3,431.9 309,436.4 307.6,430.8 306.3,430 304.9,432.1 303.6,431.9 302.2,430.5 300.9,432.1 299.6,430.1 298.2,429.5 296.9,430.4 295.5,433.2 294.2,434.5 292.8,436.9 291.5,444.3 290.1,447.4 288.8,437.7 287.4,433.9 286.1,440.3 284.7,436.1 283.4,432.2 282,431.3 280.7,424.1 279.3,441.7 278,476.1 276.6,475.7 275.3,451.6 273.9,435.8 272.6,443.1 271.2,438 269.9,443 268.5,438.4 267.2,446.1 265.8,438 264.5,444.9 263.1,426.7 261.8,424.6 260.5,429.6 259.1,431.6 257.8,430.8 256.4,433.3 255.1,432.9 253.7,432.1 252.4,429 251,433.7 249.7,433.1 248.3,434.4 247,429.1 245.6,428.8 244.3,430.3 242.9,433.9 241.6,432.1 240.2,433.8 238.9,433.8 237.5,432.1 236.2,432.9 234.8,432.4 233.5,434.4 232.1,436 230.8,430.4 229.4,431.4 228.1,433.2 226.7,432.6 225.4,434.3 224,435.3 222.7,431.4 221.4,433.4 220,433.9 218.7,439.5 217.3,435.6 216,432.8 214.6,434.4 213.3,435.9 211.9,435.4 210.6,433.1 209.2,436.9 207.9,436.1 206.5,432 205.2,431.9 203.8,433.8 202.5,435.5 201.1,430 199.8,430.5 198.4,432.1 197.1,431.3 195.7,434.3 194.4,437.2 193,436.9 191.7,433.6 190.3,437.8 189,433.9 187.6,432.9 186.3,434.8 184.9,431.7 183.6,432 182.2,437.5 180.9,434.9 179.6,438.3 178.2,439.5 176.9,456.8 175.5,481.3 174.2,444.6 172.8,442.5 171.5,438.2 170.1,449.2 168.8,442.8 167.4,452.2 166.1,445.6 164.7,449 163.4,448.5 162,460.6 160.7,437.2 159.3,435.6 158,437.3 156.6,437.2 155.3,435.9 153.9,442.4 152.6,446.5 151.2,444 149.9,443.5 148.5,441.3 147.2,439.3 145.8,436.1 144.5,432.1 143.1,433.6 141.8,429.5 140.5,430.8 139.1,432 137.8,438.3 136.4,434.2 135.1,435.5 133.7,435.2 132.4,432.9 131,429.5 129.7,433.8 128.3,434.1 127,436.6 125.6,434.9 124.3,434.7 122.9,432.2 121.6,435 120.2,432.5 118.9,432.6 117.5,431 116.2,432.7 114.8,433.1 113.5,432.4 112.1,429.6 110.8,424.8 109.4,428.1 108.1,430.1 106.7,433.9 105.4,428.3 104,423.8 102.7,428.7" fill="#45733f"/>
<polygon points="102.7,341.5 104,340.9 105.4,349.4 106.7,344.5 108.1,346 109.4,351.2 110.8,338.2 112.1,352.5 113.5,343.2 114.8,348 116.2,357.8 117.5,356.9 118.9,358.2 120.2,358.1 121.6,359.7 122.9,358.2 124.3,359.8 125.6,361.6 127,361.9 128.3,366.2 129.7,369.9 131,354.3 132.4,365.2 133.7,367.8 135.1,354.2 136.4,374 137.8,372.7 139.1,367.4 140.5,349.6 141.8,358.2 143.1,365.5 144.5,361 145.8,357.4 147.2,366 148.5,373.6 149.9,371.7 151.2,371.2 152.6,375.3 153.9,367.3 155.3,361.6 156.6,363.3 158,366.3 159.3,362.9 160.7,366.2 162,377.1 163.4,388.8 164.7,378.7 166.1,373.4 167.4,373.8 168.8,367.1 170.1,368.1 171.5,362.4 172.8,359.5 174.2,361.5 175.5,372.2 176.9,365.4 178.2,366.4 179.6,372 180.9,364.4 182.2,350.2 183.6,353 184.9,344.2 186.3,351.4 187.6,359.1 189,368.1 190.3,367.1 191.7,354.6 193,366.4 194.4,363.9 195.7,343.2 197.1,357.4 198.4,369.6 199.8,360.6 201.1,360.7 202.5,363.2 203.8,362.4 205.2,369.8 206.5,353.5 207.9,361.7 209.2,360.5 210.6,359.7 211.9,359.2 213.3,363.9 214.6,363.8 216,361.9 217.3,355.9 218.7,362.5 220,383.3 221.4,370.2 222.7,366.2 224,358.6 225.4,362.6 226.7,359 228.1,369.7 229.4,362 230.8,359.1 232.1,362 233.5,373.2 234.8,352.8 236.2,358.1 237.5,363.6 238.9,367.3 240.2,361.5 241.6,363.3 242.9,373.3 244.3,368.1 245.6,354.3 247,364.9 248.3,342 249.7,359.9 251,357.5 252.4,349.2 253.7,360.5 255.1,354.3 256.4,351.9 257.8,363.1 259.1,361.3 260.5,366.8 261.8,359.4 263.1,360.9 264.5,365.4 265.8,368.7 267.2,375.5 268.5,362.9 269.9,366.3 271.2,365.1 272.6,363.7 273.9,358.6 275.3,368.7 276.6,377 278,374.6 279.3,365.6 280.7,345.6 282,348.7 283.4,351.5 284.7,358.5 286.1,365.2 287.4,356.2 288.8,365.6 290.1,371.4 291.5,369.6 292.8,354.9 294.2,359.1 295.5,355.7 296.9,361.3 298.2,352.3 299.6,347.8 300.9,350.9 302.2,369.6 303.6,359.5 304.9,351.5 306.3,351.1 307.6,354.8 309,377.2 310.3,364.4 311.7,357.8 313,365.4 314.4,354.9 315.7,347.4 317.1,348.3 318.4,361.6 319.8,369 321.1,360.1 322.5,353.1 323.8,343.6 325.2,357.3 326.5,363.8 327.9,365.7 329.2,368.2 330.6,346.2 331.9,343.5 333.3,347.7 334.6,352.1 336,349 337.3,352.1 338.7,346.4 340,358.8 341.3,363.1 342.7,368.7 344,363.9 345.4,363.5 346.7,359.4 348.1,363.8 349.4,365.6 350.8,353.1 352.1,367.1 353.5,353.4 354.8,356.8 356.2,358.2 357.5,362.3 358.9,365.8 360.2,365.8 361.6,359.8 362.9,368.2 364.3,361 365.6,358.1 367,350.6 368.3,367.7 369.7,358.4 371,364.1 372.4,352.5 373.7,361.9 375.1,361.8 376.4,377 377.8,371.3 379.1,377.9 380.5,366.8 381.8,368.4 383.1,364.4 384.5,360.2 385.8,347.2 387.2,359.5 388.5,353.1 389.9,364.1 391.2,356 392.6,357.6 393.9,369.6 395.3,374.2 396.6,362 398,355.4 399.3,347 400.7,355.4 402,351.7 403.4,361.7 404.7,356.7 406.1,354.4 407.4,354.7 408.8,362.7 410.1,371.5 411.5,372.7 412.8,364.4 414.2,353.4 415.5,341.7 416.9,351.1 418.2,343.1 419.6,344.9 420.9,348.3 422.2,346.7 423.6,366.3 424.9,368.3 426.3,359.6 427.6,366.1 429,355.9 430.3,352.4 431.7,357.8 433,366.2 434.4,361.9 435.7,356 437.1,356.7 438.4,354.5 439.8,348.6 441.1,341.2 442.5,346.6 443.8,350.8 445.2,349.7 446.5,354.7 447.9,353.7 449.2,354.4 450.6,356.1 451.9,354.3 453.3,349.2 454.6,353.8 456,365.3 457.3,359.7 458.7,374.2 460,375 461.3,372.8 462.7,373.7 464,371.2 465.4,364.1 466.7,363 468.1,358 469.4,360 470.8,344.1 472.1,342.1 473.5,346.6 474.8,348.7 476.2,341.7 477.5,343.2 478.9,370.8 480.2,362.8 481.6,363.6 482.9,351.4 484.3,338 485.6,348.2 487,349.1 488.3,350 489.7,349.5 491,356.7 492.4,358.2 493.7,363.9 495.1,360.3 496.4,354.8 497.8,352.9 499.1,368.3 500.4,341.5 501.8,351.5 503.1,348.2 504.5,325.8 505.8,324.2 507.2,352.5 508.5,346 509.9,353.1 511.2,358.2 512.6,356.6 513.9,354.7 515.3,366.8 516.6,353.4 518,356.4 519.3,353.5 520.7,355.4 522,361.5 523.4,352.3 524.7,358.4 526.1,361.4 527.4,349 528.8,349.9 530.1,347.5 531.5,346.8 532.8,354.5 534.2,360.7 535.5,356.7 536.9,345.6 538.2,350.5 539.6,356.9 540.9,350.4 542.2,362.8 543.6,353.2 544.9,365.6 546.3,356.8 547.6,340.2 549,344.3 550.3,345.3 551.7,344.1 553,340.9 554.4,330.5 555.7,342.9 557.1,346.5 558.4,348.3 559.8,344.5 561.1,338.9 562.5,348.7 563.8,352.4 565.2,359.8 566.5,359.9 567.9,354.7 569.2,360.6 570.6,366.4 571.9,359.5 573.3,358 574.6,342.4 576,360.2 577.3,363.6 578.7,356 580,346.6 581.3,358.4 582.7,354.5 584,359.8 585.4,347.2 586.7,354.3 588.1,353.6 589.4,358.1 590.8,363.8 592.1,374.5 593.5,365.1 594.8,362 596.2,354.9 597.5,351.3 598.9,357.3 600.2,353.4 601.6,354.1 602.9,358.3 604.3,361.1 605.6,358.6 607,356.7 608.3,360.5 609.7,347.9 611,353.7 612.4,350.4 613.7,361.7 615.1,367.8 616.4,353.9 617.8,342.6 619.1,353.7 620.4,358.2 621.8,356.2 623.1,362.9 624.5,360.9 625.8,361.4 627.2,352.6 628.5,359.1 629.9,361.9 631.2,360.1 632.6,358.2 633.9,361.5 635.3,358.8 636.6,351.9 638,345.9 639.3,350.6 640.7,356.7 642,357.9 643.4,344.2 644.7,342 646.1,348 647.4,348.5 648.8,359.9 650.1,364.1 651.5,347.1 652.8,349.5 654.2,349.1 655.5,343.5 656.9,335.9 658.2,357.1 659.5,365.6 660.9,376.1 662.2,379.5 663.6,365 664.9,367.5 666.3,356.9 667.6,369.1 669,362.4 670.3,367 671.7,357.2 673,355.9 674.4,362.7 675.7,352.5 677.1,349.4 678.4,352.2 679.8,355.1 681.1,360.2 682.5,362.1 683.8,351.7 685.2,355.7 686.5,370.2 687.9,369.5 689.2,385.4 690.6,393 691.9,381.5 693.3,381.1 694.6,366.9 696,366.4 697.3,358.6 698.7,347.2 700,346.6 701.3,342.1 702.7,327.8 704,332 705.4,334.6 706.7,328 708.1,332.2 709.4,345.1 710.8,358 712.1,344.3 713.5,352.9 714.8,354.6 716.2,355.1 717.5,358.5 718.9,358.8 720.2,352.8 721.6,356.9 722.9,359.5 724.3,374.3 725.6,374.7 727,370.9 728.3,368.3 729.7,374.6 731,362.2 732.4,359.6 733.7,350.3 735.1,359 736.4,364.4 737.8,362.4 739.1,365.3 740.4,363.3 741.8,356.7 743.1,353.3 744.5,353.1 745.8,348.1 747.2,354.2 748.5,362.3 749.9,360.1 751.2,366.3 752.6,356 753.9,353.8 755.3,352.9 756.6,358.2 758,360 759.3,368.4 760.7,363.7 762,366.2 763.4,362.3 764.7,356.5 766.1,357.7 767.4,360.2 768.8,360 770.1,360.5 771.5,359.2 772.8,363.5 774.2,363.5 775.5,360 776.9,366.7 778.2,365 779.5,354.9 780.9,357.8 782.2,358.1 783.6,352.8 784.9,367.8 786.3,354 787.6,348.5 789,354.2 790.3,356 791.7,363.2 793,364.7 794.4,356.4 795.7,363.2 797.1,353.9 798.4,364 799.8,366.2 801.1,358.7 802.5,351.4 803.8,359.3 805.2,372.2 806.5,375.6 807.9,361.6 809.2,368.7 810.6,368.6 811.9,361.6 813.3,359.1 814.6,363.7 816,357.3 817.3,359 818.6,356.6 820,366.1 821.3,354.7 822.7,365.1 824,362.7 825.4,359.3 826.7,363.9 828.1,362.8 829.4,361.5 830.8,350.6 832.1,361.7 833.5,364 834.8,363.4 836.2,364.4 837.5,371.1 838.9,359.4 840.2,364 841.6,362.3 842.9,368.9 844.3,371.2 845.6,372.6 847,361.8 848.3,367.6 849.7,363.7 851,365 852.4,360.3 853.7,375.4 855.1,377.7 856.4,366.3 857.8,369 859.1,362.6 860.4,360.7 861.8,359.4 863.1,366.6 864.5,365.8 865.8,355.7 867.2,358.2 868.5,367.4 869.9,364.1 871.2,361.7 872.6,354.5 873.9,359.7 875.3,364.1 876.6,367.2 878,363.2 879.3,364.7 880.7,356.5 882,357.7 883.4,356.1 884.7,357.4 886.1,363.1 887.4,368.6 888.8,369.5 890.1,365.8 891.5,364.2 892.8,352.5 894.2,352.7 895.5,355.5 896.9,373.8 898.2,367.6 899.5,367.1 900.9,361.3 902.2,367.4 903.6,368 904.9,370.5 906.3,370.2 907.6,358.6 909,356.5 910.3,358 911.7,367 913,363.5 914.4,372.2 915.7,361.1 917.1,359.3 918.4,371.9 919.8,363.8 921.1,374 922.5,370.7 923.8,358.5 925.2,382.8 926.5,386.1 927.9,383.3 929.2,380 930.6,376.1 931.9,373.3 933.3,364.8 934.6,346.4 936,366.2 937.3,358 937.3,397.7 936,398.5 934.6,397.4 933.3,407.8 931.9,413.8 930.6,415 929.2,427.7 927.9,430.6 926.5,432.5 925.2,418.6 923.8,407.3 922.5,397.5 921.1,403.9 919.8,398.8 918.4,404.5 917.1,399.8 915.7,401.4 914.4,406.9 913,400.4 911.7,401.2 910.3,396.1 909,399.3 907.6,402.5 906.3,400.1 904.9,399.2 903.6,403.8 902.2,402.6 900.9,398 899.5,399.1 898.2,397.5 896.9,399.3 895.5,393.3 894.2,392.3 892.8,394.6 891.5,397.7 890.1,402.4 888.8,402.6 887.4,400.5 886.1,398.2 884.7,391.8 883.4,394.5 882,399 880.7,398.1 879.3,401.7 878,401.4 876.6,402.6 875.3,401.3 873.9,397.5 872.6,395.8 871.2,396.1 869.9,397.1 868.5,400.9 867.2,402.3 865.8,397.9 864.5,401.5 863.1,399 861.8,393.1 860.4,399.5 859.1,400.7 857.8,405.3 856.4,400.9 855.1,405.9 853.7,401.3 852.4,393.1 851,398.5 849.7,401.1 848.3,398.9 847,395.5 845.6,399.5 844.3,397.8 842.9,398.3 841.6,389.2 840.2,393.3 838.9,393.9 837.5,399.9 836.2,400 834.8,398.5 833.5,394.7 832.1,393.8 830.8,388.8 829.4,398.7 828.1,395.8 826.7,399 825.4,394.2 824,405.3 822.7,400.2 821.3,392 820,397.7 818.6,396.1 817.3,396.1 816,395.4 814.6,396.3 813.3,391.7 811.9,391.8 810.6,395.9 809.2,397.1 807.9,403.2 806.5,404.1 805.2,398.2 803.8,398 802.5,394.2 801.1,398 799.8,398.5 798.4,389.4 797.1,393.3 795.7,395.2 794.4,394.1 793,399.2 791.7,400.3 790.3,396.3 789,399.2 787.6,399.8 786.3,399.2 784.9,403.4 783.6,395.2 782.2,396 780.9,393.5 779.5,393.2 778.2,403.1 776.9,405 775.5,400.4 774.2,400.3 772.8,399.7 771.5,396.6 770.1,390.1 768.8,394.6 767.4,401.2 766.1,395 764.7,396.9 763.4,399.7 762,401.9 760.7,398 759.3,395.9 758,394.1 756.6,390 755.3,384.6 753.9,389.5 752.6,393.7 751.2,401.9 749.9,389 748.5,395.3 747.2,392.7 745.8,393.7 744.5,395.2 743.1,392 741.8,394.6 740.4,400 739.1,404.2 737.8,398.3 736.4,395.7 735.1,393.2 733.7,387.9 732.4,397.7 731,398.6 729.7,407.2 728.3,398.2 727,399.8 725.6,402.6 724.3,399.3 722.9,388.9 721.6,389.4 720.2,387.6 718.9,390.7 717.5,396 716.2,398.5 714.8,397.9 713.5,394.2 712.1,391.7 710.8,393.4 709.4,384.9 708.1,372.5 706.7,375.9 705.4,377.2 704,374.2 702.7,377.3 701.3,382.6 700,389.8 698.7,389.5 697.3,391.9 696,403.8 694.6,405.2 693.3,415 691.9,419.1 690.6,425.5 689.2,418.7 687.9,411.7 686.5,407.9 685.2,399.4 683.8,396.4 682.5,395.1 681.1,398.2 679.8,397 678.4,398 677.1,391.4 675.7,392 674.4,396.8 673,396.1 671.7,394.3 670.3,396.6 669,393.5 667.6,396.4 666.3,394.8 664.9,394.6 663.6,392.9 662.2,399.7 660.9,401.4 659.5,393.2 658.2,388.8 656.9,383.1 655.5,383.3 654.2,389.6 652.8,390.2 651.5,396.1 650.1,399.1 648.8,389.5 647.4,384.3 646.1,386.1 644.7,385.1 643.4,396.8 642,394.3 640.7,393.6 639.3,392.5 638,387.3 636.6,386.8 635.3,394.9 633.9,397.8 632.6,390.4 631.2,392.5 629.9,393 628.5,398.3 627.2,394.6 625.8,399.7 624.5,398.5 623.1,397.9 621.8,389.6 620.4,397.3 619.1,398.3 617.8,386.1 616.4,391.8 615.1,395.5 613.7,393.9 612.4,390 611,397.7 609.7,391.9 608.3,394.1 607,395.5 605.6,392.5 604.3,399.2 602.9,398.6 601.6,395.6 600.2,399.7 598.9,399.7 597.5,390.9 596.2,387.8 594.8,394.6 593.5,397.6 592.1,401.4 590.8,399.7 589.4,401 588.1,393.8 586.7,391.2 585.4,384.8 584,387.2 582.7,390.6 581.3,391.8 580,389.2 578.7,395.6 577.3,402.2 576,399.4 574.6,392.3 573.3,393.8 571.9,388.5 570.6,392.2 569.2,394.1 567.9,397 566.5,396.3 565.2,397.9 563.8,393.7 562.5,393.6 561.1,385.5 559.8,388.9 558.4,388.2 557.1,385.3 555.7,387.7 554.4,385.7 553,387.3 551.7,385.3 550.3,386.9 549,388.4 547.6,382.5 546.3,391.9 544.9,399.9 543.6,392.2 542.2,397.5 540.9,389.4 539.6,389.3 538.2,387.2 536.9,389.6 535.5,398.4 534.2,392.4 532.8,393.5 531.5,388.2 530.1,387.2 528.8,389.5 527.4,391.7 526.1,390.7 524.7,389.4 523.4,389.8 522,387.7 520.7,391.4 519.3,390.9 518,391 516.6,393.4 515.3,399.5 513.9,390.5 512.6,391.4 511.2,390.6 509.9,388.7 508.5,384.1 507.2,388.1 505.8,372.1 504.5,374.8 503.1,387.4 501.8,385.9 500.4,379.2 499.1,396.1 497.8,394.4 496.4,392.6 495.1,397.3 493.7,397.8 492.4,396.5 491,398.2 489.7,391.6 488.3,387.4 487,384.8 485.6,386.9 484.3,392.4 482.9,395.7 481.6,394.9 480.2,393.8 478.9,393.6 477.5,390.6 476.2,386.4 474.8,386.4 473.5,383.8 472.1,384.7 470.8,392.1 469.4,392.3 468.1,395 466.7,393.3 465.4,396.9 464,401 462.7,404 461.3,409.2 460,401.2 458.7,399.7 457.3,389.9 456,393.7 454.6,387.5 453.3,383.5 451.9,387.9 450.6,392.2 449.2,390.7 447.9,393.2 446.5,392.5 445.2,390.5 443.8,386.9 442.5,384.1 441.1,392.2 439.8,394.7 438.4,388.7 437.1,393.8 435.7,396.5 434.4,399.1 433,402 431.7,391.3 430.3,393.1 429,395 427.6,397.6 426.3,392.6 424.9,396.3 423.6,397.6 422.2,385.8 420.9,380.3 419.6,386.6 418.2,387 416.9,391.1 415.5,388 414.2,387.6 412.8,390 411.5,398 410.1,392.1 408.8,397.5 407.4,391.4 406.1,387.4 404.7,393.9 403.4,396.2 402,388.5 400.7,389.9 399.3,386.9 398,398.8 396.6,402.2 395.3,403 393.9,403 392.6,395.1 391.2,387.7 389.9,395.6 388.5,394.2 387.2,396.9 385.8,396.1 384.5,395.1 383.1,397 381.8,394.3 380.5,397 379.1,400.1 377.8,398.7 376.4,399.4 375.1,400.1 373.7,394.9 372.4,398.9 371,399.6 369.7,397.2 368.3,396 367,391 365.6,396.4 364.3,389.4 362.9,399.2 361.6,396.4 360.2,396.9 358.9,400.7 357.5,402.3 356.2,399.9 354.8,397.6 353.5,395 352.1,401.1 350.8,394.8 349.4,400.1 348.1,397.2 346.7,389.8 345.4,397.9 344,399.8 342.7,397.3 341.3,400.3 340,396.3 338.7,388.9 337.3,393.5 336,396.2 334.6,399.2 333.3,391.1 331.9,395.6 330.6,392.4 329.2,399.5 327.9,392.5 326.5,399.4 325.2,396.9 323.8,382.2 322.5,392 321.1,394.8 319.8,398.9 318.4,394.7 317.1,388.1 315.7,391.2 314.4,394.7 313,400.1 311.7,391.4 310.3,397.4 309,399.9 307.6,394.5 306.3,391.2 304.9,390.8 303.6,392.4 302.2,392.7 300.9,389.2 299.6,392.4 298.2,391.8 296.9,395.1 295.5,393 294.2,397.7 292.8,411.7 291.5,441.9 290.1,431.3 288.8,418.5 287.4,398.4 286.1,416.2 284.7,403.1 283.4,401.1 282,394.2 280.7,399.9 279.3,415.8 278,476.1 276.6,465.5 275.3,433.3 273.9,396 272.6,417.9 271.2,403.8 269.9,417.9 268.5,403.5 267.2,426.3 265.8,403.7 264.5,421 263.1,393.5 261.8,389.5 260.5,397.1 259.1,392.6 257.8,394.5 256.4,394.6 255.1,392.9 253.7,395.1 252.4,392.1 251,399.3 249.7,399.8 248.3,395.9 247,399.8 245.6,395 244.3,394.2 242.9,400.6 241.6,398.2 240.2,398.1 238.9,400.2 237.5,400.1 236.2,399.6 234.8,393.7 233.5,401.4 232.1,401.2 230.8,397 229.4,398.2 228.1,400.7 226.7,399.3 225.4,399.1 224,401.7 222.7,399.7 221.4,398.5 220,396.4 218.7,399.5 217.3,397 216,397.5 214.6,400.1 213.3,399.4 211.9,399 210.6,399.3 209.2,401 207.9,399 206.5,396.1 205.2,400.1 203.8,397.8 202.5,398.5 201.1,395.6 199.8,396.5 198.4,407.6 197.1,402.7 195.7,396.5 194.4,404.9 193,403.6 191.7,395.7 190.3,402 189,399.9 187.6,398.3 186.3,399 184.9,392 183.6,391.9 182.2,402.6 180.9,400.3 179.6,406.6 178.2,412.6 176.9,439.5 175.5,471.3 174.2,423.2 172.8,418.5 171.5,405.3 170.1,428.2 168.8,408.1 167.4,429.2 166.1,413.9 164.7,432.7 163.4,438 162,460.6 160.7,416.4 159.3,402 158,410 156.6,399.9 155.3,403.4 153.9,405.5 152.6,415.5 151.2,412.7 149.9,413.2 148.5,407.2 147.2,407.7 145.8,397.8 144.5,399.7 143.1,400.2 141.8,394.1 140.5,386.1 139.1,400.2 137.8,407.8 136.4,403 135.1,399 133.7,394.8 132.4,397.5 131,393.1 129.7,400.6 128.3,401.3 127,400.9 125.6,396.7 124.3,397.9 122.9,398.8 121.6,403.6 120.2,400.4 118.9,398.1 117.5,394.8 116.2,397.2 114.8,392.5 113.5,386.8 112.1,391 110.8,383.4 109.4,393.5 108.1,391.6 106.7,391.6 105.4,387.6 104,384.2 102.7,386" fill="#68926a"/>
<polyline points="102.7,468.6 104,467.8 105.4,469.2 106.7,468.9 108.1,467.3 109.4,467.6 110.8,470 112.1,467.9 113.5,470.2 114.8,471 116.2,468.9 117.5,468.6 118.9,468 120.2,467.7 121.6,467.4 122.9,466.6 124.3,468.1 125.6,468.4 127,468.8 128.3,469.6 129.7,469.7 131,468.5 132.4,468.3 133.7,466.8 135.1,467.9 136.4,469.1 137.8,470.3 139.1,468 140.5,466.5 141.8,467.2 143.1,467.2 144.5,468.6 145.8,469.6 147.2,469.4 148.5,470.4 149.9,468.7 151.2,470.7 152.6,472.1 153.9,472.4 155.3,468.6 156.6,469.2 158,468.6 159.3,470.5 160.7,467.5 162,483.2 163.4,467.9 164.7,484.4 166.1,469.4 167.4,483.8 168.8,468.1 170.1,482.8 171.5,468.5 172.8,483.1 174.2,476.4 175.5,503.5 176.9,479.9 178.2,469.4 179.6,470.2 180.9,467.3 182.2,468.5 183.6,469.4 184.9,467.9 186.3,466.9 187.6,467.9 189,466.9 190.3,466.9 191.7,468.1 193,468.5 194.4,470.3 195.7,471.2 197.1,468.3 198.4,467.4 199.8,468.2 201.1,467.7 202.5,469.9 203.8,468.6 205.2,467.3 206.5,468.3 207.9,468.2 209.2,469.3 210.6,467.8 211.9,469.3 213.3,468.4 214.6,466.9 216,469.4 217.3,470 218.7,468.8 220,467.3 221.4,469.9 222.7,468.7 224,469.2 225.4,468.5 226.7,467.7 228.1,469.8 229.4,468.4 230.8,468 232.1,471.6 233.5,472.2 234.8,468.2 236.2,467.4 237.5,468 238.9,469.5 240.2,469.8 241.6,467 242.9,470.1 244.3,467.3 245.6,467.5 247,467.5 248.3,466.7 249.7,466 251,468.3 252.4,465 253.7,466 255.1,468 256.4,468 257.8,467.3 259.1,468.7 260.5,468.9 261.8,467.6 263.1,468.6 264.5,480.5 265.8,468.7 267.2,486 268.5,470.2 269.9,481.9 271.2,469.1 272.6,481.4 273.9,468 275.3,486.1 276.6,496.6 278,504.4 279.3,471.3 280.7,469.8 282,466.9 283.4,470.1 284.7,467.8 286.1,474.2 287.4,469 288.8,474.8 290.1,469.5 291.5,472 292.8,468.7 294.2,469.2 295.5,467.9 296.9,467.9 298.2,467.1 299.6,466.3 300.9,468.2 302.2,467.3 303.6,466.9 304.9,467.2 306.3,468.3 307.6,469.3 309,472.2 310.3,469.9 311.7,468.4 313,470 314.4,468.4 315.7,469.1 317.1,465.6 318.4,466.9 319.8,465.3 321.1,466.5 322.5,468 323.8,467.1 325.2,469.2 326.5,469.9 327.9,469.1 329.2,468.8 330.6,466.3 331.9,467.5 333.3,467.7 334.6,468.6 336,468.8 337.3,464.5 338.7,466.6 340,467.8 341.3,468.2 342.7,467.2 344,467.9 345.4,469 346.7,469.4 348.1,469 349.4,469.2 350.8,468.2 352.1,468 353.5,468.9 354.8,468.4 356.2,469.1 357.5,469.8 358.9,467.6 360.2,468 361.6,467.2 362.9,465.4 364.3,463.7 365.6,468.4 367,466.4 368.3,466.8 369.7,465.9 371,466.9 372.4,468.4 373.7,467.7 375.1,468.7 376.4,468.4 377.8,468.1 379.1,467.9 380.5,468.6 381.8,471.3 383.1,468 384.5,466.6 385.8,467.7 387.2,468.1 388.5,466.5 389.9,465.2 391.2,466.7 392.6,469.2 393.9,468.7 395.3,468.5 396.6,469.2 398,468.3 399.3,466.2 400.7,468.2 402,466 403.4,466.9 404.7,465.7 406.1,471.2 407.4,469.8 408.8,465.5 410.1,464.7 411.5,466.5 412.8,468.9 414.2,468.4 415.5,467.8 416.9,467.1 418.2,466.8 419.6,465.4 420.9,467.7 422.2,466.6 423.6,468.4 424.9,468.9 426.3,468 427.6,465.6 429,466.3 430.3,467 431.7,467.8 433,469.2 434.4,469.3 435.7,467.7 437.1,466.4 438.4,464.2 439.8,470 441.1,468.4 442.5,465.3 443.8,467.9 445.2,467.5 446.5,468.2 447.9,468.2 449.2,468.3 450.6,470 451.9,468.1 453.3,465.8 454.6,467.2 456,468.2 457.3,467.3 458.7,468.7 460,468.8 461.3,470.5 462.7,470.5 464,468.4 465.4,467.3 466.7,465.3 468.1,467.3 469.4,465.5 470.8,465.9 472.1,465.4 473.5,466.7 474.8,470.2 476.2,469.4 477.5,471.4 478.9,469.1 480.2,467.7 481.6,468 482.9,467.5 484.3,466.3 485.6,467.5 487,466.7 488.3,465.6 489.7,465.4 491,465.9 492.4,468 493.7,467.3 495.1,468.3 496.4,466.8 497.8,465.6 499.1,467.7 500.4,468 501.8,467.1 503.1,466.1 504.5,467.7 505.8,467.7 507.2,466.7 508.5,469.1 509.9,469 511.2,466.6 512.6,465.6 513.9,469.4 515.3,467.7 516.6,469.4 518,465.4 519.3,465.2 520.7,467.7 522,467 523.4,465.2 524.7,463.8 526.1,466.6 527.4,469.1 528.8,467.8 530.1,467.4 531.5,465.4 532.8,466 534.2,468 535.5,467.6 536.9,468.2 538.2,464.8 539.6,466.3 540.9,466.9 542.2,467.2 543.6,466.2 544.9,471.1 546.3,468.8 547.6,466.4 549,466.7 550.3,467.1 551.7,465.4 553,465.5 554.4,466.4 555.7,466.3 557.1,464.9 558.4,465.6 559.8,463.7 561.1,465.9 562.5,466 563.8,465.5 565.2,467.1 566.5,468.8 567.9,467 569.2,467.9 570.6,467 571.9,466.9 573.3,467.1 574.6,465.9 576,468.2 577.3,468.1 578.7,467 580,465.6 581.3,466.5 582.7,467.8 584,467 585.4,466.2 586.7,468.1 588.1,467.6 589.4,468.6 590.8,468.1 592.1,468.5 593.5,468.8 594.8,466.3 596.2,467.1 597.5,465.8 598.9,469.1 600.2,467.7 601.6,466.2 602.9,466.5 604.3,466.9 605.6,467.5 607,466.8 608.3,467.8 609.7,466.8 611,470.1 612.4,467.1 613.7,466.4 615.1,466.6 616.4,469.9 617.8,468.7 619.1,468.1 620.4,468.2 621.8,468.6 623.1,470.1 624.5,468.1 625.8,468.5 627.2,467.7 628.5,469.3 629.9,468.2 631.2,467.7 632.6,467.5 633.9,470.9 635.3,467.3 636.6,466.8 638,466.6 639.3,469.5 640.7,469 642,468.6 643.4,467.3 644.7,467.8 646.1,466.7 647.4,468 648.8,465.5 650.1,467.2 651.5,466.8 652.8,464.7 654.2,466.1 655.5,466.9 656.9,469.9 658.2,470.5 659.5,470.2 660.9,469.6 662.2,468.7 663.6,468.4 664.9,468.3 666.3,468.4 667.6,468.1 669,468.4 670.3,470.8 671.7,470 673,468.2 674.4,466.8 675.7,467.4 677.1,467.4 678.4,469.6 679.8,469.3 681.1,469.6 682.5,469.3 683.8,469.8 685.2,470.7 686.5,471 687.9,473.8 689.2,472.5 690.6,474.5 691.9,475.4 693.3,474.8 694.6,473.3 696,469.9 697.3,468.7 698.7,466.2 700,465 701.3,463 702.7,461.6 704,461 705.4,463.9 706.7,461.1 708.1,462.8 709.4,465.2 710.8,466.8 712.1,466 713.5,468.4 714.8,468.8 716.2,469 717.5,465.8 718.9,466.7 720.2,465.9 721.6,464.9 722.9,465.4 724.3,468.8 725.6,469 727,467.5 728.3,467.7 729.7,469.8 731,469.7 732.4,468.1 733.7,464.8 735.1,467 736.4,469.5 737.8,470.2 739.1,469.4 740.4,468.5 741.8,468 743.1,469.2 744.5,468.9 745.8,470.6 747.2,470.3 748.5,469.1 749.9,466.2 751.2,470.7 752.6,468.1 753.9,465.2 755.3,466.7 756.6,468.2 758,467.4 759.3,467.6 760.7,467.4 762,468.7 763.4,471.2 764.7,469.5 766.1,468.3 767.4,468.5 768.8,468.7 770.1,467.6 771.5,472.2 772.8,467.8 774.2,470.1 775.5,469.3 776.9,471.1 778.2,470 779.5,469.9 780.9,468.3 782.2,467.7 783.6,467.9 784.9,468.8 786.3,467.3 787.6,466.3 789,469.8 790.3,469.1 791.7,469.7 793,470.9 794.4,468.9 795.7,468.7 797.1,468.7 798.4,469.2 799.8,468.3 801.1,468.1 802.5,466.9 803.8,467.3 805.2,468.6 806.5,470.3 807.9,471.1 809.2,469.6 810.6,468.9 811.9,469.9 813.3,467.8 814.6,468.6 816,468 817.3,468.5 818.6,467.8 820,468 821.3,467 822.7,468 824,469.2 825.4,466.6 826.7,467.4 828.1,466.1 829.4,467.8 830.8,468.6 832.1,470.1 833.5,469.3 834.8,468.7 836.2,469.6 837.5,471.3 838.9,471 840.2,470.1 841.6,469.5 842.9,467.5 844.3,468.3 845.6,468.9 847,469 848.3,471.8 849.7,469.2 851,469.8 852.4,470.5 853.7,470.8 855.1,471.8 856.4,469.5 857.8,470.9 859.1,468.9 860.4,468.5 861.8,467.2 863.1,468.2 864.5,468.4 865.8,468.6 867.2,468.3 868.5,469 869.9,468.8 871.2,470.6 872.6,469.9 873.9,469.5 875.3,470.2 876.6,466.5 878,467.4 879.3,466.7 880.7,467.1 882,466.8 883.4,466.6 884.7,468.5 886.1,467.9 887.4,466.6 888.8,467.4 890.1,469.4 891.5,469.8 892.8,469.1 894.2,469.2 895.5,469.3 896.9,468.9 898.2,468.1 899.5,469.9 900.9,470.1 902.2,469.3 903.6,469.2 904.9,468.5 906.3,467.1 907.6,468.4 909,469.2 910.3,469.2 911.7,468.8 913,468 914.4,472 915.7,469.6 917.1,469.2 918.4,468.4 919.8,468.7 921.1,470.4 922.5,471.1 923.8,471.7 925.2,473.6 926.5,477.1 927.9,478.5 929.2,478.2 930.6,472.2 931.9,470.9 933.3,471 934.6,468.9 936,469.5 937.3,467.4" fill="none" stroke="#5f9cf0" stroke-width="1" stroke-linejoin="round"/>
<polyline points="102.7,428.7 104,423.8 105.4,428.3 106.7,433.9 108.1,430.1 109.4,428.1 110.8,424.8 112.1,429.6 113.5,432.4 114.8,433.1 116.2,432.7 117.5,431 118.9,432.6 120.2,432.5 121.6,435 122.9,432.2 124.3,434.7 125.6,434.9 127,436.6 128.3,434.1 129.7,433.8 131,429.5 132.4,432.9 133.7,435.2 135.1,435.5 136.4,434.2 137.8,438.3 139.1,432 140.5,430.8 141.8,429.5 143.1,433.6 144.5,432.1 145.8,436.1 147.2,439.3 148.5,441.3 149.9,443.5 151.2,444 152.6,446.5 153.9,442.4 155.3,435.9 156.6,437.2 158,437.3 159.3,435.6 160.7,437.2 162,460.6 163.4,448.5 164.7,449 166.1,445.6 167.4,452.2 168.8,442.8 170.1,449.2 171.5,438.2 172.8,442.5 174.2,444.6 175.5,481.3 176.9,456.8 178.2,439.5 179.6,438.3 180.9,434.9 182.2,437.5 183.6,432 184.9,431.7 186.3,434.8 187.6,432.9 189,433.9 190.3,437.8 191.7,433.6 193,436.9 194.4,437.2 195.7,434.3 197.1,431.3 198.4,432.1 199.8,430.5 201.1,430 202.5,435.5 203.8,433.8 205.2,431.9 206.5,432 207.9,436.1 209.2,436.9 210.6,433.1 211.9,435.4 213.3,435.9 214.6,434.4 216,432.8 217.3,435.6 218.7,439.5 220,433.9 221.4,433.4 222.7,431.4 224,435.3 225.4,434.3 226.7,432.6 228.1,433.2 229.4,431.4 230.8,430.4 232.1,436 233.5,434.4 234.8,432.4 236.2,432.9 237.5,432.1 238.9,433.8 240.2,433.8 241.6,432.1 242.9,433.9 244.3,430.3 245.6,428.8 247,429.1 248.3,434.4 249.7,433.1 251,433.7 252.4,429 253.7,432.1 255.1,432.9 256.4,433.3 257.8,430.8 259.1,431.6 260.5,429.6 261.8,424.6 263.1,426.7 264.5,444.9 265.8,438 267.2,446.1 268.5,438.4 269.9,443 271.2,438 272.6,443.1 273.9,435.8 275.3,451.6 276.6,475.7 278,476.1 279.3,441.7 280.7,424.1 282,431.3 283.4,432.2 284.7,436.1 286.1,440.3 287.4,433.9 288.8,437.7 290.1,447.4 291.5,444.3 292.8,436.9 294.2,434.5 295.5,433.2 296.9,430.4 298.2,429.5 299.6,430.1 300.9,432.1 302.2,430.5 303.6,431.9 304.9,432.1 306.3,430 307.6,430.8 309,436.4 310.3,431.9 311.7,429 313,436 314.4,433.1 315.7,430.3 317.1,428.5 318.4,434.9 319.8,433.9 321.1,434.3 322.5,428.7 323.8,427.2 325.2,427.1 326.5,429.9 327.9,428.4 329.2,432.8 330.6,429.8 331.9,431.9 333.3,428.9 334.6,435.1 336,432.2 337.3,429.1 338.7,428.7 340,432.2 341.3,435 342.7,432.2 344,432.1 345.4,436.3 346.7,431.2 348.1,430.3 349.4,434.2 350.8,431.4 352.1,434.6 353.5,431.4 354.8,430.4 356.2,432.3 357.5,438.3 358.9,434.1 360.2,434.9 361.6,432.1 362.9,433.3 364.3,427.7 365.6,435.6 367,427.9 368.3,432.4 369.7,431.5 371,432 372.4,433.2 373.7,433.7 375.1,436.8 376.4,433.8 377.8,434.8 379.1,435.4 380.5,433.7 381.8,433.4 383.1,433.7 384.5,432.1 385.8,432.1 387.2,431.1 388.5,430.7 389.9,429.7 391.2,424.9 392.6,431 393.9,436.6 395.3,438.3 396.6,435.2 398,433.6 399.3,426.3 400.7,428 402,427 403.4,431.1 404.7,427.1 406.1,424 407.4,425.9 408.8,425.3 410.1,426.2 411.5,429.3 412.8,429.1 414.2,431.8 415.5,431.2 416.9,431.5 418.2,428.8 419.6,426.5 420.9,423.1 422.2,424.7 423.6,429.4 424.9,432.1 426.3,431.3 427.6,432.6 429,433.3 430.3,431.2 431.7,429.9 433,430.7 434.4,430.9 435.7,428.3 437.1,427.4 438.4,427 439.8,431.9 441.1,429 442.5,419.5 443.8,424.1 445.2,425.6 446.5,427.2 447.9,430 449.2,429.3 450.6,433.4 451.9,430.7 453.3,426.8 454.6,427.2 456,432.6 457.3,431.3 458.7,435.3 460,434 461.3,437.3 462.7,437.1 464,433.9 465.4,430.7 466.7,430 468.1,430.8 469.4,429.6 470.8,433 472.1,426.7 473.5,427.7 474.8,428.9 476.2,429.5 477.5,432.6 478.9,433.3 480.2,431 481.6,432.1 482.9,429.6 484.3,430.4 485.6,429 487,428.2 488.3,424.9 489.7,428.8 491,427.5 492.4,431.4 493.7,430.7 495.1,431.2 496.4,429.5 497.8,427.4 499.1,431.2 500.4,426.8 501.8,426.8 503.1,428.9 504.5,426.9 505.8,425.8 507.2,429 508.5,429.6 509.9,430.1 511.2,428 512.6,427.7 513.9,430.3 515.3,438.4 516.6,431.8 518,428.4 519.3,430.6 520.7,431.1 522,428 523.4,425.7 524.7,430.1 526.1,428.1 527.4,430.5 528.8,429.9 530.1,427.6 531.5,427.9 532.8,428.8 534.2,429.5 535.5,429.7 536.9,427.8 538.2,427.5 539.6,428.5 540.9,429.7 542.2,430.7 543.6,430.6 544.9,435.4 546.3,433.1 547.6,427.9 549,429.5 550.3,427.7 551.7,425.4 553,427.5 554.4,426.4 555.7,427.2 557.1,426.1 558.4,428.1 559.8,424.7 561.1,426.4 562.5,430.3 563.8,427.7 565.2,426.4 566.5,432 567.9,431.3 569.2,430.6 570.6,427.2 571.9,426.7 573.3,428.5 574.6,430.4 576,432.3 577.3,432.2 578.7,429.6 580,426.3 581.3,427.6 582.7,428.7 584,428.1 585.4,427.2 586.7,428.5 588.1,432.5 589.4,434.7 590.8,432.2 592.1,435.1 593.5,432.1 594.8,432.4 596.2,430.8 597.5,429 598.9,437.3 600.2,432.2 601.6,428.6 602.9,433.3 604.3,433.3 605.6,430.8 607,431.7 608.3,429.6 609.7,428.2 611,436.3 612.4,430.3 613.7,427.6 615.1,429.6 616.4,433.2 617.8,429.4 619.1,433.5 620.4,434.3 621.8,430.5 623.1,433.4 624.5,428.6 625.8,434.1 627.2,429.9 628.5,432.5 629.9,431 631.2,429.7 632.6,430 633.9,436.7 635.3,431.2 636.6,429.2 638,427.3 639.3,429.3 640.7,432.5 642,430 643.4,431.9 644.7,427.9 646.1,425.8 647.4,425.2 648.8,426.7 650.1,430.1 651.5,427.4 652.8,425.6 654.2,425.6 655.5,425.7 656.9,425.5 658.2,430.4 659.5,431.6 660.9,433.6 662.2,432.6 663.6,429 664.9,430.6 666.3,429.2 667.6,427.4 669,429 670.3,430.8 671.7,432.7 673,431.9 674.4,430.2 675.7,430.1 677.1,429.7 678.4,432.7 679.8,431 681.1,432.1 682.5,431.6 683.8,432.6 685.2,432.8 686.5,434.8 687.9,444.5 689.2,446.7 690.6,448.4 691.9,447.5 693.3,448.3 694.6,439.2 696,434.5 697.3,429.8 698.7,424.3 700,423 701.3,421.7 702.7,415.8 704,413.6 705.4,420.2 706.7,419.5 708.1,418.3 709.4,423.2 710.8,426.3 712.1,429.8 713.5,432.6 714.8,433.5 716.2,431.8 717.5,430.6 718.9,431.5 720.2,427.9 721.6,430.4 722.9,431.5 724.3,434.5 725.6,435.4 727,430.7 728.3,431.6 729.7,434.3 731,433.6 732.4,432.3 733.7,425.3 735.1,429.3 736.4,432.5 737.8,437.6 739.1,434.3 740.4,434 741.8,433.2 743.1,429.7 744.5,430.2 745.8,435.4 747.2,431.2 748.5,435.6 749.9,429.9 751.2,439.2 752.6,432.4 753.9,430.8 755.3,427.6 756.6,427.9 758,429.2 759.3,430.6 760.7,435.8 762,432.2 763.4,436.3 764.7,434.4 766.1,429.7 767.4,432.9 768.8,430.1 770.1,428.3 771.5,433 772.8,432.6 774.2,434.6 775.5,434 776.9,437.9 778.2,431.1 779.5,430 780.9,430.9 782.2,434.3 783.6,428.6 784.9,434.8 786.3,432.1 787.6,433.8 789,435.2 790.3,431.5 791.7,436.1 793,432.1 794.4,433.1 795.7,430.9 797.1,429 798.4,430.8 799.8,431.7 801.1,432.7 802.5,432.1 803.8,435.9 805.2,433.9 806.5,435.2 807.9,436.6 809.2,434.1 810.6,430.2 811.9,430.1 813.3,431.7 814.6,431.5 816,433.6 817.3,432.8 818.6,431.8 820,434.1 821.3,426.9 822.7,432.2 824,440.7 825.4,433.4 826.7,433.4 828.1,431.9 829.4,433 830.8,428 832.1,430.2 833.5,429.3 834.8,432.7 836.2,433.5 837.5,435.1 838.9,435.4 840.2,433.1 841.6,432.2 842.9,431.8 844.3,432.7 845.6,435.1 847,434.9 848.3,434.8 849.7,438.2 851,437.1 852.4,438.3 853.7,436.3 855.1,437.3 856.4,434.7 857.8,440.7 859.1,436.4 860.4,434.5 861.8,426.8 863.1,432.5 864.5,431.9 865.8,430.5 867.2,435.8 868.5,437.1 869.9,433.5 871.2,433.5 872.6,432.8 873.9,429.9 875.3,435.5 876.6,438 878,436.9 879.3,437.6 880.7,436 882,433.4 883.4,428.5 884.7,432.3 886.1,435.3 887.4,436.8 888.8,435.6 890.1,436.7 891.5,434.6 892.8,432.6 894.2,429.9 895.5,433.2 896.9,434.2 898.2,432.5 899.5,432 900.9,434.1 902.2,438.2 903.6,436.9 904.9,437.4 906.3,437.1 907.6,435 909,432 910.3,433.7 911.7,438.5 913,435.8 914.4,436 915.7,432.8 917.1,432.6 918.4,432.3 919.8,434.2 921.1,435.6 922.5,432.7 923.8,436.8 925.2,446.5 926.5,455.8 927.9,455.5 929.2,454.8 930.6,442.9 931.9,443.5 933.3,441.9 934.6,436.7 936,435.8 937.3,434" fill="none" stroke="#8ab8ff" stroke-width="1" stroke-linejoin="round"/>
<polyline points="102.7,386 104,384.2 105.4,387.6 106.7,391.6 108.1,391.6 109.4,393.5 110.8,383.4 112.1,391 113.5,386.8 114.8,392.5 116.2,397.2 117.5,394.8 118.9,398.1 120.2,400.4 121.6,403.6 122.9,398.8 124.3,397.9 125.6,396.7 127,400.9 128.3,401.3 129.7,400.6 131,393.1 132.4,397.5 133.7,394.8 135.1,399 136.4,403 137.8,407.8 139.1,400.2 140.5,386.1 141.8,394.1 143.1,400.2 144.5,399.7 145.8,397.8 147.2,407.7 148.5,407.2 149.9,413.2 151.2,412.7 152.6,415.5 153.9,405.5 155.3,403.4 156.6,399.9 158,410 159.3,402 160.7,416.4 162,460.6 163.4,438 164.7,432.7 166.1,413.9 167.4,429.2 168.8,408.1 170.1,428.2 171.5,405.3 172.8,418.5 174.2,423.2 175.5,471.3 176.9,439.5 178.2,412.6 179.6,406.6 180.9,400.3 182.2,402.6 183.6,391.9 184.9,392 186.3,399 187.6,398.3 189,399.9 190.3,402 191.7,395.7 193,403.6 194.4,404.9 195.7,396.5 197.1,402.7 198.4,407.6 199.8,396.5 201.1,395.6 202.5,398.5 203.8,397.8 205.2,400.1 206.5,396.1 207.9,399 209.2,401 210.6,399.3 211.9,399 213.3,399.4 214.6,400.1 216,397.5 217.3,397 218.7,399.5 220,396.4 221.4,398.5 222.7,399.7 224,401.7 225.4,399.1 226.7,399.3 228.1,400.7 229.4,398.2 230.8,397 232.1,401.2 233.5,401.4 234.8,393.7 236.2,399.6 237.5,400.1 238.9,400.2 240.2,398.1 241.6,398.2 242.9,400.6 244.3,394.2 245.6,395 247,399.8 248.3,395.9 249.7,399.8 251,399.3 252.4,392.1 253.7,395.1 255.1,392.9 256.4,394.6 257.8,394.5 259.1,392.6 260.5,397.1 261.8,389.5 263.1,393.5 264.5,421 265.8,403.7 267.2,426.3 268.5,403.5 269.9,417.9 271.2,403.8 272.6,417.9 273.9,396 275.3,433.3 276.6,465.5 278,476.1 279.3,415.8 280.7,399.9 282,394.2 283.4,401.1 284.7,403.1 286.1,416.2 287.4,398.4 288.8,418.5 290.1,431.3 291.5,441.9 292.8,411.7 294.2,397.7 295.5,393 296.9,395.1 298.2,391.8 299.6,392.4 300.9,389.2 302.2,392.7 303.6,392.4 304.9,390.8 306.3,391.2 307.6,394.5 309,399.9 310.3,397.4 311.7,391.4 313,400.1 314.4,394.7 315.7,391.2 317.1,388.1 318.4,394.7 319.8,398.9 321.1,394.8 322.5,392 323.8,382.2 325.2,396.9 326.5,399.4 327.9,392.5 329.2,399.5 330.6,392.4 331.9,395.6 333.3,391.1 334.6,399.2 336,396.2 337.3,393.5 338.7,388.9 340,396.3 341.3,400.3 342.7,397.3 344,399.8 345.4,397.9 346.7,389.8 348.1,397.2 349.4,400.1 350.8,394.8 352.1,401.1 353.5,395 354.8,397.6 356.2,399.9 357.5,402.3 358.9,400.7 360.2,396.9 361.6,396.4 362.9,399.2 364.3,389.4 365.6,396.4 367,391 368.3,396 369.7,397.2 371,399.6 372.4,398.9 373.7,394.9 375.1,400.1 376.4,399.4 377.8,398.7 379.1,400.1 380.5,397 381.8,394.3 383.1,397 384.5,395.1 385.8,396.1 387.2,396.9 388.5,394.2 389.9,395.6 391.2,387.7 392.6,395.1 393.9,403 395.3,403 396.6,402.2 398,398.8 399.3,386.9 400.7,389.9 402,388.5 403.4,396.2 404.7,393.9 406.1,387.4 407.4,391.4 408.8,397.5 410.1,392.1 411.5,398 412.8,390 414.2,387.6 415.5,388 416.9,391.1 418.2,387 419.6,386.6 420.9,380.3 422.2,385.8 423.6,397.6 424.9,396.3 426.3,392.6 427.6,397.6 429,395 430.3,393.1 431.7,391.3 433,402 434.4,399.1 435.7,396.5 437.1,393.8 438.4,388.7 439.8,394.7 441.1,392.2 442.5,384.1 443.8,386.9 445.2,390.5 446.5,392.5 447.9,393.2 449.2,390.7 450.6,392.2 451.9,387.9 453.3,383.5 454.6,387.5 456,393.7 457.3,389.9 458.7,399.7 460,401.2 461.3,409.2 462.7,404 464,401 465.4,396.9 466.7,393.3 468.1,395 469.4,392.3 470.8,392.1 472.1,384.7 473.5,383.8 474.8,386.4 476.2,386.4 477.5,390.6 478.9,393.6 480.2,393.8 481.6,394.9 482.9,395.7 484.3,392.4 485.6,386.9 487,384.8 488.3,387.4 489.7,391.6 491,398.2 492.4,396.5 493.7,397.8 495.1,397.3 496.4,392.6 497.8,394.4 499.1,396.1 500.4,379.2 501.8,385.9 503.1,387.4 504.5,374.8 505.8,372.1 507.2,388.1 508.5,384.1 509.9,388.7 511.2,390.6 512.6,391.4 513.9,390.5 515.3,399.5 516.6,393.4 518,391 519.3,390.9 520.7,391.4 522,387.7 523.4,389.8 524.7,389.4 526.1,390.7 527.4,391.7 528.8,389.5 530.1,387.2 531.5,388.2 532.8,393.5 534.2,392.4 535.5,398.4 536.9,389.6 538.2,387.2 539.6,389.3 540.9,389.4 542.2,397.5 543.6,392.2 544.9,399.9 546.3,391.9 547.6,382.5 549,388.4 550.3,386.9 551.7,385.3 553,387.3 554.4,385.7 555.7,387.7 557.1,385.3 558.4,388.2 559.8,388.9 561.1,385.5 562.5,393.6 563.8,393.7 565.2,397.9 566.5,396.3 567.9,397 569.2,394.1 570.6,392.2 571.9,388.5 573.3,393.8 574.6,392.3 576,399.4 577.3,402.2 578.7,395.6 580,389.2 581.3,391.8 582.7,390.6 584,387.2 585.4,384.8 586.7,391.2 588.1,393.8 589.4,401 590.8,399.7 592.1,401.4 593.5,397.6 594.8,394.6 596.2,387.8 597.5,390.9 598.9,399.7 600.2,399.7 601.6,395.6 602.9,398.6 604.3,399.2 605.6,392.5 607,395.5 608.3,394.1 609.7,391.9 611,397.7 612.4,390 613.7,393.9 615.1,395.5 616.4,391.8 617.8,386.1 619.1,398.3 620.4,397.3 621.8,389.6 623.1,397.9 624.5,398.5 625.8,399.7 627.2,394.6 628.5,398.3 629.9,393 631.2,392.5 632.6,390.4 633.9,397.8 635.3,394.9 636.6,386.8 638,387.3 639.3,392.5 640.7,393.6 642,394.3 643.4,396.8 644.7,385.1 646.1,386.1 647.4,384.3 648.8,389.5 650.1,399.1 651.5,396.1 652.8,390.2 654.2,389.6 655.5,383.3 656.9,383.1 658.2,388.8 659.5,393.2 660.9,401.4 662.2,399.7 663.6,392.9 664.9,394.6 666.3,394.8 667.6,396.4 669,393.5 670.3,396.6 671.7,394.3 673,396.1 674.4,396.8 675.7,392 677.1,391.4 678.4,398 679.8,397 681.1,398.2 682.5,395.1 683.8,396.4 685.2,399.4 686.5,407.9 687.9,411.7 689.2,418.7 690.6,425.5 691.9,419.1 693.3,415 694.6,405.2 696,403.8 697.3,391.9 698.7,389.5 700,389.8 701.3,382.6 702.7,377.3 704,374.2 705.4,377.2 706.7,375.9 708.1,372.5 709.4,384.9 710.8,393.4 712.1,391.7 713.5,394.2 714.8,397.9 716.2,398.5 717.5,396 718.9,390.7 720.2,387.6 721.6,389.4 722.9,388.9 724.3,399.3 725.6,402.6 727,399.8 728.3,398.2 729.7,407.2 731,398.6 732.4,397.7 733.7,387.9 735.1,393.2 736.4,395.7 737.8,398.3 739.1,404.2 740.4,400 741.8,394.6 743.1,392 744.5,395.2 745.8,393.7 747.2,392.7 748.5,395.3 749.9,389 751.2,401.9 752.6,393.7 753.9,389.5 755.3,384.6 756.6,390 758,394.1 759.3,395.9 760.7,398 762,401.9 763.4,399.7 764.7,396.9 766.1,395 767.4,401.2 768.8,394.6 770.1,390.1 771.5,396.6 772.8,399.7 774.2,400.3 775.5,400.4 776.9,405 778.2,403.1 779.5,393.2 780.9,393.5 782.2,396 783.6,395.2 784.9,403.4 786.3,399.2 787.6,399.8 789,399.2 790.3,396.3 791.7,400.3 793,399.2 794.4,394.1 795.7,395.2 797.1,393.3 798.4,389.4 799.8,398.5 801.1,398 802.5,394.2 803.8,398 805.2,398.2 806.5,404.1 807.9,403.2 809.2,397.1 810.6,395.9 811.9,391.8 813.3,391.7 814.6,396.3 816,395.4 817.3,396.1 818.6,396.1 820,397.7 821.3,392 822.7,400.2 824,405.3 825.4,394.2 826.7,399 828.1,395.8 829.4,398.7 830.8,388.8 832.1,393.8 833.5,394.7 834.8,398.5 836.2,400 837.5,399.9 838.9,393.9 840.2,393.3 841.6,389.2 842.9,398.3 844.3,397.8 845.6,399.5 847,395.5 848.3,398.9 849.7,401.1 851,398.5 852.4,393.1 853.7,401.3 855.1,405.9 856.4,400.9 857.8,405.3 859.1,400.7 860.4,399.5 861.8,393.1 863.1,399 864.5,401.5 865.8,397.9 867.2,402.3 868.5,400.9 869.9,397.1 871.2,396.1 872.6,395.8 873.9,397.5 875.3,401.3 876.6,402.6 878,401.4 879.3,401.7 880.7,398.1 882,399 883.4,394.5 884.7,391.8 886.1,398.2 887.4,400.5 888.8,402.6 890.1,402.4 891.5,397.7 892.8,394.6 894.2,392.3 895.5,393.3 896.9,399.3 898.2,397.5 899.5,399.1 900.9,398 902.2,402.6 903.6,403.8 904.9,399.2 906.3,400.1 907.6,402.5 909,399.3 910.3,396.1 911.7,401.2 913,400.4 914.4,406.9 915.7,401.4 917.1,399.8 918.4,404.5 919.8,398.8 921.1,403.9 922.5,397.5 923.8,407.3 925.2,418.6 926.5,432.5 927.9,430.6 929.2,427.7 930.6,415 931.9,413.8 933.3,407.8 934.6,397.4 936,398.5 937.3,397.7" fill="none" stroke="#6fbb63" stroke-width="1" stroke-linejoin="round"/>
<polyline points="102.7,341.5 104,340.9 105.4,349.4 106.7,344.5 108.1,346 109.4,351.2 110.8,338.2 112.1,352.5 113.5,343.2 114.8,348 116.2,357.8 117.5,356.9 118.9,358.2 120.2,358.1 121.6,359.7 122.9,358.2 124.3,359.8 125.6,361.6 127,361.9 128.3,366.2 129.7,369.9 131,354.3 132.4,365.2 133.7,367.8 135.1,354.2 136.4,374 137.8,372.7 139.1,367.4 140.5,349.6 141.8,358.2 143.1,365.5 144.5,361 145.8,357.4 147.2,366 148.5,373.6 149.9,371.7 151.2,371.2 152.6,375.3 153.9,367.3 155.3,361.6 156.6,363.3 158,366.3 159.3,362.9 160.7,366.2 162,377.1 163.4,388.8 164.7,378.7 166.1,373.4 167.4,373.8 168.8,367.1 170.1,368.1 171.5,362.4 172.8,359.5 174.2,361.5 175.5,372.2 176.9,365.4 178.2,366.4 179.6,372 180.9,364.4 182.2,350.2 183.6,353 184.9,344.2 186.3,351.4 187.6,359.1 189,368.1 190.3,367.1 191.7,354.6 193,366.4 194.4,363.9 195.7,343.2 197.1,357.4 198.4,369.6 199.8,360.6 201.1,360.7 202.5,363.2 203.8,362.4 205.2,369.8 206.5,353.5 207.9,361.7 209.2,360.5 210.6,359.7 211.9,359.2 213.3,363.9 214.6,363.8 216,361.9 217.3,355.9 218.7,362.5 220,383.3 221.4,370.2 222.7,366.2 224,358.6 225.4,362.6 226.7,359 228.1,369.7 229.4,362 230.8,359.1 232.1,362 233.5,373.2 234.8,352.8 236.2,358.1 237.5,363.6 238.9,367.3 240.2,361.5 241.6,363.3 242.9,373.3 244.3,368.1 245.6,354.3 247,364.9 248.3,342 249.7,359.9 251,357.5 252.4,349.2 253.7,360.5 255.1,354.3 256.4,351.9 257.8,363.1 259.1,361.3 260.5,366.8 261.8,359.4 263.1,360.9 264.5,365.4 265.8,368.7 267.2,375.5 268.5,362.9 269.9,366.3 271.2,365.1 272.6,363.7 273.9,358.6 275.3,368.7 276.6,377 278,374.6 279.3,365.6 280.7,345.6 282,348.7 283.4,351.5 284.7,358.5 286.1,365.2 287.4,356.2 288.8,365.6 290.1,371.4 291.5,369.6 292.8,354.9 294.2,359.1 295.5,355.7 296.9,361.3 298.2,352.3 299.6,347.8 300.9,350.9 302.2,369.6 303.6,359.5 304.9,351.5 306.3,351.1 307.6,354.8 309,377.2 310.3,364.4 311.7,357.8 313,365.4 314.4,354.9 315.7,347.4 317.1,348.3 318.4,361.6 319.8,369 321.1,360.1 322.5,353.1 323.8,343.6 325.2,357.3 326.5,363.8 327.9,365.7 329.2,368.2 330.6,346.2 331.9,343.5 333.3,347.7 334.6,352.1 336,349 337.3,352.1 338.7,346.4 340,358.8 341.3,363.1 342.7,368.7 344,363.9 345.4,363.5 346.7,359.4 348.1,363.8 349.4,365.6 350.8,353.1 352.1,367.1 353.5,353.4 354.8,356.8 356.2,358.2 357.5,362.3 358.9,365.8 360.2,365.8 361.6,359.8 362.9,368.2 364.3,361 365.6,358.1 367,350.6 368.3,367.7 369.7,358.4 371,364.1 372.4,352.5 373.7,361.9 375.1,361.8 376.4,377 377.8,371.3 379.1,377.9 380.5,366.8 381.8,368.4 383.1,364.4 384.5,360.2 385.8,347.2 387.2,359.5 388.5,353.1 389.9,364.1 391.2,356 392.6,357.6 393.9,369.6 395.3,374.2 396.6,362 398,355.4 399.3,347 400.7,355.4 402,351.7 403.4,361.7 404.7,356.7 406.1,354.4 407.4,354.7 408.8,362.7 410.1,371.5 411.5,372.7 412.8,364.4 414.2,353.4 415.5,341.7 416.9,351.1 418.2,343.1 419.6,344.9 420.9,348.3 422.2,346.7 423.6,366.3 424.9,368.3 426.3,359.6 427.6,366.1 429,355.9 430.3,352.4 431.7,357.8 433,366.2 434.4,361.9 435.7,356 437.1,356.7 438.4,354.5 439.8,348.6 441.1,341.2 442.5,346.6 443.8,350.8 445.2,349.7 446.5,354.7 447.9,353.7 449.2,354.4 450.6,356.1 451.9,354.3 453.3,349.2 454.6,353.8 456,365.3 457.3,359.7 458.7,374.2 460,375 461.3,372.8 462.7,373.7 464,371.2 465.4,364.1 466.7,363 468.1,358 469.4,360 470.8,344.1 472.1,342.1 473.5,346.6 474.8,348.7 476.2,341.7 477.5,343.2 478.9,370.8 480.2,362.8 481.6,363.6 482.9,351.4 484.3,338 485.6,348.2 487,349.1 488.3,350 489.7,349.5 491,356.7 492.4,358.2 493.7,363.9 495.1,360.3 496.4,354.8 497.8,352.9 499.1,368.3 500.4,341.5 501.8,351.5 503.1,348.2 504.5,325.8 505.8,324.2 507.2,352.5 508.5,346 509.9,353.1 511.2,358.2 512.6,356.6 513.9,354.7 515.3,366.8 516.6,353.4 518,356.4 519.3,353.5 520.7,355.4 522,361.5 523.4,352.3 524.7,358.4 526.1,361.4 527.4,349 528.8,349.9 530.1,347.5 531.5,346.8 532.8,354.5 534.2,360.7 535.5,356.7 536.9,345.6 538.2,350.5 539.6,356.9 540.9,350.4 542.2,362.8 543.6,353.2 544.9,365.6 546.3,356.8 547.6,340.2 549,344.3 550.3,345.3 551.7,344.1 553,340.9 554.4,330.5 555.7,342.9 557.1,346.5 558.4,348.3 559.8,344.5 561.1,338.9 562.5,348.7 563.8,352.4 565.2,359.8 566.5,359.9 567.9,354.7 569.2,360.6 570.6,366.4 571.9,359.5 573.3,358 574.6,342.4 576,360.2 577.3,363.6 578.7,356 580,346.6 581.3,358.4 582.7,354.5 584,359.8 585.4,347.2 586.7,354.3 588.1,353.6 589.4,358.1 590.8,363.8 592.1,374.5 593.5,365.1 594.8,362 596.2,354.9 597.5,351.3 598.9,357.3 600.2,353.4 601.6,354.1 602.9,358.3 604.3,361.1 605.6,358.6 607,356.7 608.3,360.5 609.7,347.9 611,353.7 612.4,350.4 613.7,361.7 615.1,367.8 616.4,353.9 617.8,342.6 619.1,353.7 620.4,358.2 621.8,356.2 623.1,362.9 624.5,360.9 625.8,361.4 627.2,352.6 628.5,359.1 629.9,361.9 631.2,360.1 632.6,358.2 633.9,361.5 635.3,358.8 636.6,351.9 638,345.9 639.3,350.6 640.7,356.7 642,357.9 643.4,344.2 644.7,342 646.1,348 647.4,348.5 648.8,359.9 650.1,364.1 651.5,347.1 652.8,349.5 654.2,349.1 655.5,343.5 656.9,335.9 658.2,357.1 659.5,365.6 660.9,376.1 662.2,379.5 663.6,365 664.9,367.5 666.3,356.9 667.6,369.1 669,362.4 670.3,367 671.7,357.2 673,355.9 674.4,362.7 675.7,352.5 677.1,349.4 678.4,352.2 679.8,355.1 681.1,360.2 682.5,362.1 683.8,351.7 685.2,355.7 686.5,370.2 687.9,369.5 689.2,385.4 690.6,393 691.9,381.5 693.3,381.1 694.6,366.9 696,366.4 697.3,358.6 698.7,347.2 700,346.6 701.3,342.1 702.7,327.8 704,332 705.4,334.6 706.7,328 708.1,332.2 709.4,345.1 710.8,358 712.1,344.3 713.5,352.9 714.8,354.6 716.2,355.1 717.5,358.5 718.9,358.8 720.2,352.8 721.6,356.9 722.9,359.5 724.3,374.3 725.6,374.7 727,370.9 728.3,368.3 729.7,374.6 731,362.2 732.4,359.6 733.7,350.3 735.1,359 736.4,364.4 737.8,362.4 739.1,365.3 740.4,363.3 741.8,356.7 743.1,353.3 744.5,353.1 745.8,348.1 747.2,354.2 748.5,362.3 749.9,360.1 751.2,366.3 752.6,356 753.9,353.8 755.3,352.9 756.6,358.2 758,360 759.3,368.4 760.7,363.7 762,366.2 763.4,362.3 764.7,356.5 766.1,357.7 767.4,360.2 768.8,360 770.1,360.5 771.5,359.2 772.8,363.5 774.2,363.5 775.5,360 776.9,366.7 778.2,365 779.5,354.9 780.9,357.8 782.2,358.1 783.6,352.8 784.9,367.8 786.3,354 787.6,348.5 789,354.2 790.3,356 791.7,363.2 793,364.7 794.4,356.4 795.7,363.2 797.1,353.9 798.4,364 799.8,366.2 801.1,358.7 802.5,351.4 803.8,359.3 805.2,372.2 806.5,375.6 807.9,361.6 809.2,368.7 810.6,368.6 811.9,361.6 813.3,359.1 814.6,363.7 816,357.3 817.3,359 818.6,356.6 820,366.1 821.3,354.7 822.7,365.1 824,362.7 825.4,359.3 826.7,363.9 828.1,362.8 829.4,361.5 830.8,350.6 832.1,361.7 833.5,364 834.8,363.4 836.2,364.4 837.5,371.1 838.9,359.4 840.2,364 841.6,362.3 842.9,368.9 844.3,371.2 845.6,372.6 847,361.8 848.3,367.6 849.7,363.7 851,365 852.4,360.3 853.7,375.4 855.1,377.7 856.4,366.3 857.8,369 859.1,362.6 860.4,360.7 861.8,359.4 863.1,366.6 864.5,365.8 865.8,355.7 867.2,358.2 868.5,367.4 869.9,364.1 871.2,361.7 872.6,354.5 873.9,359.7 875.3,364.1 876.6,367.2 878,363.2 879.3,364.7 880.7,356.5 882,357.7 883.4,356.1 884.7,357.4 886.1,363.1 887.4,368.6 888.8,369.5 890.1,365.8 891.5,364.2 892.8,352.5 894.2,352.7 895.5,355.5 896.9,373.8 898.2,367.6 899.5,367.1 900.9,361.3 902.2,367.4 903.6,368 904.9,370.5 906.3,370.2 907.6,358.6 909,356.5 910.3,358 911.7,367 913,363.5 914.4,372.2 915.7,361.1 917.1,359.3 918.4,371.9 919.8,363.8 921.1,374 922.5,370.7 923.8,358.5 925.2,382.8 926.5,386.1 927.9,383.3 929.2,380 930.6,376.1 931.9,373.3 933.3,364.8 934.6,346.4 936,366.2 937.3,358" fill="none" stroke="#96d98d" stroke-width="1" stroke-linejoin="round"/>
<line x1="102.7" y1="478.1" x2="937.3" y2="478.1" stroke="rgba(255,255,255,0.06)" stroke-width="1"/>
<line x1="102.7" y1="451.9" x2="937.3" y2="451.9" stroke="rgba(255,255,255,0.06)" stroke-width="1"/>
<line x1="102.7" y1="425.6" x2="937.3" y2="425.6" stroke="rgba(255,255,255,0.06)" stroke-width="1"/>
<line x1="102.7" y1="399.4" x2="937.3" y2="399.4" stroke="rgba(255,255,255,0.06)" stroke-width="1"/>
<line x1="102.7" y1="373.1" x2="937.3" y2="373.1" stroke="rgba(255,255,255,0.06)" stroke-width="1"/>
<line x1="102.7" y1="346.9" x2="937.3" y2="346.9" stroke="rgba(255,255,255,0.06)" stroke-width="1"/>
<line x1="143.7" y1="320" x2="143.7" y2="504" stroke="rgba(255,255,255,0.06)" stroke-width="1"/>
<line x1="190.2" y1="320" x2="190.2" y2="504" stroke="rgba(255,255,255,0.06)" stroke-width="1"/>
<line x1="236.6" y1="320" x2="236.6" y2="504" stroke="rgba(255,255,255,0.06)" stroke-width="1"/>
<line x1="283.1" y1="320" x2="283.1" y2="504" stroke="rgba(255,255,255,0.06)" stroke-width="1"/>
<line x1="329.5" y1="320" x2="329.5" y2="504" stroke="rgba(255,255,255,0.06)" stroke-width="1"/>
<line x1="376" y1="320" x2="376" y2="504" stroke="rgba(255,255,255,0.06)" stroke-width="1"/>
<line x1="422.5" y1="320" x2="422.5" y2="504" stroke="rgba(255,255,255,0.06)" stroke-width="1"/>
<line x1="468.9" y1="320" x2="468.9" y2="504" stroke="rgba(255,255,255,0.06)" stroke-width="1"/>
<line x1="515.4" y1="320" x2="515.4" y2="504" stroke="rgba(255,255,255,0.06)" stroke-width="1"/>
<line x1="561.8" y1="320" x2="561.8" y2="504" stroke="rgba(255,255,255,0.06)" stroke-width="1"/>
<line x1="608.3" y1="320" x2="608.3" y2="504" stroke="rgba(255,255,255,0.06)" stroke-width="1"/>
<line x1="654.7" y1="320" x2="654.7" y2="504" stroke="rgba(255,255,255,0.06)" stroke-width="1"/>
<line x1="701.2" y1="320" x2="701.2" y2="504" stroke="rgba(255,255,255,0.06)" stroke-width="1"/>
<line x1="747.7" y1="320" x2="747.7" y2="504" stroke="rgba(255,255,255,0.06)" stroke-width="1"/>
<line x1="794.1" y1="320" x2="794.1" y2="504" stroke="rgba(255,255,255,0.06)" stroke-width="1"/>
<line x1="840.6" y1="320" x2="840.6" y2="504" stroke="rgba(255,255,255,0.06)" stroke-width="1"/>
<line x1="887" y1="320" x2="887" y2="504" stroke="rgba(255,255,255,0.06)" stroke-width="1"/>
<line x1="933.5" y1="320" x2="933.5" y2="504" stroke="rgba(255,255,255,0.06)" stroke-width="1"/>
<rect x="950.6" y="306.6" width="11.8" height="3.4" rx="0.8" fill="#5794f2"/>
<text x="968" y="311.7" font-size="10" fill="#c7c7d1" text-anchor="start" font-weight="normal" textLength="66" lengthAdjust="spacingAndGlyphs">web_server_01</text>
<rect x="950.6" y="324.4" width="11.8" height="3.4" rx="0.8" fill="#8ab8ff"/>
<text x="968" y="329.5" font-size="10" fill="#c7c7d1" text-anchor="start" font-weight="normal" textLength="66" lengthAdjust="spacingAndGlyphs">web_server_02</text>
<rect x="950.6" y="342.1" width="11.8" height="3.4" rx="0.8" fill="#56a64b"/>
<text x="968" y="347.2" font-size="10" fill="#c7c7d1" text-anchor="start" font-weight="normal" textLength="66" lengthAdjust="spacingAndGlyphs">web_server_03</text>
<rect x="950.6" y="359.9" width="11.8" height="3.4" rx="0.8" fill="#96d98d"/>
<text x="968" y="365" font-size="10" fill="#c7c7d1" text-anchor="start" font-weight="normal" textLength="66" lengthAdjust="spacingAndGlyphs">web_server_04</text>
<text x="143.5" y="602.5" font-size="10.2" fill="#c2c2cc" text-anchor="end" font-weight="normal" textLength="70.4" lengthAdjust="spacingAndGlyphs">Backend-ops-01</text>
<path d="M240.3 585h15.3v29.3h-15.3zM265.4 585h11.5v29.3h-11.5zM278.2 585h1.8v29.3h-1.8zM302.1 585h118.4v29.3h-118.4zM441.8 585h156.4v29.3h-156.4zM604 585h2v29.3h-2zM610.3 585h22v29.3h-22zM633.2 585h1.4v29.3h-1.4zM636.9 585h2.6v29.3h-2.6zM640.5 585h1.3v29.3h-1.3zM642.5 585h8v29.3h-8zM653.6 585h95.4v29.3h-95.4zM762 585h12v29.3h-12zM774.8 585h14.2v29.3h-14.2zM810 585h36.7v29.3h-36.7zM854 585h8.6v29.3h-8.6zM863.6 585h1.4v29.3h-1.4zM866.5 585h3.5v29.3h-3.5zM878.4 585h4.6v29.3h-4.6zM884 585h92.8v29.3h-92.8z" fill="#588e53"/>
<path d="M157.2 585h80v29.3h-80zM282.6 585h12.3v29.3h-12.3zM423 585h2v29.3h-2zM432.8 585h3.9v29.3h-3.9zM792 585h17v29.3h-17zM848 585h1v29.3h-1z" fill="#b13b4a"/>
<path d="M237.2 585h3.1v29.3h-3.1zM255.6 585h9.8v29.3h-9.8zM276.9 585h1.3v29.3h-1.3zM280 585h2.6v29.3h-2.6zM294.9 585h7.2v29.3h-7.2zM420.5 585h2.5v29.3h-2.5zM425 585h7.8v29.3h-7.8zM436.7 585h5.1v29.3h-5.1zM598.2 585h5.8v29.3h-5.8zM606 585h4.3v29.3h-4.3zM632.3 585h0.9v29.3h-0.9zM634.6 585h2.3v29.3h-2.3zM639.5 585h1v29.3h-1zM641.8 585h0.7v29.3h-0.7zM650.5 585h3.1v29.3h-3.1zM749 585h13v29.3h-13zM774 585h0.8v29.3h-0.8zM789 585h3v29.3h-3zM809 585h1v29.3h-1zM846.7 585h1.3v29.3h-1.3zM849 585h5v29.3h-5zM862.6 585h1v29.3h-1zM865 585h1.5v29.3h-1.5zM870 585h8.4v29.3h-8.4zM883 585h1v29.3h-1z" fill="#ba732b"/>
<text x="143.5" y="636.1" font-size="10.2" fill="#c2c2cc" text-anchor="end" font-weight="normal" textLength="70.4" lengthAdjust="spacingAndGlyphs">Backend-ops-02</text>
<path d="M157.2 618.6h108.2v29.3h-108.2zM269.2 618.6h1.3v29.3h-1.3zM276.2 618.6h1.2v29.3h-1.2zM279 618.6h23.8v29.3h-23.8zM304.9 618.6h100.2v29.3h-100.2zM411.5 618.6h1.5v29.3h-1.5zM416 618.6h2v29.3h-2zM432.8 618.6h2.1v29.3h-2.1zM438.5 618.6h4.5v29.3h-4.5zM461 618.6h1.3v29.3h-1.3zM471.3 618.6h79v29.3h-79zM553.3 618.6h6.7v29.3h-6.7zM583 618.6h1v29.3h-1zM588.5 618.6h49.5v29.3h-49.5z" fill="#588e53"/>
<path d="M273.1 618.6h1.3v29.3h-1.3zM408.2 618.6h2.1v29.3h-2.1zM421.3 618.6h6.4v29.3h-6.4zM447.4 618.6h8.5v29.3h-8.5zM571.3 618.6h5.9v29.3h-5.9zM644.6 618.6h108.4v29.3h-108.4zM756 618.6h190.4v29.3h-190.4zM949.5 618.6h1.5v29.3h-1.5zM953 618.6h23.8v29.3h-23.8z" fill="#b13b4a"/>
<path d="M265.4 618.6h3.8v29.3h-3.8zM270.5 618.6h2.6v29.3h-2.6zM274.4 618.6h1.8v29.3h-1.8zM277.4 618.6h1.6v29.3h-1.6zM302.8 618.6h2.1v29.3h-2.1zM405.1 618.6h3.1v29.3h-3.1zM410.3 618.6h1.2v29.3h-1.2zM413 618.6h3v29.3h-3zM418 618.6h3.3v29.3h-3.3zM427.7 618.6h5.1v29.3h-5.1zM434.9 618.6h3.6v29.3h-3.6zM443 618.6h4.4v29.3h-4.4zM455.9 618.6h5.1v29.3h-5.1zM462.3 618.6h9v29.3h-9zM550.3 618.6h3v29.3h-3zM560 618.6h11.3v29.3h-11.3zM577.2 618.6h5.8v29.3h-5.8zM584 618.6h4.5v29.3h-4.5zM638 618.6h6.6v29.3h-6.6zM753 618.6h3v29.3h-3zM946.4 618.6h3.1v29.3h-3.1zM951 618.6h2v29.3h-2z" fill="#ba732b"/>
<text x="143.5" y="669.8" font-size="10.2" fill="#c2c2cc" text-anchor="end" font-weight="normal" textLength="70.4" lengthAdjust="spacingAndGlyphs">Backend-ops-03</text>
<path d="M157.2 652.2h5.1v29.3h-5.1zM163.3 652.2h1.3v29.3h-1.3zM172.6 652.2h1v29.3h-1zM194 652.2h2v29.3h-2zM197 652.2h5v29.3h-5zM203 652.2h3v29.3h-3zM209 652.2h3v29.3h-3zM217 652.2h75v29.3h-75zM294 652.2h1v29.3h-1zM297 652.2h1v29.3h-1zM308 652.2h1v29.3h-1zM384.6 652.2h7.4v29.3h-7.4zM413 652.2h40v29.3h-40zM460 652.2h46.4v29.3h-46.4zM809 652.2h7.8v29.3h-7.8zM827 652.2h60.5v29.3h-60.5zM890 652.2h2v29.3h-2zM953 652.2h5v29.3h-5zM959 652.2h4v29.3h-4zM970 652.2h3v29.3h-3z" fill="#588e53"/>
<path d="M181 652.2h9v29.3h-9zM314.1 652.2h3.9v29.3h-3.9zM319 652.2h8v29.3h-8zM343 652.2h38v29.3h-38zM396 652.2h14v29.3h-14zM512 652.2h1v29.3h-1zM516 652.2h2v29.3h-2zM520 652.2h268v29.3h-268zM793.3 652.2h3.7v29.3h-3.7zM798 652.2h5v29.3h-5zM819.6 652.2h2.4v29.3h-2.4zM895.6 652.2h49.4v29.3h-49.4zM949.2 652.2h3.8v29.3h-3.8z" fill="#b13b4a"/>
<path d="M162.3 652.2h1v29.3h-1zM164.6 652.2h8v29.3h-8zM173.6 652.2h7.4v29.3h-7.4zM190 652.2h4v29.3h-4zM196 652.2h1v29.3h-1zM202 652.2h1v29.3h-1zM206 652.2h3v29.3h-3zM212 652.2h5v29.3h-5zM292 652.2h2v29.3h-2zM295 652.2h2v29.3h-2zM298 652.2h10v29.3h-10zM309 652.2h5.1v29.3h-5.1zM318 652.2h1v29.3h-1zM327 652.2h16v29.3h-16zM381 652.2h3.6v29.3h-3.6zM392 652.2h4v29.3h-4zM410 652.2h3v29.3h-3zM453 652.2h7v29.3h-7zM506.4 652.2h5.6v29.3h-5.6zM513 652.2h3v29.3h-3zM518 652.2h2v29.3h-2zM788 652.2h5.3v29.3h-5.3zM797 652.2h1v29.3h-1zM803 652.2h6v29.3h-6zM816.8 652.2h2.8v29.3h-2.8zM822 652.2h5v29.3h-5zM887.5 652.2h2.5v29.3h-2.5zM892 652.2h3.6v29.3h-3.6zM945 652.2h4.2v29.3h-4.2zM958 652.2h1v29.3h-1zM963 652.2h7v29.3h-7zM973 652.2h3.8v29.3h-3.8z" fill="#ba732b"/>
<text x="143.5" y="703.3" font-size="10.2" fill="#c2c2cc" text-anchor="end" font-weight="normal" textLength="70.4" lengthAdjust="spacingAndGlyphs">Backend-ops-04</text>
<path d="M157.2 685.8h58.8v29.3h-58.8zM222 685.8h10v29.3h-10zM240 685.8h1v29.3h-1zM263.6 685.8h13.4v29.3h-13.4zM402 685.8h3v29.3h-3zM406 685.8h16v29.3h-16zM423 685.8h2v29.3h-2zM427 685.8h76.6v29.3h-76.6zM506.4 685.8h1.6v29.3h-1.6zM510 685.8h3v29.3h-3zM514 685.8h79.6v29.3h-79.6zM604.6 685.8h3.4v29.3h-3.4zM615 685.8h4.7v29.3h-4.7zM620.5 685.8h86.2v29.3h-86.2zM710.8 685.8h1.2v29.3h-1.2zM714 685.8h5v29.3h-5zM745 685.8h2v29.3h-2zM749 685.8h2v29.3h-2zM754 685.8h6v29.3h-6zM762 685.8h4v29.3h-4zM769 685.8h19v29.3h-19zM789 685.8h6v29.3h-6zM799 685.8h9v29.3h-9zM814 685.8h6.5v29.3h-6.5zM821.5 685.8h8.5v29.3h-8.5zM831 685.8h5v29.3h-5zM958.7 685.8h1.3v29.3h-1.3zM961 685.8h15.8v29.3h-15.8z" fill="#588e53"/>
<path d="M246 685.8h15.5v29.3h-15.5zM281 685.8h69v29.3h-69zM351.5 685.8h22.5v29.3h-22.5zM390 685.8h2v29.3h-2zM393 685.8h3v29.3h-3zM722 685.8h3v29.3h-3zM726 685.8h12v29.3h-12zM841 685.8h49v29.3h-49zM893 685.8h1v29.3h-1zM896 685.8h3v29.3h-3zM908.6 685.8h41.9v29.3h-41.9z" fill="#b13b4a"/>
<path d="M216 685.8h6v29.3h-6zM232 685.8h8v29.3h-8zM241 685.8h5v29.3h-5zM261.5 685.8h2.1v29.3h-2.1zM277 685.8h4v29.3h-4zM350 685.8h1.5v29.3h-1.5zM374 685.8h16v29.3h-16zM392 685.8h1v29.3h-1zM396 685.8h6v29.3h-6zM405 685.8h1v29.3h-1zM422 685.8h1v29.3h-1zM425 685.8h2v29.3h-2zM503.6 685.8h2.8v29.3h-2.8zM508 685.8h2v29.3h-2zM513 685.8h1v29.3h-1zM593.6 685.8h11v29.3h-11zM608 685.8h7v29.3h-7zM619.7 685.8h0.8v29.3h-0.8zM706.7 685.8h4.1v29.3h-4.1zM712 685.8h2v29.3h-2zM719 685.8h3v29.3h-3zM725 685.8h1v29.3h-1zM738 685.8h7v29.3h-7zM747 685.8h2v29.3h-2zM751 685.8h3v29.3h-3zM760 685.8h2v29.3h-2zM766 685.8h3v29.3h-3zM788 685.8h1v29.3h-1zM795 685.8h4v29.3h-4zM808 685.8h6v29.3h-6zM820.5 685.8h1v29.3h-1zM830 685.8h1v29.3h-1zM836 685.8h5v29.3h-5zM890 685.8h3v29.3h-3zM894 685.8h2v29.3h-2zM899 685.8h9.6v29.3h-9.6zM950.5 685.8h8.2v29.3h-8.2zM960 685.8h1v29.3h-1z" fill="#ba732b"/>
<text x="143.5" y="736.9" font-size="10.2" fill="#c2c2cc" text-anchor="end" font-weight="normal" textLength="73.8" lengthAdjust="spacingAndGlyphs">Frontend-web-01</text>
<path d="M157.2 719.4h18.2v29.3h-18.2zM176.3 719.4h0.7v29.3h-0.7zM190 719.4h57.7v29.3h-57.7zM248.4 719.4h39.8v29.3h-39.8zM316 719.4h5v29.3h-5zM331 719.4h3.6v29.3h-3.6zM441 719.4h4.9v29.3h-4.9zM463 719.4h4v29.3h-4zM528.5 719.4h10v29.3h-10zM566 719.4h1v29.3h-1zM612.3 719.4h6.7v29.3h-6.7zM636.4 719.4h238.6v29.3h-238.6zM883 719.4h27.5v29.3h-27.5zM911.5 719.4h65.3v29.3h-65.3z" fill="#588e53"/>
<path d="M185.4 719.4h1v29.3h-1zM303 719.4h10v29.3h-10zM340 719.4h95.9v29.3h-95.9zM447 719.4h7v29.3h-7zM456.4 719.4h1.1v29.3h-1.1zM478 719.4h11v29.3h-11zM492 719.4h2v29.3h-2zM497.4 719.4h21.1v29.3h-21.1zM540 719.4h3v29.3h-3zM546 719.4h2v29.3h-2zM553 719.4h3v29.3h-3zM560 719.4h2v29.3h-2zM570.5 719.4h30.8v29.3h-30.8zM602.6 719.4h2.4v29.3h-2.4zM624.6 719.4h6.9v29.3h-6.9z" fill="#b13b4a"/>
<path d="M175.4 719.4h0.9v29.3h-0.9zM177 719.4h8.4v29.3h-8.4zM186.4 719.4h3.6v29.3h-3.6zM247.7 719.4h0.7v29.3h-0.7zM288.2 719.4h14.8v29.3h-14.8zM313 719.4h3v29.3h-3zM321 719.4h10v29.3h-10zM334.6 719.4h5.4v29.3h-5.4zM435.9 719.4h5.1v29.3h-5.1zM445.9 719.4h1.1v29.3h-1.1zM454 719.4h2.4v29.3h-2.4zM457.5 719.4h5.5v29.3h-5.5zM467 719.4h11v29.3h-11zM489 719.4h3v29.3h-3zM494 719.4h3.4v29.3h-3.4zM518.5 719.4h10v29.3h-10zM538.5 719.4h1.5v29.3h-1.5zM543 719.4h3v29.3h-3zM548 719.4h5v29.3h-5zM556 719.4h4v29.3h-4zM562 719.4h4v29.3h-4zM567 719.4h3.5v29.3h-3.5zM601.3 719.4h1.3v29.3h-1.3zM605 719.4h7.3v29.3h-7.3zM619 719.4h5.6v29.3h-5.6zM631.5 719.4h4.9v29.3h-4.9zM875 719.4h8v29.3h-8zM910.5 719.4h1v29.3h-1z" fill="#ba732b"/>
<text x="143.5" y="770.5" font-size="10.2" fill="#c2c2cc" text-anchor="end" font-weight="normal" textLength="73.8" lengthAdjust="spacingAndGlyphs">Frontend-web-02</text>
<path d="M259.5 753h58.5v29.3h-58.5zM355 753h3v29.3h-3zM360 753h2v29.3h-2zM462 753h117v29.3h-117zM581 753h2v29.3h-2zM585 753h6v29.3h-6zM618 753h16v29.3h-16zM832 753h4v29.3h-4zM840 753h5v29.3h-5z" fill="#588e53"/>
<path d="M157.2 753h100.8v29.3h-100.8zM322 753h23v29.3h-23zM350 753h2v29.3h-2zM363 753h97v29.3h-97zM600 753h4v29.3h-4zM644 753h5.5v29.3h-5.5zM664 753h2v29.3h-2zM671 753h41v29.3h-41zM715 753h1v29.3h-1zM719 753h7v29.3h-7zM727 753h3v29.3h-3zM731 753h17v29.3h-17zM761 753h1v29.3h-1zM764 753h6v29.3h-6zM777 753h16v29.3h-16zM798 753h8v29.3h-8zM809 753h2v29.3h-2zM820 753h5v29.3h-5zM848 753h128.8v29.3h-128.8z" fill="#b13b4a"/>
<path d="M258 753h1.5v29.3h-1.5zM318 753h4v29.3h-4zM345 753h5v29.3h-5zM352 753h3v29.3h-3zM358 753h2v29.3h-2zM362 753h1v29.3h-1zM460 753h2v29.3h-2zM579 753h2v29.3h-2zM583 753h2v29.3h-2zM591 753h9v29.3h-9zM604 753h14v29.3h-14zM634 753h10v29.3h-10zM649.5 753h14.5v29.3h-14.5zM666 753h5v29.3h-5zM712 753h3v29.3h-3zM716 753h3v29.3h-3zM726 753h1v29.3h-1zM730 753h1v29.3h-1zM748 753h13v29.3h-13zM762 753h2v29.3h-2zM770 753h7v29.3h-7zM793 753h5v29.3h-5zM806 753h3v29.3h-3zM811 753h9v29.3h-9zM825 753h7v29.3h-7zM836 753h4v29.3h-4zM845 753h3v29.3h-3z" fill="#ba732b"/>
<line x1="199.3" y1="585" x2="199.3" y2="790" stroke="rgba(255,255,255,0.05)" stroke-width="1"/>
<line x1="244.9" y1="585" x2="244.9" y2="790" stroke="rgba(255,255,255,0.05)" stroke-width="1"/>
<line x1="290.4" y1="585" x2="290.4" y2="790" stroke="rgba(255,255,255,0.05)" stroke-width="1"/>
<line x1="335.9" y1="585" x2="335.9" y2="790" stroke="rgba(255,255,255,0.05)" stroke-width="1"/>
<line x1="381.5" y1="585" x2="381.5" y2="790" stroke="rgba(255,255,255,0.05)" stroke-width="1"/>
<line x1="427.1" y1="585" x2="427.1" y2="790" stroke="rgba(255,255,255,0.05)" stroke-width="1"/>
<line x1="472.6" y1="585" x2="472.6" y2="790" stroke="rgba(255,255,255,0.05)" stroke-width="1"/>
<line x1="518.1" y1="585" x2="518.1" y2="790" stroke="rgba(255,255,255,0.05)" stroke-width="1"/>
<line x1="563.7" y1="585" x2="563.7" y2="790" stroke="rgba(255,255,255,0.05)" stroke-width="1"/>
<line x1="609.2" y1="585" x2="609.2" y2="790" stroke="rgba(255,255,255,0.05)" stroke-width="1"/>
<line x1="654.8" y1="585" x2="654.8" y2="790" stroke="rgba(255,255,255,0.05)" stroke-width="1"/>
<line x1="700.3" y1="585" x2="700.3" y2="790" stroke="rgba(255,255,255,0.05)" stroke-width="1"/>
<line x1="745.9" y1="585" x2="745.9" y2="790" stroke="rgba(255,255,255,0.05)" stroke-width="1"/>
<line x1="791.5" y1="585" x2="791.5" y2="790" stroke="rgba(255,255,255,0.05)" stroke-width="1"/>
<line x1="837" y1="585" x2="837" y2="790" stroke="rgba(255,255,255,0.05)" stroke-width="1"/>
<line x1="882.5" y1="585" x2="882.5" y2="790" stroke="rgba(255,255,255,0.05)" stroke-width="1"/>
<line x1="928.1" y1="585" x2="928.1" y2="790" stroke="rgba(255,255,255,0.05)" stroke-width="1"/>
<line x1="973.6" y1="585" x2="973.6" y2="790" stroke="rgba(255,255,255,0.05)" stroke-width="1"/>
<rect x="989.6" y="584.2" width="11" height="3.3" rx="0.8" fill="#5794f2"/>
<text x="1007.6" y="588.9" font-size="9.8" fill="#c7c7d1" text-anchor="start" font-weight="normal">&lt; 10%</text>
<rect x="989.6" y="602" width="11" height="3.3" rx="0.8" fill="#73bf69"/>
<text x="1007.6" y="606.6" font-size="9.8" fill="#c7c7d1" text-anchor="start" font-weight="normal">10%+</text>
<rect x="989.6" y="619.7" width="11" height="3.3" rx="0.8" fill="#ff9830"/>
<text x="1007.6" y="624.4" font-size="9.8" fill="#c7c7d1" text-anchor="start" font-weight="normal">60%+</text>
<rect x="989.6" y="637.5" width="11" height="3.3" rx="0.8" fill="#f2495c"/>
<text x="1007.6" y="642.1" font-size="9.8" fill="#c7c7d1" text-anchor="start" font-weight="normal">70%+</text>
<rect x="1057" y="572.2" width="488" height="26.5" fill="#22252b"/>
<line x1="1193.3" y1="572.2" x2="1193.3" y2="790" stroke="rgba(204,204,220,0.07)" stroke-width="1"/>
<line x1="1278.3" y1="572.2" x2="1278.3" y2="790" stroke="rgba(204,204,220,0.07)" stroke-width="1"/>
<line x1="1341.8" y1="572.2" x2="1341.8" y2="790" stroke="rgba(204,204,220,0.07)" stroke-width="1"/>
<line x1="1057" y1="626.5" x2="1538" y2="626.5" stroke="rgba(204,204,220,0.07)" stroke-width="1"/>
<line x1="1057" y1="654.9" x2="1538" y2="654.9" stroke="rgba(204,204,220,0.07)" stroke-width="1"/>
<line x1="1057" y1="683.3" x2="1538" y2="683.3" stroke="rgba(204,204,220,0.07)" stroke-width="1"/>
<line x1="1057" y1="711.7" x2="1538" y2="711.7" stroke="rgba(204,204,220,0.07)" stroke-width="1"/>
<line x1="1057" y1="740.1" x2="1538" y2="740.1" stroke="rgba(204,204,220,0.07)" stroke-width="1"/>
<line x1="1057" y1="768.5" x2="1538" y2="768.5" stroke="rgba(204,204,220,0.07)" stroke-width="1"/>
<line x1="1057" y1="796.9" x2="1538" y2="796.9" stroke="rgba(204,204,220,0.07)" stroke-width="1"/>
<text x="1061.6" y="589" font-size="12.6" fill="#6e9fff" text-anchor="start" font-weight="normal">time</text>
<text x="1269.3" y="589" font-size="12.6" fill="#6e9fff" text-anchor="end" font-weight="normal" textLength="27.3" lengthAdjust="spacingAndGlyphs">flow1</text>
<text x="1333.3" y="589" font-size="12.6" fill="#6e9fff" text-anchor="end" font-weight="normal" textLength="27.5" lengthAdjust="spacingAndGlyphs">flow2</text>
<text x="1537" y="589" font-size="12.6" fill="#6e9fff" text-anchor="end" font-weight="normal" textLength="27.5" lengthAdjust="spacingAndGlyphs">flow3</text>
<text x="1061.6" y="617.1" font-size="12.8" fill="#c7c7d1" text-anchor="start" font-weight="normal" textLength="117.8" lengthAdjust="spacingAndGlyphs">Jun 8th, 2021 11:20:50</text>
<text x="1273.2" y="617.1" font-size="12.8" fill="#e8913d" text-anchor="end" font-weight="normal" textLength="21.2" lengthAdjust="spacingAndGlyphs">50%</text>
<text x="1336.3" y="617.1" font-size="12.8" fill="#e8913d" text-anchor="end" font-weight="normal" textLength="21.2" lengthAdjust="spacingAndGlyphs">50%</text>
<text x="1532.7" y="617.1" font-size="12.8" fill="#e8913d" text-anchor="end" font-weight="normal" textLength="21.2" lengthAdjust="spacingAndGlyphs">50%</text>
<text x="1061.6" y="645.5" font-size="12.8" fill="#c7c7d1" text-anchor="start" font-weight="normal" textLength="117.8" lengthAdjust="spacingAndGlyphs">Jun 8th, 2021 11:22:50</text>
<text x="1273.2" y="645.5" font-size="12.8" fill="#6fb864" text-anchor="end" font-weight="normal" textLength="31" lengthAdjust="spacingAndGlyphs">49.3%</text>
<text x="1336.3" y="645.5" font-size="12.8" fill="#6fb864" text-anchor="end" font-weight="normal" textLength="31" lengthAdjust="spacingAndGlyphs">44.0%</text>
<text x="1532.7" y="645.5" font-size="12.8" fill="#e8913d" text-anchor="end" font-weight="normal" textLength="31" lengthAdjust="spacingAndGlyphs">54.2%</text>
<text x="1061.6" y="673.9" font-size="12.8" fill="#c7c7d1" text-anchor="start" font-weight="normal" textLength="117.8" lengthAdjust="spacingAndGlyphs">Jun 8th, 2021 11:24:50</text>
<text x="1273.2" y="673.9" font-size="12.8" fill="#e8913d" text-anchor="end" font-weight="normal" textLength="31" lengthAdjust="spacingAndGlyphs">53.8%</text>
<text x="1336.3" y="673.9" font-size="12.8" fill="#6fb864" text-anchor="end" font-weight="normal" textLength="31" lengthAdjust="spacingAndGlyphs">49.3%</text>
<text x="1532.7" y="673.9" font-size="12.8" fill="#e8913d" text-anchor="end" font-weight="normal" textLength="31" lengthAdjust="spacingAndGlyphs">55.1%</text>
<text x="1061.6" y="702.3" font-size="12.8" fill="#c7c7d1" text-anchor="start" font-weight="normal" textLength="117.8" lengthAdjust="spacingAndGlyphs">Jun 8th, 2021 11:26:50</text>
<text x="1273.2" y="702.3" font-size="12.8" fill="#e8913d" text-anchor="end" font-weight="normal" textLength="31" lengthAdjust="spacingAndGlyphs">58.2%</text>
<text x="1336.3" y="702.3" font-size="12.8" fill="#6fb864" text-anchor="end" font-weight="normal" textLength="31" lengthAdjust="spacingAndGlyphs">42.8%</text>
<text x="1532.7" y="702.3" font-size="12.8" fill="#e8913d" text-anchor="end" font-weight="normal" textLength="31" lengthAdjust="spacingAndGlyphs">51.9%</text>
<text x="1061.6" y="730.7" font-size="12.8" fill="#c7c7d1" text-anchor="start" font-weight="normal" textLength="117.8" lengthAdjust="spacingAndGlyphs">Jun 8th, 2021 11:28:50</text>
<text x="1273.2" y="730.7" font-size="12.8" fill="#e8913d" text-anchor="end" font-weight="normal" textLength="31" lengthAdjust="spacingAndGlyphs">56.0%</text>
<text x="1336.3" y="730.7" font-size="12.8" fill="#6fb864" text-anchor="end" font-weight="normal" textLength="31" lengthAdjust="spacingAndGlyphs">38.3%</text>
<text x="1532.7" y="730.7" font-size="12.8" fill="#e8913d" text-anchor="end" font-weight="normal" textLength="31" lengthAdjust="spacingAndGlyphs">59.2%</text>
<text x="1061.6" y="759.1" font-size="12.8" fill="#c7c7d1" text-anchor="start" font-weight="normal" textLength="117.8" lengthAdjust="spacingAndGlyphs">Jun 8th, 2021 11:30:50</text>
<text x="1273.2" y="759.1" font-size="12.8" fill="#e8913d" text-anchor="end" font-weight="normal" textLength="31" lengthAdjust="spacingAndGlyphs">58.2%</text>
<text x="1336.3" y="759.1" font-size="12.8" fill="#6fb864" text-anchor="end" font-weight="normal" textLength="31" lengthAdjust="spacingAndGlyphs">44.7%</text>
<text x="1532.7" y="759.1" font-size="12.8" fill="#e8913d" text-anchor="end" font-weight="normal" textLength="31" lengthAdjust="spacingAndGlyphs">59.1%</text>
<text x="1061.6" y="787.5" font-size="12.8" fill="#c7c7d1" text-anchor="start" font-weight="normal" textLength="117.8" lengthAdjust="spacingAndGlyphs">Jun 8th, 2021 11:32:50</text>
<text x="1273.2" y="787.5" font-size="12.8" fill="#e0465a" text-anchor="end" font-weight="normal" textLength="31" lengthAdjust="spacingAndGlyphs">60.3%</text>
<text x="1336.3" y="787.5" font-size="12.8" fill="#6fb864" text-anchor="end" font-weight="normal" textLength="31" lengthAdjust="spacingAndGlyphs">40.6%</text>
<text x="1532.7" y="787.5" font-size="12.8" fill="#e0465a" text-anchor="end" font-weight="normal" textLength="31" lengthAdjust="spacingAndGlyphs">64.0%</text>
<rect x="1540" y="599.6" width="4.7" height="79.3" fill="#45474d"/>
<text x="84.1" y="31.1" font-size="15.2" fill="#ccccdc" text-anchor="start" font-weight="normal" textLength="49.4" lengthAdjust="spacingAndGlyphs">General</text>
<text x="141.2" y="31.1" font-size="15.2" fill="#ccccdc" text-anchor="start" font-weight="normal">/</text>
<text x="154.5" y="31.1" font-size="15.2" fill="#ccccdc" text-anchor="start" font-weight="normal" textLength="110" lengthAdjust="spacingAndGlyphs">Service overview</text>
<defs>
<linearGradient id="glogo" x1="0" y1="9" x2="0" y2="31" gradientUnits="userSpaceOnUse"><stop offset="0" stop-color="#f05a28"/><stop offset="1" stop-color="#fbca0a"/></linearGradient>
</defs>
<!-- grafana logo -->
<path fill="url(#glogo)" d="M35.83,18.74 L35.55,17.29 L32.34,15.60 L32.23,11.98 L31.04,11.09 L28.16,12.21 L26.68,9.49 L25.21,9.40 L22.36,12.24 L18.35,12.00 L17.30,13.05 L17.45,17.32 L14.72,20.61 L14.91,22.08 L18.45,24.69 L19.60,28.94 L20.90,29.65 L24.79,28.28 L28.49,30.11 L29.86,29.57 L31.02,26.01 L34.63,25.03 L35.24,23.68 L33.54,20.98 Z"/>
<path fill="none" stroke="#181b1f" stroke-width="2.3" stroke-linecap="round" stroke-linejoin="round" d="M37.24,18.82 L36.59,18.02 L35.89,17.32 L35.15,16.72 L34.37,16.21 L33.57,15.82 L32.77,15.52 L31.97,15.33 L31.34,15.06 L30.69,14.86 L30.05,14.72 L29.42,14.66 L28.80,14.65 L28.20,14.71 L27.64,14.82 L27.10,14.99 L26.60,15.20 L26.12,15.25 L25.66,15.35 L25.20,15.48 L24.76,15.66 L24.35,15.87 L23.95,16.11 L23.58,16.39 L23.24,16.69 L22.92,17.02 L22.64,17.38 L22.40,17.76 L22.18,18.15 L22.01,18.56 L21.87,18.98 L21.77,19.41 L21.71,19.84 L21.69,20.27 L21.70,20.70 L21.74,21.13 L21.81,21.55 L21.92,21.96 L22.06,22.35 L22.23,22.74 L22.44,23.10 L22.68,23.44 L22.95,23.76 L23.24,24.06 L23.56,24.33 L23.89,24.56 L24.25,24.77 L24.62,24.94 L25.00,25.09 L25.40,25.19 L25.80,25.26 L26.20,25.30 L26.60,25.30 L27.00,25.26 L27.39,25.19 L27.77,25.08 L28.14,24.94 L28.50,24.77 L28.83,24.57 L29.15,24.34 L29.44,24.09 L29.71,23.81 L29.95,23.51 L30.17,23.20 L30.35,22.87 L30.51,22.52 L30.63,22.17 L30.72,21.80 L30.78,21.44 L30.81,21.07 L30.80,20.70 L30.68,20.34 L30.54,20.01 L30.37,19.69 L30.17,19.40 L29.95,19.14 L29.72,18.90 L29.47,18.69 L29.20,18.51 L28.93,18.37 L28.66,18.25 L28.38,18.16 L28.10,18.10 L27.81,18.11 L27.53,18.14 L27.27,18.21 L27.02,18.30 L26.80,18.41 L26.60,18.54 L26.42,18.69 L26.27,18.85 L26.15,19.02 L26.05,19.20"/>
<!-- sidebar icons -->
<g fill="none" stroke="#c4c4ce" stroke-width="1.6" stroke-linecap="round" stroke-linejoin="round">
<circle cx="24.6" cy="93.6" r="6.3"/><path d="M29.3 98.4 L33.2 102.3"/>
<path d="M26 124.6 V137.2 M19.7 130.9 H32.3"/>
<rect x="18.6" y="158.9" width="6" height="6" rx="0.6"/><rect x="27.4" y="158.9" width="6" height="6" rx="0.6"/><rect x="18.6" y="167.7" width="6" height="6" rx="0.6"/><rect x="27.4" y="167.7" width="6" height="6" rx="0.6"/>
<circle cx="26" cy="202" r="7.3"/><path d="M28.6 199.4 L27.3 203.3 L23.4 204.6 L24.7 200.7 Z"/>
<path d="M20.6 241.2 V235.4 A5.4 5.4 0 0 1 31.4 235.4 V241.2 L32.6 242.4 H19.4 Z M24.2 244.6 A1.9 1.9 0 0 0 27.8 244.6"/>
<path d="M26 336.4 L28 338.2 L30.8 337.6 L31.5 340.3 L34 341.7 L33.1 344.3 L34 346.9 L31.5 348.3 L30.8 351 L28 350.4 L26 352.2 L24 350.4 L21.2 351 L20.5 348.3 L18 346.9 L18.9 344.3 L18 341.7 L20.5 340.3 L21.2 337.6 L24 338.2 Z"/>
<circle cx="26" cy="344.3" r="2.6"/>
<path d="M26 373.2 L32.6 375.6 V381 C32.6 385 29.8 387.6 26 388.8 C22.2 387.6 19.4 385 19.4 381 V375.6 Z"/>
</g>
<!-- globe -->
<g transform="translate(25.7 274.6)">
<circle r="11.1" fill="none" stroke="#143a40" stroke-width="0.9"/>
<circle r="9.2" fill="#76777b"/>
<path fill="#25272c" d="M-4.5,-8 C-2,-9.5 3,-9.3 4.5,-7.5 L3.5,-5.5 L7,-4.5 L7.5,-1.5 L4,-1.5 L2.5,0.5 L2.3,4 L3.5,6 L2.5,9 L-1.5,9.2 L-2,5 L-1.5,1.5 L-4,0 L-8.5,1 L-9,-2 L-6.5,-3.5 L-4.5,-5.5 Z"/>
<circle cx="-4.9" cy="-9.9" r="1.1" fill="#3cc6d8"/>
</g>
<!-- plugin icon -->
<g transform="translate(25.8 310)">
<path fill="#3d71d9" d="M-0.8,-0.7 H-11 A10.6 10.6 0 0 1 -0.8,-10.6 Z"/>
<path fill="#f3a531" d="M0.8,-0.7 V-10.6 A10.6 10.6 0 0 1 11,-0.7 Z"/>
<path fill="#3d71d9" d="M-0.8,0.7 V10.6 A10.6 10.6 0 0 1 -11,0.7 Z"/>
<path fill="#3d71d9" d="M0.8,0.7 H11 A10.6 10.6 0 0 1 0.8,10.6 Z"/>
<rect x="-8.2" y="-7" width="7.4" height="6" fill="#181b1f"/>
<rect x="0.8" y="-7" width="8" height="4.6" fill="#181b1f"/>
<rect x="-8.2" y="3" width="7.4" height="5.8" fill="#181b1f"/>
<rect x="0.8" y="3" width="8" height="5.8" fill="#181b1f"/>
<circle cx="-5.1" cy="-4" r="1.5" fill="none" stroke="#c9d6ea" stroke-width="0.9"/>
<path d="M-6.8 7.5 V6.2 M-5.3 7.5 V5.4 M-3.8 7.5 V4.6" stroke="#c9d6ea" stroke-width="0.9"/>
<path d="M2.4 7.3 L4.2 5.6 L5.4 6.4 L7.3 4.5" stroke="#c9d6ea" stroke-width="1" fill="none"/>
</g>
<!-- breadcrumb grid icon -->
<g fill="none" stroke="#c4c4ce" stroke-width="1.4" stroke-linejoin="round">
<g stroke-width="1.2"><rect x="64.2" y="20.3" width="4.8" height="4.8" rx="0.6"/><rect x="70.9" y="20.3" width="4.8" height="4.8" rx="0.6"/><rect x="64.2" y="27" width="4.8" height="4.8" rx="0.6"/><rect x="70.9" y="27" width="4.8" height="4.8" rx="0.6"/></g>
<path stroke-width="1.25" d="M285.60 20.60 L287.19 24.52 L291.40 24.81 L288.17 27.53 L289.19 31.64 L285.60 29.40 L282.01 31.64 L283.03 27.53 L279.80 24.81 L284.01 24.52 Z"/>
<g stroke-width="1.25"><circle cx="309" cy="26" r="1.9"/><circle cx="317.2" cy="21.8" r="1.9"/><circle cx="317.2" cy="30.2" r="1.9"/>
<path d="M310.7 25.1 L315.5 22.7 M310.7 26.9 L315.5 29.3"/></g>
</g>
<!-- topbar buttons -->
<g fill="#181b1f" stroke="#2a2d33" stroke-width="1">
<rect x="1184.7" y="13.5" width="33.4" height="25" rx="2"/>
<rect x="1225.5" y="13.5" width="28.3" height="25" rx="2"/>
<rect x="1261" y="13.5" width="28.6" height="25" rx="2"/>
<rect x="1296.9" y="13.5" width="148.5" height="25" rx="2"/>
<rect x="1454.6" y="13.5" width="55.4" height="25" rx="2"/>
<rect x="1517.7" y="13.5" width="28" height="25" rx="2"/>
</g>
<path d="M1416.7 14 V38 M1483 14 V38" stroke="#2a2d33" stroke-width="1"/>
<!-- add panel icon -->
<g fill="#a9aab1">
<rect x="1191.3" y="24.2" width="2.4" height="7" rx="0.5"/>
<rect x="1195.2" y="21.8" width="2.4" height="9.4" rx="0.5"/>
<rect x="1198.9" y="25.8" width="2.4" height="5.4" rx="0.5"/>
<rect x="1202.3" y="20.7" width="2.4" height="10.5" rx="0.5"/>
</g>
<path d="M1207.5 22.6 V28.8 M1204.4 25.7 H1210.6" stroke="#181b1f" stroke-width="4.2" stroke-linecap="round"/><path d="M1207.5 22.6 V28.8 M1204.4 25.7 H1210.6" stroke="#f5a623" stroke-width="2" stroke-linecap="round"/>
<g fill="none" stroke="#a9aab1" stroke-width="1.3" stroke-linejoin="round" stroke-linecap="round">
<!-- save -->
<path d="M1234.3 20.5 H1242.2 L1244.8 23.1 V30.6 A1 1 0 0 1 1243.8 31.6 H1234.3 A1 1 0 0 1 1233.3 30.6 V21.5 A1 1 0 0 1 1234.3 20.5 Z M1236.2 20.6 V22.8 H1240.6 V20.6 M1236.2 31.5 V28 H1241.2 V31.5"/>
<!-- settings gear -->
<path d="M1275 20 L1276.7 21.3 L1278.8 21 L1279.4 23.1 L1281.2 24.2 L1280.5 26.2 L1281.2 28.2 L1279.4 29.3 L1278.8 31.4 L1276.7 31.1 L1275 32.4 L1273.3 31.1 L1271.2 31.4 L1270.6 29.3 L1268.8 28.2 L1269.5 26.2 L1268.8 24.2 L1270.6 23.1 L1271.2 21 L1273.3 21.3 Z"/>
<circle cx="1275" cy="26.2" r="2"/>
<!-- clock -->
<circle cx="1310.8" cy="25.8" r="5.9"/>
<path d="M1310.5 22.6 V26.3 H1308.4"/>
<!-- chevron -->
<path d="M1400.9 24.5 L1403.3 26.8 L1405.7 24.5"/>
<!-- zoom out -->
<circle cx="1430.2" cy="25.6" r="5.2"/>
<path d="M1427.6 25.6 H1432.8 M1434 29.4 L1436.7 32"/>
<!-- refresh -->
<path d="M1474.1 25.9 A6 6 0 0 0 1463.3 23.2 M1463.2 20.6 V23.4 H1466 M1461.9 26.5 A6 6 0 0 0 1472.7 29.2 M1472.9 31.8 V29 H1470.1"/>
<!-- chevron -->
<path d="M1494.2 24.1 L1496.6 26.2 L1499 24.1"/>
<!-- tv -->
<path d="M1527.4 20.8 H1535.6 A1.4 1.4 0 0 1 1537 22.2 V27.8 A1.4 1.4 0 0 1 1535.6 29.2 H1527.4 A1.4 1.4 0 0 1 1526 27.8 V22.2 A1.4 1.4 0 0 1 1527.4 20.8 Z M1526.2 27 H1536.8 M1529.6 29.3 V31.8 H1533.4 V29.3"/>
</g>
<text x="1324.4" y="30.2" font-size="12" fill="#ccccdc" textLength="63.9" lengthAdjust="spacingAndGlyphs">Last 3 hours</text>

<rect x="1558.6" y="0" width="1.4" height="780" fill="#202227"/>

</svg>
</body></html>
